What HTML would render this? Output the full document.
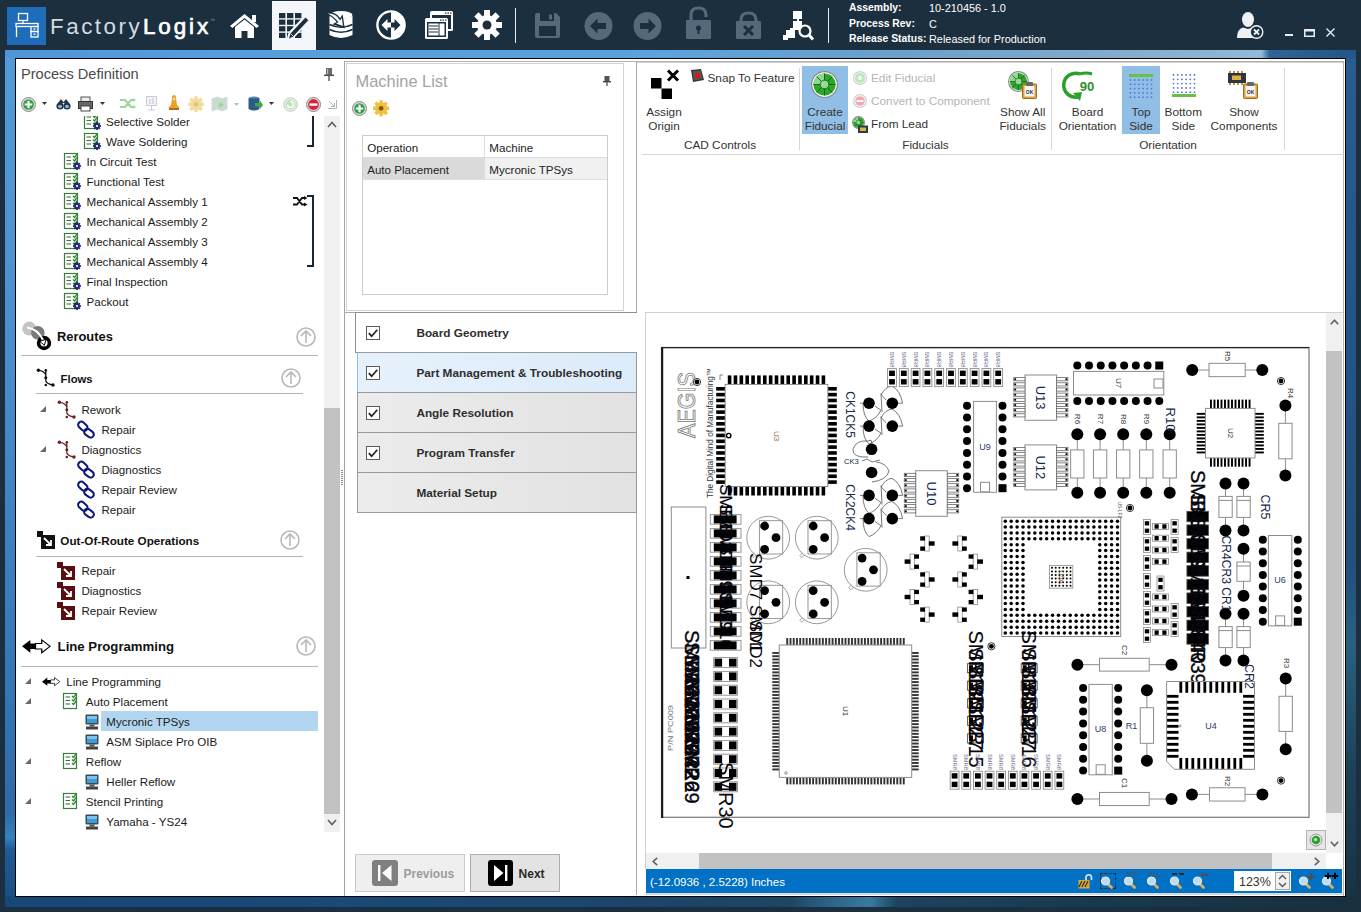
<!DOCTYPE html><html><head><meta charset="utf-8"><style>
*{box-sizing:border-box}
html,body{margin:0;padding:0}
body{width:1361px;height:912px;background:#1b2f3e;position:relative;overflow:hidden;font-family:"Liberation Sans",sans-serif;color:#222}
.a{position:absolute}
.t{position:absolute;white-space:nowrap;line-height:16px}
svg{position:absolute;overflow:visible}
</style></head><body>
<div class="a" style="left:7px;top:7px;width:39px;height:38px;background:#1f6cb8"></div>
<svg style="left:7px;top:7px" width="39" height="38" viewBox="0 0 39 38"><g fill="none" stroke="#fff" stroke-width="1.3">
  <rect x="11.5" y="6.5" width="9" height="7"/><line x1="16" y1="13.5" x2="16" y2="16.5"/>
  <rect x="9" y="16.5" width="22" height="3"/><line x1="9.5" y1="19.5" x2="9.5" y2="30"/>
  <rect x="24" y="19.5" width="7" height="5"/><rect x="24" y="24.5" width="7" height="5.5"/>
  <line x1="26.5" y1="22" x2="28.5" y2="22"/><line x1="26.5" y1="27.2" x2="28.5" y2="27.2"/></g></svg>
<div class="t" style="left:50px;top:13.5px;font-size:22.4px;line-height:26px;color:#d4dbe1;letter-spacing:2.5px">Factory</div>
<div class="t" style="left:143px;top:13.5px;font-size:22.4px;line-height:26px;color:#fff;font-weight:normal;-webkit-text-stroke:0.7px #fff;letter-spacing:2.9px">Logix</div>
<div class="t" style="left:210px;top:17.0px;font-size:5px;line-height:6px;color:#8a9aa8;font-weight:normal;">™</div>
<div class="a" style="left:272px;top:1px;width:44px;height:49px;background:#f5f6f9"></div>
<svg style="left:229px;top:13px" width="32" height="26" viewBox="0 0 32 26"><path d="M1 13 L15.5 1 L30 13 L27.5 15 L15.5 5 L3.5 15 Z" fill="#ffffff"/>
     <rect x="23" y="2" width="4" height="7" fill="#ffffff"/>
     <path d="M6 14 L15.5 6.5 L25 14 L25 25 L18.5 25 L18.5 18 L12.5 18 L12.5 25 L6 25 Z" fill="#ffffff"/></svg>
<svg style="left:279px;top:12.5px" width="30" height="27" viewBox="0 0 30 27"><rect x="0" y="0.0" width="6.4" height="5.2" fill="#1b2f3e"/><rect x="8" y="0.0" width="6.4" height="5.2" fill="#1b2f3e"/><rect x="16" y="0.0" width="6.4" height="5.2" fill="#1b2f3e"/><rect x="0" y="6.6" width="6.4" height="5.2" fill="#1b2f3e"/><rect x="8" y="6.6" width="6.4" height="5.2" fill="#1b2f3e"/><rect x="16" y="6.6" width="6.4" height="5.2" fill="#1b2f3e"/><rect x="0" y="13.2" width="6.4" height="5.2" fill="#1b2f3e"/><rect x="8" y="13.2" width="6.4" height="5.2" fill="#1b2f3e"/><rect x="16" y="13.2" width="6.4" height="5.2" fill="#1b2f3e"/><rect x="0" y="19.799999999999997" width="6.4" height="5.2" fill="#1b2f3e"/><rect x="8" y="19.799999999999997" width="6.4" height="5.2" fill="#1b2f3e"/><rect x="16" y="19.799999999999997" width="6.4" height="5.2" fill="#1b2f3e"/><path d="M9.5 25.5 L11 20 L26.5 3.5 L30 6.8 L14.5 23.3 Z" fill="#f5f6f9" stroke="#f5f6f9" stroke-width="3"/>
      <path d="M10 25.8 L11.5 20.5 L26.5 4.5 L29.3 7.2 L14.3 23.3 Z" fill="#1b2f3e"/>
      <path d="M11.5 20.5 L14.3 23.3" stroke="#f5f6f9" stroke-width="0.8"/></svg>
<svg style="left:328px;top:10px" width="26" height="30" viewBox="0 0 26 30"><ellipse cx="13" cy="5" rx="11.5" ry="4" fill="#ffffff"/>
      <path d="M1.5 6 L1.5 25 Q13 31 24.5 25 L24.5 6 Q13 12 1.5 6Z" fill="#ffffff"/>
      <path d="M1.5 14.5 Q13 20 24.5 14.5 M1.5 19.5 Q13 25 24.5 19.5" stroke="#1b2f3e" stroke-width="1.6" fill="none"/>
      <path d="M-1 3 Q8 2 12 10 L14 7 L15.5 17 L7 14 L10 12.5 Q7 7 -1 3Z" fill="#1b2f3e" stroke="#1b2f3e" stroke-width="2"/>
      <path d="M0 3.5 Q8 3 12 10.5 L13.8 8 L15 16 L8 13.5 L10.5 12.2 Q7 7.5 0 3.5Z" fill="#ffffff"/></svg>
<svg style="left:376px;top:10px" width="30" height="30" viewBox="0 0 30 30"><circle cx="15" cy="15" r="13.6" fill="none" stroke="#ffffff" stroke-width="2.4"/>
      <path d="M15 1.5 A13.5 13.5 0 0 1 15 28.5 Z" fill="#ffffff"/>
      <path d="M5.5 15 L11.5 9 L11.5 12.5 L15 12.5 L15 17.5 L11.5 17.5 L11.5 21 Z" fill="#ffffff"/>
      <path d="M24.5 15 L18.5 9 L18.5 12.5 L15 12.5 L15 17.5 L18.5 17.5 L18.5 21 Z" fill="#1b2f3e"/></svg>
<svg style="left:424px;top:10px" width="30" height="30" viewBox="0 0 30 30"><rect x="6" y="1" width="23" height="20" rx="1.5" fill="#ffffff"/>
      <rect x="8" y="5" width="19" height="14" fill="#1b2f3e"/>
      <rect x="1" y="8" width="23" height="21" rx="1.5" fill="#ffffff"/>
      <rect x="3" y="12" width="19" height="15" fill="#1b2f3e"/>
      <rect x="4.5" y="13.5" width="10" height="12" fill="#ffffff"/>
      <rect x="15.5" y="13.5" width="5" height="12" fill="#ffffff"/>
      <g stroke="#1b2f3e" stroke-width="1"><line x1="5" y1="16" x2="14" y2="16"/><line x1="5" y1="19" x2="14" y2="19"/><line x1="5" y1="22" x2="14" y2="22"/></g>
      <g fill="#1b2f3e"><rect x="16" y="9.5" width="1.5" height="1.2"/><rect x="18.5" y="9.5" width="1.5" height="1.2"/><rect x="21" y="9.5" width="1.5" height="1.2"/>
      <rect x="21" y="2.5" width="1.5" height="1.2"/><rect x="23.5" y="2.5" width="1.5" height="1.2"/><rect x="26" y="2.5" width="1.5" height="1.2"/></g></svg>
<svg style="left:472px;top:10px" width="30" height="30" viewBox="0 0 30 30"><rect x="12" y="0" width="6" height="7" fill="#ffffff" transform="rotate(0 15 15)"/><rect x="12" y="0" width="6" height="7" fill="#ffffff" transform="rotate(45 15 15)"/><rect x="12" y="0" width="6" height="7" fill="#ffffff" transform="rotate(90 15 15)"/><rect x="12" y="0" width="6" height="7" fill="#ffffff" transform="rotate(135 15 15)"/><rect x="12" y="0" width="6" height="7" fill="#ffffff" transform="rotate(180 15 15)"/><rect x="12" y="0" width="6" height="7" fill="#ffffff" transform="rotate(225 15 15)"/><rect x="12" y="0" width="6" height="7" fill="#ffffff" transform="rotate(270 15 15)"/><rect x="12" y="0" width="6" height="7" fill="#ffffff" transform="rotate(315 15 15)"/><circle cx="15" cy="15" r="10" fill="#ffffff"/><circle cx="15" cy="15" r="4.5" fill="#1b2f3e"/></svg>
<div class="a" style="left:515px;top:8px;width:1px;height:35px;background:#e8ecf0"></div>
<div class="a" style="left:828px;top:8px;width:1px;height:35px;background:#e8ecf0"></div>
<svg style="left:535px;top:13px" width="26" height="25" viewBox="0 0 26 25"><path d="M0 2 Q0 0 2 0 L21 0 L25 4 L25 23 Q25 25 23 25 L2 25 Q0 25 0 23Z" fill="#56687a"/>
      <rect x="5" y="0" width="14" height="8" fill="#1b2f3e"/><rect x="14" y="1.5" width="3" height="5" fill="#56687a"/>
      <rect x="4" y="13" width="17" height="10" fill="#1b2f3e"/></svg>
<svg style="left:584px;top:12px" width="29" height="28" viewBox="0 0 29 28"><circle cx="14.5" cy="14" r="14" fill="#56687a"/>
      <path d="M6 14 L13.5 6.5 L13.5 11 L22 11 L22 17 L13.5 17 L13.5 21.5Z" fill="#1b2f3e"/></svg>
<svg style="left:633px;top:12px" width="29" height="28" viewBox="0 0 29 28"><circle cx="14.5" cy="14" r="14" fill="#56687a"/>
      <path d="M23 14 L15.5 6.5 L15.5 11 L7 11 L7 17 L15.5 17 L15.5 21.5Z" fill="#1b2f3e"/></svg>
<svg style="left:686px;top:6px" width="25" height="34" viewBox="0 0 25 34"><path d="M5 15 L5 9 Q5 2 12.5 2 Q20 2 20 9 L20 11" fill="none" stroke="#56687a" stroke-width="3.2"/>
      <rect x="0" y="14" width="25" height="19" rx="1" fill="#56687a"/>
      <circle cx="12.5" cy="22" r="2.5" fill="#1b2f3e"/><rect x="11.5" y="22" width="2" height="6" fill="#1b2f3e"/></svg>
<svg style="left:736px;top:11px" width="25" height="29" viewBox="0 0 25 29"><path d="M5 11 L5 9 Q5 2 12.5 2 Q20 2 20 9 L20 11" fill="none" stroke="#56687a" stroke-width="3.2"/>
      <rect x="0" y="10" width="25" height="18" rx="1" fill="#56687a"/>
      <path d="M8 15 L17 24 M17 15 L8 24" stroke="#1b2f3e" stroke-width="3"/></svg>
<svg style="left:783px;top:11px" width="31" height="30" viewBox="0 0 31 30"><rect x="10" y="0" width="9" height="8" fill="#ffffff"/><rect x="10" y="10" width="9" height="7" fill="#ffffff"/>
      <rect x="3" y="19" width="9" height="8" fill="#ffffff"/><rect x="0" y="24" width="5" height="5" fill="#ffffff"/>
      <rect x="14" y="8" width="2" height="3" fill="#ffffff"/><rect x="7" y="17" width="9" height="2" fill="#ffffff"/>
      <circle cx="22" cy="20" r="5.5" fill="none" stroke="#ffffff" stroke-width="2.2"/><path d="M26 24 L30 28.5" stroke="#ffffff" stroke-width="3"/></svg>
<div class="t" style="left:849px;top:1.0px;font-size:10.4px;line-height:14px;color:#fff;font-weight:bold;">Assembly:</div>
<div class="t" style="left:849px;top:17.0px;font-size:10.4px;line-height:14px;color:#fff;font-weight:bold;">Process Rev:</div>
<div class="t" style="left:849px;top:32.0px;font-size:10.4px;line-height:14px;color:#fff;font-weight:bold;">Release Status:</div>
<div class="t" style="left:929px;top:1.0px;font-size:10.9px;line-height:14px;color:#fff;font-weight:normal;">10-210456 - 1.0</div>
<div class="t" style="left:929px;top:17.0px;font-size:10.9px;line-height:14px;color:#fff;font-weight:normal;">C</div>
<div class="t" style="left:929px;top:32.0px;font-size:10.9px;line-height:14px;color:#fff;font-weight:normal;">Released for Production</div>
<svg style="left:1237px;top:12px" width="27" height="28" viewBox="0 0 27 28"><ellipse cx="11" cy="7.5" rx="6" ry="7.5" fill="#eef1f4"/>
      <path d="M0 26 Q0 17 6 15.5 L11 17 L16 15.5 Q20 16.5 21 19 L21 26Z" fill="#eef1f4"/>
      <circle cx="19.5" cy="20" r="7" fill="#eef1f4"/><circle cx="19.5" cy="20" r="5.6" fill="#1b2f3e"/>
      <path d="M17 17.5 L22 22.5 M22 17.5 L17 22.5" stroke="#eef1f4" stroke-width="1.8"/></svg>
<div class="a" style="left:1285px;top:34px;width:8px;height:2px;background:#e8ecf0"></div>
<svg style="left:1304px;top:29px" width="11" height="8" viewBox="0 0 11 8"><rect x="0.75" y="0.75" width="9.5" height="6.5" fill="none" stroke="#e8ecf0" stroke-width="1.5"/><rect x="0.5" y="0.5" width="10" height="2" fill="#e8ecf0"/></svg>
<svg style="left:1326px;top:28px" width="9" height="9" viewBox="0 0 9 9"><path d="M0.5 0.5 L8.5 8.5 M8.5 0.5 L0.5 8.5" stroke="#e8ecf0" stroke-width="1.4"/></svg>
<div class="a" style="left:5px;top:50px;width:1351px;height:8px;background:linear-gradient(90deg,#4f96d6 0%,#569fdc 20%,#5aa2dc 45%,#6aa0cc 65%,#7fa9cb 80%,#94b8d6 93%,#2e6596 93.6%,#285c8e 97%,#24558a 100%)"></div>
<div class="a" style="left:5px;top:58px;width:10px;height:838px;background:linear-gradient(180deg,#559ad8 0%,#4a8ecf 35%,#3a7cbe 65%,#2c6ca8 90%,#3580bd 93%,#1f5a94 94.5%,#1b4f86 100%)"></div>
<div class="a" style="left:1346px;top:58px;width:10px;height:838px;background:linear-gradient(180deg,#2a5c8e 0%,#245487 35%,#22507a 60%,#2a6080 70%,#1d4258 85%,#183444 100%)"></div>
<div class="a" style="left:5px;top:896px;width:1351px;height:11px;background:linear-gradient(90deg,#174777 0%,#1a4a78 25%,#1b456c 45%,#1c4662 58%,#2a6488 61%,#3a7aa0 64%,#1c4460 66%,#183a4e 80%,#17303f 100%)"></div>
<div class="a" style="left:15px;top:58px;width:1331px;height:839px;background:#fff;border:1px solid #000"></div>
<div class="t" style="left:21px;top:65.0px;font-size:14.6px;line-height:18px;color:#4a4a4a;font-weight:normal;">Process Definition</div>
<svg style="left:324px;top:68px" width="10" height="13" viewBox="0 0 10 13"><rect x="2" y="0" width="6" height="7" fill="#6a6a6a"/><rect x="0" y="6.5" width="10" height="1.6" fill="#555"/><rect x="4.3" y="8" width="1.4" height="5" fill="#555"/><rect x="3" y="1" width="1.2" height="5" fill="#bbb"/></svg>
<svg style="left:21px;top:97px" width="15" height="15" viewBox="0 0 15 15"><circle cx="7.5" cy="7.5" r="7" fill="#ddd" stroke="#8a8a8a" stroke-width="1"/>
    <circle cx="7.5" cy="7.5" r="5.3" fill="#2ea043"/>
    <path d="M7.5 3.8 L7.5 11.2 M3.8 7.5 L11.2 7.5" stroke="#fff" stroke-width="2.2"/></svg>
<svg style="left:42px;top:102px" width="6" height="4" viewBox="0 0 6 4"><path d="M0 0 L5 0 L2.5 3Z" fill="#333"/></svg>
<svg style="left:56px;top:98px" width="15" height="12" viewBox="0 0 15 12"><g fill="#2a3340"><ellipse cx="4" cy="8" rx="3.6" ry="3.5"/><ellipse cx="11" cy="8" rx="3.6" ry="3.5"/><path d="M2 5 L5 1 L8 5Z M7 5 L10 1 L13 5Z"/></g><ellipse cx="4" cy="8.5" rx="2" ry="1.7" fill="#7fb8e8"/><ellipse cx="11" cy="8.5" rx="2" ry="1.7" fill="#7fb8e8"/></svg>
<svg style="left:78px;top:97px" width="15" height="14" viewBox="0 0 15 14"><rect x="3" y="0" width="9" height="5" fill="#eee" stroke="#555"/><rect x="0.5" y="4.5" width="14" height="7" fill="#666" stroke="#333"/><rect x="3" y="9" width="9" height="5" fill="#fff" stroke="#444"/></svg>
<svg style="left:100px;top:102px" width="6" height="4" viewBox="0 0 6 4"><path d="M0 0 L5 0 L2.5 3Z" fill="#333"/></svg>
<svg style="left:120px;top:98px" width="16" height="12" viewBox="0 0 16 12"><path d="M0 2 L5 2 L11 9 L14 9 M0 9 L5 9 L11 2 L14 2" stroke="#9ad69a" stroke-width="2.2" fill="none"/><path d="M13 0 L16 2 L13 4Z M13 7 L16 9 L13 11Z" fill="#9ad69a"/></svg>
<svg style="left:146px;top:96px" width="11" height="15" viewBox="0 0 11 15"><rect x="0.5" y="0.5" width="10" height="9" fill="#f4f4f4" stroke="#ccc"/><rect x="3" y="3" width="2" height="5" fill="#d8d8f0"/><rect x="6" y="2" width="2" height="6" fill="#d8d8f0"/><path d="M5.5 10 L5.5 14 M2 14 L9 14" stroke="#ccc"/></svg>
<svg style="left:168px;top:95px" width="12" height="16" viewBox="0 0 12 16"><path d="M6 0 Q8 0 8 3 L9 10 L12 13 L0 13 L3 10 L4 3 Q4 0 6 0Z" fill="#e8a030"/><rect x="1" y="13" width="10" height="2" fill="#b86a10"/><circle cx="6" cy="4" r="1.5" fill="#f8d080"/></svg>
<svg style="left:188px;top:96px" width="17" height="17" viewBox="0 0 17 17"><rect x="6.4" y="0.3" width="3.4" height="16" fill="#f5dc9a" transform="rotate(0 8.1 8.3)"/><rect x="6.4" y="0.3" width="3.4" height="16" fill="#f5dc9a" transform="rotate(45 8.1 8.3)"/><rect x="6.4" y="0.3" width="3.4" height="16" fill="#f5dc9a" transform="rotate(90 8.1 8.3)"/><rect x="6.4" y="0.3" width="3.4" height="16" fill="#f5dc9a" transform="rotate(135 8.1 8.3)"/><circle cx="8.1" cy="8.3" r="6" fill="#f5dc9a"/><circle cx="8.1" cy="8.3" r="2.4" fill="#d9c48a"/></svg>
<svg style="left:212px;top:97px" width="16" height="15" viewBox="0 0 16 15"><path d="M0 2 L5 0 L10 2 L15 0 L15 12 L10 14 L5 12 L0 14Z" fill="#c9dcc9" stroke="#d0d8e8"/><path d="M7 5 L12 8 L7 11Z" fill="#a8d0a8"/></svg>
<svg style="left:234px;top:103px" width="5" height="3" viewBox="0 0 5 3"><path d="M0 0 L5 0 L2.5 3Z" fill="#bbb"/></svg>
<svg style="left:248px;top:96px" width="15" height="16" viewBox="0 0 15 16"><ellipse cx="6" cy="2.5" rx="5.5" ry="2" fill="#5a86b0"/><path d="M0.5 2.5 L0.5 13 Q6 16 11.5 13 L11.5 2.5Z" fill="#2d5a85"/><path d="M7 7 L12 7 L12 4.5 L15 9 L12 13 L12 10.5 L7 10.5Z" fill="#3aaa3a"/></svg>
<svg style="left:269px;top:102px" width="6" height="4" viewBox="0 0 6 4"><path d="M0 0 L5 0 L2.5 3Z" fill="#333"/></svg>
<svg style="left:283px;top:97px" width="15" height="15" viewBox="0 0 15 15"><circle cx="7.5" cy="7.5" r="6.8" fill="#e8f0e8" stroke="#c8c8c8" stroke-width="1"/><circle cx="7.5" cy="7.5" r="5" fill="#bfe3bf"/><path d="M4.5 7.5 A3 3 0 1 0 7.5 4.5" stroke="#fff" stroke-width="1.4" fill="none"/></svg>
<svg style="left:306px;top:97px" width="15" height="15" viewBox="0 0 15 15"><circle cx="7.5" cy="7.5" r="7" fill="#ddd" stroke="#888" stroke-width="1"/><circle cx="7.5" cy="7.5" r="5.4" fill="#e0203a"/><rect x="3.5" y="6.4" width="8" height="2.4" fill="#fff"/></svg>
<svg style="left:328px;top:100px" width="9" height="9" viewBox="0 0 9 9"><path d="M1 1 L6.5 6.5 M3 6.5 L6.5 6.5 L6.5 3 M0 8.5 L8.5 8.5 L8.5 0" stroke="#aaa" stroke-width="0.9" fill="none"/></svg>
<svg style="left:84px;top:112px" width="17" height="19" viewBox="0 0 17 19"><rect x="0.5" y="1.5" width="13" height="15" fill="#fff" stroke="#3f7a3f" stroke-width="1.2"/>
    <g stroke="#3f6f3f" stroke-width="1.1"><line x1="2.5" y1="5" x2="7" y2="5"/><line x1="2.5" y1="8.5" x2="7" y2="8.5"/><line x1="2.5" y1="12" x2="7" y2="12"/></g>
    <path d="M9 4 L10.5 5.5 L13.5 1.5 M9 7.5 L10.5 9 L13.5 5 M9 11 L10.5 12.5 L13.5 8.5" stroke="#2d8a2d" stroke-width="1.3" fill="none"/><rect x="12.1" y="10" width="1.8" height="8" fill="#222a6a" transform="rotate(0 13 14)"/><rect x="12.1" y="10" width="1.8" height="8" fill="#222a6a" transform="rotate(45 13 14)"/><rect x="12.1" y="10" width="1.8" height="8" fill="#222a6a" transform="rotate(90 13 14)"/><rect x="12.1" y="10" width="1.8" height="8" fill="#222a6a" transform="rotate(135 13 14)"/><circle cx="13" cy="14" r="2.8" fill="#222a6a"/><circle cx="13" cy="14" r="1.1" fill="#fff"/></svg>
<div class="t" style="left:106px;top:114.0px;font-size:11.6px;line-height:16px;color:#1a1a1a;font-weight:normal;">Selective Solder</div>
<svg style="left:84px;top:132px" width="17" height="19" viewBox="0 0 17 19"><rect x="0.5" y="1.5" width="13" height="15" fill="#fff" stroke="#3f7a3f" stroke-width="1.2"/>
    <g stroke="#3f6f3f" stroke-width="1.1"><line x1="2.5" y1="5" x2="7" y2="5"/><line x1="2.5" y1="8.5" x2="7" y2="8.5"/><line x1="2.5" y1="12" x2="7" y2="12"/></g>
    <path d="M9 4 L10.5 5.5 L13.5 1.5 M9 7.5 L10.5 9 L13.5 5 M9 11 L10.5 12.5 L13.5 8.5" stroke="#2d8a2d" stroke-width="1.3" fill="none"/><rect x="12.1" y="10" width="1.8" height="8" fill="#222a6a" transform="rotate(0 13 14)"/><rect x="12.1" y="10" width="1.8" height="8" fill="#222a6a" transform="rotate(45 13 14)"/><rect x="12.1" y="10" width="1.8" height="8" fill="#222a6a" transform="rotate(90 13 14)"/><rect x="12.1" y="10" width="1.8" height="8" fill="#222a6a" transform="rotate(135 13 14)"/><circle cx="13" cy="14" r="2.8" fill="#222a6a"/><circle cx="13" cy="14" r="1.1" fill="#fff"/></svg>
<div class="t" style="left:106px;top:134.0px;font-size:11.6px;line-height:16px;color:#1a1a1a;font-weight:normal;">Wave Soldering</div>
<svg style="left:64px;top:152px" width="17" height="19" viewBox="0 0 17 19"><rect x="0.5" y="1.5" width="13" height="15" fill="#fff" stroke="#3f7a3f" stroke-width="1.2"/>
    <g stroke="#3f6f3f" stroke-width="1.1"><line x1="2.5" y1="5" x2="7" y2="5"/><line x1="2.5" y1="8.5" x2="7" y2="8.5"/><line x1="2.5" y1="12" x2="7" y2="12"/></g>
    <path d="M9 4 L10.5 5.5 L13.5 1.5 M9 7.5 L10.5 9 L13.5 5 M9 11 L10.5 12.5 L13.5 8.5" stroke="#2d8a2d" stroke-width="1.3" fill="none"/><rect x="12.1" y="10" width="1.8" height="8" fill="#222a6a" transform="rotate(0 13 14)"/><rect x="12.1" y="10" width="1.8" height="8" fill="#222a6a" transform="rotate(45 13 14)"/><rect x="12.1" y="10" width="1.8" height="8" fill="#222a6a" transform="rotate(90 13 14)"/><rect x="12.1" y="10" width="1.8" height="8" fill="#222a6a" transform="rotate(135 13 14)"/><circle cx="13" cy="14" r="2.8" fill="#222a6a"/><circle cx="13" cy="14" r="1.1" fill="#fff"/></svg>
<div class="t" style="left:86.5px;top:154.0px;font-size:11.6px;line-height:16px;color:#1a1a1a;font-weight:normal;">In Circuit Test</div>
<svg style="left:64px;top:172px" width="17" height="19" viewBox="0 0 17 19"><rect x="0.5" y="1.5" width="13" height="15" fill="#fff" stroke="#3f7a3f" stroke-width="1.2"/>
    <g stroke="#3f6f3f" stroke-width="1.1"><line x1="2.5" y1="5" x2="7" y2="5"/><line x1="2.5" y1="8.5" x2="7" y2="8.5"/><line x1="2.5" y1="12" x2="7" y2="12"/></g>
    <path d="M9 4 L10.5 5.5 L13.5 1.5 M9 7.5 L10.5 9 L13.5 5 M9 11 L10.5 12.5 L13.5 8.5" stroke="#2d8a2d" stroke-width="1.3" fill="none"/><rect x="12.1" y="10" width="1.8" height="8" fill="#222a6a" transform="rotate(0 13 14)"/><rect x="12.1" y="10" width="1.8" height="8" fill="#222a6a" transform="rotate(45 13 14)"/><rect x="12.1" y="10" width="1.8" height="8" fill="#222a6a" transform="rotate(90 13 14)"/><rect x="12.1" y="10" width="1.8" height="8" fill="#222a6a" transform="rotate(135 13 14)"/><circle cx="13" cy="14" r="2.8" fill="#222a6a"/><circle cx="13" cy="14" r="1.1" fill="#fff"/></svg>
<div class="t" style="left:86.5px;top:174.0px;font-size:11.6px;line-height:16px;color:#1a1a1a;font-weight:normal;">Functional Test</div>
<svg style="left:64px;top:192px" width="17" height="19" viewBox="0 0 17 19"><rect x="0.5" y="1.5" width="13" height="15" fill="#fff" stroke="#3f7a3f" stroke-width="1.2"/>
    <g stroke="#3f6f3f" stroke-width="1.1"><line x1="2.5" y1="5" x2="7" y2="5"/><line x1="2.5" y1="8.5" x2="7" y2="8.5"/><line x1="2.5" y1="12" x2="7" y2="12"/></g>
    <path d="M9 4 L10.5 5.5 L13.5 1.5 M9 7.5 L10.5 9 L13.5 5 M9 11 L10.5 12.5 L13.5 8.5" stroke="#2d8a2d" stroke-width="1.3" fill="none"/><rect x="12.1" y="10" width="1.8" height="8" fill="#222a6a" transform="rotate(0 13 14)"/><rect x="12.1" y="10" width="1.8" height="8" fill="#222a6a" transform="rotate(45 13 14)"/><rect x="12.1" y="10" width="1.8" height="8" fill="#222a6a" transform="rotate(90 13 14)"/><rect x="12.1" y="10" width="1.8" height="8" fill="#222a6a" transform="rotate(135 13 14)"/><circle cx="13" cy="14" r="2.8" fill="#222a6a"/><circle cx="13" cy="14" r="1.1" fill="#fff"/></svg>
<div class="t" style="left:86.5px;top:194.0px;font-size:11.6px;line-height:16px;color:#1a1a1a;font-weight:normal;">Mechanical Assembly 1</div>
<svg style="left:64px;top:212px" width="17" height="19" viewBox="0 0 17 19"><rect x="0.5" y="1.5" width="13" height="15" fill="#fff" stroke="#3f7a3f" stroke-width="1.2"/>
    <g stroke="#3f6f3f" stroke-width="1.1"><line x1="2.5" y1="5" x2="7" y2="5"/><line x1="2.5" y1="8.5" x2="7" y2="8.5"/><line x1="2.5" y1="12" x2="7" y2="12"/></g>
    <path d="M9 4 L10.5 5.5 L13.5 1.5 M9 7.5 L10.5 9 L13.5 5 M9 11 L10.5 12.5 L13.5 8.5" stroke="#2d8a2d" stroke-width="1.3" fill="none"/><rect x="12.1" y="10" width="1.8" height="8" fill="#222a6a" transform="rotate(0 13 14)"/><rect x="12.1" y="10" width="1.8" height="8" fill="#222a6a" transform="rotate(45 13 14)"/><rect x="12.1" y="10" width="1.8" height="8" fill="#222a6a" transform="rotate(90 13 14)"/><rect x="12.1" y="10" width="1.8" height="8" fill="#222a6a" transform="rotate(135 13 14)"/><circle cx="13" cy="14" r="2.8" fill="#222a6a"/><circle cx="13" cy="14" r="1.1" fill="#fff"/></svg>
<div class="t" style="left:86.5px;top:214.0px;font-size:11.6px;line-height:16px;color:#1a1a1a;font-weight:normal;">Mechanical Assembly 2</div>
<svg style="left:64px;top:232px" width="17" height="19" viewBox="0 0 17 19"><rect x="0.5" y="1.5" width="13" height="15" fill="#fff" stroke="#3f7a3f" stroke-width="1.2"/>
    <g stroke="#3f6f3f" stroke-width="1.1"><line x1="2.5" y1="5" x2="7" y2="5"/><line x1="2.5" y1="8.5" x2="7" y2="8.5"/><line x1="2.5" y1="12" x2="7" y2="12"/></g>
    <path d="M9 4 L10.5 5.5 L13.5 1.5 M9 7.5 L10.5 9 L13.5 5 M9 11 L10.5 12.5 L13.5 8.5" stroke="#2d8a2d" stroke-width="1.3" fill="none"/><rect x="12.1" y="10" width="1.8" height="8" fill="#222a6a" transform="rotate(0 13 14)"/><rect x="12.1" y="10" width="1.8" height="8" fill="#222a6a" transform="rotate(45 13 14)"/><rect x="12.1" y="10" width="1.8" height="8" fill="#222a6a" transform="rotate(90 13 14)"/><rect x="12.1" y="10" width="1.8" height="8" fill="#222a6a" transform="rotate(135 13 14)"/><circle cx="13" cy="14" r="2.8" fill="#222a6a"/><circle cx="13" cy="14" r="1.1" fill="#fff"/></svg>
<div class="t" style="left:86.5px;top:234.0px;font-size:11.6px;line-height:16px;color:#1a1a1a;font-weight:normal;">Mechanical Assembly 3</div>
<svg style="left:64px;top:252px" width="17" height="19" viewBox="0 0 17 19"><rect x="0.5" y="1.5" width="13" height="15" fill="#fff" stroke="#3f7a3f" stroke-width="1.2"/>
    <g stroke="#3f6f3f" stroke-width="1.1"><line x1="2.5" y1="5" x2="7" y2="5"/><line x1="2.5" y1="8.5" x2="7" y2="8.5"/><line x1="2.5" y1="12" x2="7" y2="12"/></g>
    <path d="M9 4 L10.5 5.5 L13.5 1.5 M9 7.5 L10.5 9 L13.5 5 M9 11 L10.5 12.5 L13.5 8.5" stroke="#2d8a2d" stroke-width="1.3" fill="none"/><rect x="12.1" y="10" width="1.8" height="8" fill="#222a6a" transform="rotate(0 13 14)"/><rect x="12.1" y="10" width="1.8" height="8" fill="#222a6a" transform="rotate(45 13 14)"/><rect x="12.1" y="10" width="1.8" height="8" fill="#222a6a" transform="rotate(90 13 14)"/><rect x="12.1" y="10" width="1.8" height="8" fill="#222a6a" transform="rotate(135 13 14)"/><circle cx="13" cy="14" r="2.8" fill="#222a6a"/><circle cx="13" cy="14" r="1.1" fill="#fff"/></svg>
<div class="t" style="left:86.5px;top:254.0px;font-size:11.6px;line-height:16px;color:#1a1a1a;font-weight:normal;">Mechanical Assembly 4</div>
<svg style="left:64px;top:272px" width="17" height="19" viewBox="0 0 17 19"><rect x="0.5" y="1.5" width="13" height="15" fill="#fff" stroke="#3f7a3f" stroke-width="1.2"/>
    <g stroke="#3f6f3f" stroke-width="1.1"><line x1="2.5" y1="5" x2="7" y2="5"/><line x1="2.5" y1="8.5" x2="7" y2="8.5"/><line x1="2.5" y1="12" x2="7" y2="12"/></g>
    <path d="M9 4 L10.5 5.5 L13.5 1.5 M9 7.5 L10.5 9 L13.5 5 M9 11 L10.5 12.5 L13.5 8.5" stroke="#2d8a2d" stroke-width="1.3" fill="none"/><rect x="12.1" y="10" width="1.8" height="8" fill="#222a6a" transform="rotate(0 13 14)"/><rect x="12.1" y="10" width="1.8" height="8" fill="#222a6a" transform="rotate(45 13 14)"/><rect x="12.1" y="10" width="1.8" height="8" fill="#222a6a" transform="rotate(90 13 14)"/><rect x="12.1" y="10" width="1.8" height="8" fill="#222a6a" transform="rotate(135 13 14)"/><circle cx="13" cy="14" r="2.8" fill="#222a6a"/><circle cx="13" cy="14" r="1.1" fill="#fff"/></svg>
<div class="t" style="left:86.5px;top:274.0px;font-size:11.6px;line-height:16px;color:#1a1a1a;font-weight:normal;">Final Inspection</div>
<svg style="left:64px;top:292px" width="17" height="19" viewBox="0 0 17 19"><rect x="0.5" y="1.5" width="13" height="15" fill="#fff" stroke="#3f7a3f" stroke-width="1.2"/>
    <g stroke="#3f6f3f" stroke-width="1.1"><line x1="2.5" y1="5" x2="7" y2="5"/><line x1="2.5" y1="8.5" x2="7" y2="8.5"/><line x1="2.5" y1="12" x2="7" y2="12"/></g>
    <path d="M9 4 L10.5 5.5 L13.5 1.5 M9 7.5 L10.5 9 L13.5 5 M9 11 L10.5 12.5 L13.5 8.5" stroke="#2d8a2d" stroke-width="1.3" fill="none"/><rect x="12.1" y="10" width="1.8" height="8" fill="#222a6a" transform="rotate(0 13 14)"/><rect x="12.1" y="10" width="1.8" height="8" fill="#222a6a" transform="rotate(45 13 14)"/><rect x="12.1" y="10" width="1.8" height="8" fill="#222a6a" transform="rotate(90 13 14)"/><rect x="12.1" y="10" width="1.8" height="8" fill="#222a6a" transform="rotate(135 13 14)"/><circle cx="13" cy="14" r="2.8" fill="#222a6a"/><circle cx="13" cy="14" r="1.1" fill="#fff"/></svg>
<div class="t" style="left:86.5px;top:294.0px;font-size:11.6px;line-height:16px;color:#1a1a1a;font-weight:normal;">Packout</div>
<div class="a" style="left:60px;top:112px;width:260px;height:4px;background:#fff"></div>
<div class="a" style="left:312px;top:116px;width:2px;height:30px;background:#1b2634"></div>
<div class="a" style="left:307px;top:145px;width:7px;height:2px;background:#1b2634"></div>
<div class="a" style="left:312px;top:195px;width:2px;height:72px;background:#1b2634"></div>
<div class="a" style="left:307px;top:195px;width:7px;height:2px;background:#1b2634"></div>
<div class="a" style="left:307px;top:265px;width:7px;height:2px;background:#1b2634"></div>
<svg style="left:293px;top:196px" width="15" height="11" viewBox="0 0 15 11"><path d="M0 2 L4 2 L9 8.5 L12 8.5 M0 8.5 L4 8.5 L9 2 L12 2" stroke="#111" stroke-width="1.8" fill="none"/><path d="M11 0 L14.5 2 L11 4Z M11 6.5 L14.5 8.5 L11 10.5Z" fill="#111"/></svg>
<div class="a" style="left:324px;top:116px;width:16px;height:716px;background:#f0f0f0"></div>
<div class="a" style="left:324px;top:408px;width:16px;height:406px;background:#c2c2c2"></div>
<svg style="left:327px;top:121px" width="10" height="7" viewBox="0 0 10 7"><path d="M1 6 L5 1.5 L9 6" stroke="#606060" stroke-width="1.6" fill="none"/></svg>
<svg style="left:327px;top:819px" width="10" height="7" viewBox="0 0 10 7"><path d="M1 1 L5 5.5 L9 1" stroke="#606060" stroke-width="1.6" fill="none"/></svg>
<div class="a" style="left:341px;top:470px;width:2px;height:1px;background:#8a8a8a"></div>
<div class="a" style="left:341px;top:472px;width:2px;height:1px;background:#8a8a8a"></div>
<div class="a" style="left:341px;top:474px;width:2px;height:1px;background:#8a8a8a"></div>
<div class="a" style="left:341px;top:476px;width:2px;height:1px;background:#8a8a8a"></div>
<div class="a" style="left:341px;top:478px;width:2px;height:1px;background:#8a8a8a"></div>
<div class="a" style="left:341px;top:480px;width:2px;height:1px;background:#8a8a8a"></div>
<div class="a" style="left:341px;top:482px;width:2px;height:1px;background:#8a8a8a"></div>
<div class="a" style="left:341px;top:484px;width:2px;height:1px;background:#8a8a8a"></div>
<svg style="left:23px;top:321px" width="30" height="30" viewBox="0 0 30 30"><circle cx="6.3" cy="7.6" r="7" fill="#c4c4c4"/>
      <circle cx="14.8" cy="11.8" r="6.8" fill="#7a7a7a"/>
      <circle cx="21" cy="22" r="7.2" fill="#000"/><circle cx="21" cy="22" r="3.6" fill="#fff"/>
      <path d="M4 6.5 Q15 8 20 19" stroke="#fff" stroke-width="2.2" fill="none"/>
      <path d="M16 20 L21.5 25 L24 17.5Z" fill="#000"/><path d="M17.5 20.5 L21 23.5 L22.5 19Z" fill="#fff"/></svg>
<div class="t" style="left:57px;top:328.0px;font-size:12.9px;line-height:18px;color:#111;font-weight:bold;">Reroutes</div>
<svg style="left:296px;top:327px" width="20" height="20" viewBox="0 0 20 20"><circle cx="10" cy="10" r="9" fill="none" stroke="#b8b8b8" stroke-width="1.6"/>
    <path d="M10 16 L10 4 M5 9 L10 4 L15 9" stroke="#b8b8b8" stroke-width="1.6" fill="none"/></svg>
<div class="a" style="left:21px;top:355px;width:297px;height:1px;background:#b4b4b4"></div>
<svg style="left:36px;top:369px" width="18" height="18" viewBox="0 0 18 18"><path d="M2.4 1.2 Q8 2 9.8 6 M9.8 1.2 L9.8 12 Q11 15 17 16" stroke="#111" stroke-width="1.3" fill="none"/>
    <g fill="#111"><circle cx="2.4" cy="1.2" r="1.7"/><circle cx="9.8" cy="1.2" r="1.3"/><circle cx="9.8" cy="8.8" r="1.5"/><circle cx="9.8" cy="16" r="1.3"/><circle cx="17" cy="16" r="1.7"/></g></svg>
<div class="t" style="left:60.6px;top:370.5px;font-size:11.3px;line-height:16px;color:#111;font-weight:bold;">Flows</div>
<svg style="left:281px;top:368px" width="20" height="20" viewBox="0 0 20 20"><circle cx="10" cy="10" r="9" fill="none" stroke="#b8b8b8" stroke-width="1.6"/>
    <path d="M10 16 L10 4 M5 9 L10 4 L15 9" stroke="#b8b8b8" stroke-width="1.6" fill="none"/></svg>
<div class="a" style="left:36px;top:393px;width:267px;height:1px;background:#b4b4b4"></div>
<svg style="left:40px;top:406px" width="6" height="6" viewBox="0 0 6 6"><path d="M6 0 L6 6 L0 6Z" fill="#6b6b6b"/></svg>
<svg style="left:57px;top:401px" width="18" height="18" viewBox="0 0 18 18"><path d="M2.4 1.2 Q8 2 9.8 6 M9.8 1.2 L9.8 12 Q11 15 17 16" stroke="#6a2020" stroke-width="1.3" fill="none"/>
    <g fill="#6a2020"><circle cx="2.4" cy="1.2" r="1.7"/><circle cx="9.8" cy="1.2" r="1.3"/><circle cx="9.8" cy="8.8" r="1.5"/><circle cx="9.8" cy="16" r="1.3"/><circle cx="17" cy="16" r="1.7"/></g></svg>
<div class="t" style="left:81.4px;top:402.0px;font-size:11.6px;line-height:16px;color:#1a1a1a;font-weight:normal;">Rework</div>
<svg style="left:77px;top:421px" width="18" height="18" viewBox="0 0 18 18"><g fill="none" stroke="#0c1a78" stroke-width="2.1">
    <rect x="-5.2" y="-3.2" width="10.4" height="6.4" rx="3.2" transform="translate(5.8 5.2) rotate(42)"/>
    <rect x="-5.2" y="-3.2" width="10.4" height="6.4" rx="3.2" transform="translate(12 12.2) rotate(36)"/></g></svg>
<div class="t" style="left:101.4px;top:422.0px;font-size:11.6px;line-height:16px;color:#1a1a1a;font-weight:normal;">Repair</div>
<svg style="left:40px;top:446px" width="6" height="6" viewBox="0 0 6 6"><path d="M6 0 L6 6 L0 6Z" fill="#6b6b6b"/></svg>
<svg style="left:57px;top:441px" width="18" height="18" viewBox="0 0 18 18"><path d="M2.4 1.2 Q8 2 9.8 6 M9.8 1.2 L9.8 12 Q11 15 17 16" stroke="#6a2020" stroke-width="1.3" fill="none"/>
    <g fill="#6a2020"><circle cx="2.4" cy="1.2" r="1.7"/><circle cx="9.8" cy="1.2" r="1.3"/><circle cx="9.8" cy="8.8" r="1.5"/><circle cx="9.8" cy="16" r="1.3"/><circle cx="17" cy="16" r="1.7"/></g></svg>
<div class="t" style="left:81.4px;top:442.0px;font-size:11.6px;line-height:16px;color:#1a1a1a;font-weight:normal;">Diagnostics</div>
<svg style="left:77px;top:461px" width="18" height="18" viewBox="0 0 18 18"><g fill="none" stroke="#0c1a78" stroke-width="2.1">
    <rect x="-5.2" y="-3.2" width="10.4" height="6.4" rx="3.2" transform="translate(5.8 5.2) rotate(42)"/>
    <rect x="-5.2" y="-3.2" width="10.4" height="6.4" rx="3.2" transform="translate(12 12.2) rotate(36)"/></g></svg>
<div class="t" style="left:101.4px;top:462.0px;font-size:11.6px;line-height:16px;color:#1a1a1a;font-weight:normal;">Diagnostics</div>
<svg style="left:77px;top:481px" width="18" height="18" viewBox="0 0 18 18"><g fill="none" stroke="#0c1a78" stroke-width="2.1">
    <rect x="-5.2" y="-3.2" width="10.4" height="6.4" rx="3.2" transform="translate(5.8 5.2) rotate(42)"/>
    <rect x="-5.2" y="-3.2" width="10.4" height="6.4" rx="3.2" transform="translate(12 12.2) rotate(36)"/></g></svg>
<div class="t" style="left:101.4px;top:482.0px;font-size:11.6px;line-height:16px;color:#1a1a1a;font-weight:normal;">Repair Review</div>
<svg style="left:77px;top:501px" width="18" height="18" viewBox="0 0 18 18"><g fill="none" stroke="#0c1a78" stroke-width="2.1">
    <rect x="-5.2" y="-3.2" width="10.4" height="6.4" rx="3.2" transform="translate(5.8 5.2) rotate(42)"/>
    <rect x="-5.2" y="-3.2" width="10.4" height="6.4" rx="3.2" transform="translate(12 12.2) rotate(36)"/></g></svg>
<div class="t" style="left:101.4px;top:502.0px;font-size:11.6px;line-height:16px;color:#1a1a1a;font-weight:normal;">Repair</div>
<svg style="left:37px;top:531px" width="18" height="18" viewBox="0 0 18 18"><rect x="0" y="0" width="6" height="6" fill="#111"/>
    <rect x="4" y="4" width="14" height="14" fill="#111"/>
    <path d="M7 7 L14 14 M14 9 L14 14 L9 14" stroke="#fff" stroke-width="1.8" fill="none"/></svg>
<div class="t" style="left:60.3px;top:532.5px;font-size:11.7px;line-height:16px;color:#111;font-weight:bold;">Out-Of-Route Operations</div>
<svg style="left:280px;top:530px" width="20" height="20" viewBox="0 0 20 20"><circle cx="10" cy="10" r="9" fill="none" stroke="#b8b8b8" stroke-width="1.6"/>
    <path d="M10 16 L10 4 M5 9 L10 4 L15 9" stroke="#b8b8b8" stroke-width="1.6" fill="none"/></svg>
<div class="a" style="left:36px;top:556px;width:267px;height:1px;background:#b4b4b4"></div>
<svg style="left:57px;top:562.3px" width="18" height="18" viewBox="0 0 18 18"><rect x="0" y="0" width="6" height="6" fill="#5a0f0f"/>
    <rect x="4" y="4" width="14" height="14" fill="#5a0f0f"/>
    <path d="M7 7 L14 14 M14 9 L14 14 L9 14" stroke="#fff" stroke-width="1.8" fill="none"/></svg>
<div class="t" style="left:81.4px;top:563.3px;font-size:11.6px;line-height:16px;color:#1a1a1a;font-weight:normal;">Repair</div>
<svg style="left:57px;top:582.3px" width="18" height="18" viewBox="0 0 18 18"><rect x="0" y="0" width="6" height="6" fill="#5a0f0f"/>
    <rect x="4" y="4" width="14" height="14" fill="#5a0f0f"/>
    <path d="M7 7 L14 14 M14 9 L14 14 L9 14" stroke="#fff" stroke-width="1.8" fill="none"/></svg>
<div class="t" style="left:81.4px;top:583.3px;font-size:11.6px;line-height:16px;color:#1a1a1a;font-weight:normal;">Diagnostics</div>
<svg style="left:57px;top:602.3px" width="18" height="18" viewBox="0 0 18 18"><rect x="0" y="0" width="6" height="6" fill="#5a0f0f"/>
    <rect x="4" y="4" width="14" height="14" fill="#5a0f0f"/>
    <path d="M7 7 L14 14 M14 9 L14 14 L9 14" stroke="#fff" stroke-width="1.8" fill="none"/></svg>
<div class="t" style="left:81.4px;top:603.3px;font-size:11.6px;line-height:16px;color:#1a1a1a;font-weight:normal;">Repair Review</div>
<svg style="left:22px;top:638.6px" width="29.12" height="14.6432" viewBox="0 0 28 16" preserveAspectRatio="none"><path d="M0 8 L8 1 L8 5 L14 5 L14 11 L8 11 L8 15 Z" fill="#000"/>
    <path d="M27 8 L19 1 L19 5 L13 5 L13 11 L19 11 L19 15 Z" fill="#fff" stroke="#000" stroke-width="1.2"/></svg>
<div class="t" style="left:57.6px;top:637.6px;font-size:13.2px;line-height:18px;color:#111;font-weight:bold;">Line Programming</div>
<svg style="left:296px;top:636px" width="20" height="20" viewBox="0 0 20 20"><circle cx="10" cy="10" r="9" fill="none" stroke="#b8b8b8" stroke-width="1.6"/>
    <path d="M10 16 L10 4 M5 9 L10 4 L15 9" stroke="#b8b8b8" stroke-width="1.6" fill="none"/></svg>
<div class="a" style="left:21px;top:666px;width:297px;height:1px;background:#b4b4b4"></div>
<div class="a" style="left:101px;top:711px;width:217px;height:20px;background:#b3d6f0"></div>
<svg style="left:25px;top:678px" width="6" height="6" viewBox="0 0 6 6"><path d="M6 0 L6 6 L0 6Z" fill="#6b6b6b"/></svg>
<svg style="left:42px;top:676.5px" width="18.48" height="9.2928" viewBox="0 0 28 16" preserveAspectRatio="none"><path d="M0 8 L8 1 L8 5 L14 5 L14 11 L8 11 L8 15 Z" fill="#000"/>
    <path d="M27 8 L19 1 L19 5 L13 5 L13 11 L19 11 L19 15 Z" fill="#fff" stroke="#000" stroke-width="1.2"/></svg>
<div class="t" style="left:66.3px;top:674.0px;font-size:11.6px;line-height:16px;color:#1a1a1a;font-weight:normal;">Line Programming</div>
<svg style="left:25px;top:698px" width="6" height="6" viewBox="0 0 6 6"><path d="M6 0 L6 6 L0 6Z" fill="#6b6b6b"/></svg>
<svg style="left:63px;top:692px" width="17" height="19" viewBox="0 0 17 19"><rect x="0.5" y="1.5" width="13" height="15" fill="#fff" stroke="#3f7a3f" stroke-width="1.2"/>
    <g stroke="#3f6f3f" stroke-width="1.1"><line x1="2.5" y1="5" x2="7" y2="5"/><line x1="2.5" y1="8.5" x2="7" y2="8.5"/><line x1="2.5" y1="12" x2="7" y2="12"/></g>
    <path d="M9 4 L10.5 5.5 L13.5 1.5 M9 7.5 L10.5 9 L13.5 5 M9 11 L10.5 12.5 L13.5 8.5" stroke="#2d8a2d" stroke-width="1.3" fill="none"/></svg>
<div class="t" style="left:85.8px;top:694.0px;font-size:11.6px;line-height:16px;color:#1a1a1a;font-weight:normal;">Auto Placement</div>
<svg style="left:85px;top:714px" width="14" height="16" viewBox="0 0 14 16"><rect x="0.5" y="0.5" width="13" height="10" rx="1" fill="#3b4a58"/>
    <rect x="2" y="2" width="10" height="7" fill="#3f9ad8"/>
    <rect x="2" y="2" width="10" height="3" fill="#7cc2f0"/>
    <rect x="4.5" y="10.5" width="5" height="2" fill="#555"/>
    <rect x="1" y="12.5" width="12" height="3" fill="#444"/></svg>
<div class="t" style="left:106.3px;top:714.0px;font-size:11.6px;line-height:16px;color:#1a1a1a;font-weight:normal;">Mycronic TPSys</div>
<svg style="left:85px;top:734px" width="14" height="16" viewBox="0 0 14 16"><rect x="0.5" y="0.5" width="13" height="10" rx="1" fill="#3b4a58"/>
    <rect x="2" y="2" width="10" height="7" fill="#3f9ad8"/>
    <rect x="2" y="2" width="10" height="3" fill="#7cc2f0"/>
    <rect x="4.5" y="10.5" width="5" height="2" fill="#555"/>
    <rect x="1" y="12.5" width="12" height="3" fill="#444"/></svg>
<div class="t" style="left:106.3px;top:734.0px;font-size:11.6px;line-height:16px;color:#1a1a1a;font-weight:normal;">ASM Siplace Pro OIB</div>
<svg style="left:25px;top:758px" width="6" height="6" viewBox="0 0 6 6"><path d="M6 0 L6 6 L0 6Z" fill="#6b6b6b"/></svg>
<svg style="left:63px;top:752px" width="17" height="19" viewBox="0 0 17 19"><rect x="0.5" y="1.5" width="13" height="15" fill="#fff" stroke="#3f7a3f" stroke-width="1.2"/>
    <g stroke="#3f6f3f" stroke-width="1.1"><line x1="2.5" y1="5" x2="7" y2="5"/><line x1="2.5" y1="8.5" x2="7" y2="8.5"/><line x1="2.5" y1="12" x2="7" y2="12"/></g>
    <path d="M9 4 L10.5 5.5 L13.5 1.5 M9 7.5 L10.5 9 L13.5 5 M9 11 L10.5 12.5 L13.5 8.5" stroke="#2d8a2d" stroke-width="1.3" fill="none"/></svg>
<div class="t" style="left:85.8px;top:754.0px;font-size:11.6px;line-height:16px;color:#1a1a1a;font-weight:normal;">Reflow</div>
<svg style="left:85px;top:774px" width="14" height="16" viewBox="0 0 14 16"><rect x="0.5" y="0.5" width="13" height="10" rx="1" fill="#3b4a58"/>
    <rect x="2" y="2" width="10" height="7" fill="#3f9ad8"/>
    <rect x="2" y="2" width="10" height="3" fill="#7cc2f0"/>
    <rect x="4.5" y="10.5" width="5" height="2" fill="#555"/>
    <rect x="1" y="12.5" width="12" height="3" fill="#444"/></svg>
<div class="t" style="left:106.3px;top:774.0px;font-size:11.6px;line-height:16px;color:#1a1a1a;font-weight:normal;">Heller Reflow</div>
<svg style="left:25px;top:798px" width="6" height="6" viewBox="0 0 6 6"><path d="M6 0 L6 6 L0 6Z" fill="#6b6b6b"/></svg>
<svg style="left:63px;top:792px" width="17" height="19" viewBox="0 0 17 19"><rect x="0.5" y="1.5" width="13" height="15" fill="#fff" stroke="#3f7a3f" stroke-width="1.2"/>
    <g stroke="#3f6f3f" stroke-width="1.1"><line x1="2.5" y1="5" x2="7" y2="5"/><line x1="2.5" y1="8.5" x2="7" y2="8.5"/><line x1="2.5" y1="12" x2="7" y2="12"/></g>
    <path d="M9 4 L10.5 5.5 L13.5 1.5 M9 7.5 L10.5 9 L13.5 5 M9 11 L10.5 12.5 L13.5 8.5" stroke="#2d8a2d" stroke-width="1.3" fill="none"/></svg>
<div class="t" style="left:85.8px;top:794.0px;font-size:11.6px;line-height:16px;color:#1a1a1a;font-weight:normal;">Stencil Printing</div>
<svg style="left:85px;top:814px" width="14" height="16" viewBox="0 0 14 16"><rect x="0.5" y="0.5" width="13" height="10" rx="1" fill="#3b4a58"/>
    <rect x="2" y="2" width="10" height="7" fill="#3f9ad8"/>
    <rect x="2" y="2" width="10" height="3" fill="#7cc2f0"/>
    <rect x="4.5" y="10.5" width="5" height="2" fill="#555"/>
    <rect x="1" y="12.5" width="12" height="3" fill="#444"/></svg>
<div class="t" style="left:106.3px;top:814.0px;font-size:11.6px;line-height:16px;color:#1a1a1a;font-weight:normal;">Yamaha - YS24</div>
<div class="a" style="left:344px;top:61px;width:1px;height:835px;background:#a3a3a3"></div>
<div class="a" style="left:344px;top:61px;width:293px;height:1px;background:#b0b0b0"></div>
<div class="a" style="left:636px;top:61px;width:1px;height:252px;background:#a8a8a8"></div>
<div class="a" style="left:636px;top:512px;width:1px;height:383px;background:#a8a8a8"></div>
<div class="a" style="left:344px;top:312px;width:293px;height:1px;background:#a8a8a8"></div>
<div class="a" style="left:346px;top:63px;width:278px;height:248px;border:1px solid #d2d2d2"></div>
<div class="t" style="left:355.6px;top:70.5px;font-size:16.4px;line-height:20px;color:#a3a3a3;font-weight:normal;">Machine List</div>
<svg style="left:603px;top:76px" width="8" height="10" viewBox="0 0 8 10"><rect x="1.5" y="0" width="5" height="5.5" fill="#555"/><rect x="0" y="5" width="8" height="1.4" fill="#444"/><rect x="3.4" y="6" width="1.2" height="4" fill="#444"/></svg>
<svg style="left:352px;top:101px" width="15" height="15" viewBox="0 0 15 15"><circle cx="7.5" cy="7.5" r="7" fill="#ddd" stroke="#8a8a8a" stroke-width="1"/>
    <circle cx="7.5" cy="7.5" r="5.3" fill="#2ea043"/>
    <path d="M7.5 3.8 L7.5 11.2 M3.8 7.5 L11.2 7.5" stroke="#fff" stroke-width="2.2"/></svg>
<svg style="left:373px;top:100px" width="17" height="17" viewBox="0 0 17 17"><rect x="6.4" y="0.3" width="3.4" height="16" fill="#f0c040" transform="rotate(0 8.1 8.3)"/><rect x="6.4" y="0.3" width="3.4" height="16" fill="#f0c040" transform="rotate(45 8.1 8.3)"/><rect x="6.4" y="0.3" width="3.4" height="16" fill="#f0c040" transform="rotate(90 8.1 8.3)"/><rect x="6.4" y="0.3" width="3.4" height="16" fill="#f0c040" transform="rotate(135 8.1 8.3)"/><circle cx="8.1" cy="8.3" r="6" fill="#f0c040"/><circle cx="8.1" cy="8.3" r="2.4" fill="#7a5a10"/></svg>
<div class="a" style="left:362px;top:135px;width:246px;height:160px;border:1px solid #cdcdcd;background:#fff"></div>
<div class="a" style="left:363px;top:158px;width:121px;height:21px;background:#dadada"></div>
<div class="a" style="left:485px;top:158px;width:122px;height:21px;background:#f0f0f0"></div>
<div class="a" style="left:363px;top:157px;width:244px;height:1px;background:#dcdcdc"></div>
<div class="a" style="left:363px;top:179px;width:244px;height:1px;background:#e0e0e0"></div>
<div class="a" style="left:484px;top:136px;width:1px;height:43px;background:#dcdcdc"></div>
<div class="t" style="left:367.2px;top:140.0px;font-size:11.6px;line-height:16px;color:#222;font-weight:normal;">Operation</div>
<div class="t" style="left:489.3px;top:140.0px;font-size:11.6px;line-height:16px;color:#222;font-weight:normal;">Machine</div>
<div class="t" style="left:367.2px;top:161.8px;font-size:11.6px;line-height:16px;color:#222;font-weight:normal;">Auto Placement</div>
<div class="t" style="left:489.3px;top:161.8px;font-size:11.6px;line-height:16px;color:#222;font-weight:normal;">Mycronic TPSys</div>
<div class="a" style="left:355px;top:312px;width:282px;height:41px;background:#fff;border-top:1px solid #8f8f8f;border-left:1px solid #8f8f8f"></div>
<div class="a" style="left:357px;top:352px;width:280px;height:40px;background:linear-gradient(90deg,#e6f1fc,#dcebfa);border-left:1px solid #8cc0ee;border-right:1px solid #9a9a9a"></div>
<div class="a" style="left:357px;top:392px;width:280px;height:40px;background:linear-gradient(90deg,#ececec,#e2e2e2);border-left:1px solid #9a9a9a;border-right:1px solid #9a9a9a"></div>
<div class="a" style="left:357px;top:432px;width:280px;height:40px;background:linear-gradient(90deg,#ececec,#e2e2e2);border-left:1px solid #9a9a9a;border-right:1px solid #9a9a9a"></div>
<div class="a" style="left:357px;top:472px;width:280px;height:40px;background:linear-gradient(90deg,#ececec,#e2e2e2);border-left:1px solid #9a9a9a;border-right:1px solid #9a9a9a"></div>
<div class="a" style="left:356px;top:352px;width:281px;height:1px;background:#9a9a9a"></div>
<div class="a" style="left:357px;top:392px;width:280px;height:1px;background:#9a9a9a"></div>
<div class="a" style="left:357px;top:432px;width:280px;height:1px;background:#9a9a9a"></div>
<div class="a" style="left:357px;top:472px;width:280px;height:1px;background:#9a9a9a"></div>
<div class="a" style="left:357px;top:512px;width:280px;height:1px;background:#9a9a9a"></div>
<svg style="left:366px;top:326px" width="14" height="14" viewBox="0 0 14 14"><rect x="0.5" y="0.5" width="13" height="13" fill="#fff" stroke="#5a5a5a" stroke-width="1"/><path d="M2.8 7.2 L5.6 10.2 L11.3 3.8" stroke="#222" stroke-width="1.7" fill="none"/></svg>
<div class="t" style="left:416.4px;top:325.0px;font-size:11.8px;line-height:16px;color:#2e2e2e;font-weight:bold;">Board Geometry</div>
<svg style="left:366px;top:366px" width="14" height="14" viewBox="0 0 14 14"><rect x="0.5" y="0.5" width="13" height="13" fill="#fff" stroke="#5a5a5a" stroke-width="1"/><path d="M2.8 7.2 L5.6 10.2 L11.3 3.8" stroke="#222" stroke-width="1.7" fill="none"/></svg>
<div class="t" style="left:416.4px;top:365.0px;font-size:11.8px;line-height:16px;color:#2e2e2e;font-weight:bold;">Part Management &amp; Troubleshooting</div>
<svg style="left:366px;top:406px" width="14" height="14" viewBox="0 0 14 14"><rect x="0.5" y="0.5" width="13" height="13" fill="#fff" stroke="#5a5a5a" stroke-width="1"/><path d="M2.8 7.2 L5.6 10.2 L11.3 3.8" stroke="#222" stroke-width="1.7" fill="none"/></svg>
<div class="t" style="left:416.4px;top:405.0px;font-size:11.8px;line-height:16px;color:#2e2e2e;font-weight:bold;">Angle Resolution</div>
<svg style="left:366px;top:446px" width="14" height="14" viewBox="0 0 14 14"><rect x="0.5" y="0.5" width="13" height="13" fill="#fff" stroke="#5a5a5a" stroke-width="1"/><path d="M2.8 7.2 L5.6 10.2 L11.3 3.8" stroke="#222" stroke-width="1.7" fill="none"/></svg>
<div class="t" style="left:416.4px;top:445.0px;font-size:11.8px;line-height:16px;color:#2e2e2e;font-weight:bold;">Program Transfer</div>
<div class="t" style="left:416.4px;top:485.0px;font-size:11.8px;line-height:16px;color:#2e2e2e;font-weight:bold;">Material Setup</div>
<div class="a" style="left:355px;top:854px;width:110px;height:38px;background:#efefef;border:1px solid #cacaca"></div>
<svg style="left:372px;top:860px" width="26" height="26" viewBox="0 0 26 26"><rect x="0" y="0" width="26" height="26" rx="3" fill="#808080"/><rect x="6" y="5" width="2.4" height="16" fill="#fff"/><path d="M19.5 5 L19.5 21 L10 13Z" fill="#fff"/></svg>
<div class="t" style="left:403.5px;top:866.0px;font-size:12px;line-height:16px;color:#9b9b9b;font-weight:bold;">Previous</div>
<div class="a" style="left:470px;top:854px;width:90px;height:38px;background:#e3e3e3;border:1px solid #aeaeae"></div>
<svg style="left:488px;top:860px" width="25" height="26" viewBox="0 0 25 26"><rect x="0" y="0" width="25" height="26" rx="3" fill="#000"/><path d="M6 5 L6 21 L15.5 13Z" fill="#fff"/><rect x="17" y="5" width="2.4" height="16" fill="#fff"/></svg>
<div class="t" style="left:518.6px;top:866.0px;font-size:12px;line-height:16px;color:#2a2a2a;font-weight:bold;">Next</div>
<div class="a" style="left:637px;top:61px;width:707px;height:2px;background:linear-gradient(180deg,#a0a0a0,#e0e0e0)"></div>
<div class="a" style="left:1343px;top:61px;width:1px;height:835px;background:#b4b4b4"></div>
<div class="a" style="left:642px;top:154px;width:702px;height:1px;background:#d6d6d6"></div>
<div class="a" style="left:799px;top:68px;width:1px;height:82px;background:#d6d6d6"></div>
<div class="a" style="left:1051px;top:68px;width:1px;height:82px;background:#d6d6d6"></div>
<div class="a" style="left:1284px;top:68px;width:1px;height:82px;background:#d6d6d6"></div>
<svg style="left:650px;top:69px" width="31" height="31" viewBox="0 0 31 31"><rect x="1" y="9" width="10.5" height="10.5" fill="#000"/><rect x="11.5" y="19.5" width="10.5" height="10.5" fill="#000"/><path d="M18 1.5 L28 11.5 M28 1.5 L18 11.5" stroke="#000" stroke-width="3"/></svg>
<div class="t" style="left:664px;top:105.0px;font-size:11.8px;line-height:14px;color:#333;font-weight:normal;transform:translateX(-50%)">Assign</div>
<div class="t" style="left:664px;top:119.0px;font-size:11.8px;line-height:14px;color:#333;font-weight:normal;transform:translateX(-50%)">Origin</div>
<svg style="left:691px;top:69px" width="13" height="14" viewBox="0 0 13 14"><path d="M0 1 L10 0 L13 11 L2 13Z" fill="#333"/><path d="M1.5 2 L9.5 1.2 L11.5 10 L3 11.5Z" fill="#555"/><circle cx="6.5" cy="6.5" r="2.6" fill="#e81010"/></svg>
<div class="t" style="left:707.5px;top:71.0px;font-size:11.8px;line-height:14px;color:#333;font-weight:normal;">Snap To Feature</div>
<div class="t" style="left:720px;top:138.0px;font-size:11.8px;line-height:14px;color:#333;font-weight:normal;transform:translateX(-50%)">CAD Controls</div>
<div class="a" style="left:802px;top:66px;width:46px;height:68px;background:#91bee4"></div>
<svg style="left:811px;top:71px" width="27.0" height="27.0" viewBox="0 0 27.0 27.0"><circle cx="13.5" cy="13.5" r="12.9" fill="#fff" stroke="#8a8a8a" stroke-width="1.2"/>
        <circle cx="13.5" cy="13.5" r="11.069999999999999" fill="#2aa82a"/>
        <path d="M13.5 2.4299999999999997 A11.069999999999999 11.069999999999999 0 0 0 2.4299999999999997 13.5 L13.5 13.5Z" fill="#8fd88f"/>
        <g stroke="#156015" stroke-width="0.9450000000000001"><line x1="13.5" y1="2.4299999999999997" x2="13.5" y2="24.57"/><line x1="2.4299999999999997" y1="13.5" x2="24.57" y2="13.5"/>
        <line x1="5.67" y1="5.67" x2="21.330000000000002" y2="21.330000000000002"/><line x1="21.330000000000002" y1="5.67" x2="5.67" y2="21.330000000000002"/></g>
        <circle cx="13.5" cy="13.5" r="4.32" fill="#9ad89a" stroke="#156015" stroke-width="0.8099999999999999"/></svg>
<div class="t" style="left:825px;top:105.0px;font-size:11.8px;line-height:14px;color:#333;font-weight:normal;transform:translateX(-50%)">Create</div>
<div class="t" style="left:825px;top:119.0px;font-size:11.8px;line-height:14px;color:#333;font-weight:normal;transform:translateX(-50%)">Fiducial</div>
<svg style="left:853px;top:70.5px" width="14" height="14" viewBox="0 0 14 14"><circle cx="7" cy="7" r="6.4" fill="#fff" stroke="#d0d0d0" stroke-width="1.2"/><circle cx="7" cy="7" r="5.04" fill="#b6eab6"/><circle cx="7" cy="7" r="2.1" fill="#fff"/></svg>
<div class="t" style="left:871px;top:70.5px;font-size:11.8px;line-height:14px;color:#b4b4b4;font-weight:normal;">Edit Fiducial</div>
<svg style="left:853px;top:93.5px" width="14" height="14" viewBox="0 0 14 14"><circle cx="7" cy="7" r="6.4" fill="#fff" stroke="#d0d0d0" stroke-width="1.2"/><circle cx="7" cy="7" r="4.8" fill="#f4a8b4"/><rect x="3.6" y="6" width="6.8" height="2" fill="#fff"/></svg>
<div class="t" style="left:871px;top:93.5px;font-size:11.8px;line-height:14px;color:#b4b4b4;font-weight:normal;">Convert to Component</div>
<svg style="left:852px;top:116px" width="13.0" height="13.0" viewBox="0 0 13.0 13.0"><circle cx="6.5" cy="6.5" r="5.9" fill="#fff" stroke="#8a8a8a" stroke-width="1.2"/>
        <circle cx="6.5" cy="6.5" r="5.33" fill="#2aa82a"/>
        <path d="M6.5 1.17 A5.33 5.33 0 0 0 1.17 6.5 L6.5 6.5Z" fill="#8fd88f"/>
        <g stroke="#156015" stroke-width="0.45500000000000007"><line x1="6.5" y1="1.17" x2="6.5" y2="11.83"/><line x1="1.17" y1="6.5" x2="11.83" y2="6.5"/>
        <line x1="2.73" y1="2.73" x2="10.27" y2="10.27"/><line x1="10.27" y1="2.73" x2="2.73" y2="10.27"/></g>
        <circle cx="6.5" cy="6.5" r="2.08" fill="#9ad89a" stroke="#156015" stroke-width="0.39"/></svg>
<svg style="left:858px;top:124px" width="10" height="9" viewBox="0 0 10 9"><rect x="0" y="1.5" width="10" height="7.5" fill="#2d3a50"/><rect x="2" y="3.5" width="6" height="3.5" fill="#e0b040"/></svg>
<div class="t" style="left:871px;top:117.0px;font-size:11.8px;line-height:14px;color:#333;font-weight:normal;">From Lead</div>
<div class="t" style="left:925.5px;top:138.0px;font-size:11.8px;line-height:14px;color:#333;font-weight:normal;transform:translateX(-50%)">Fiducials</div>
<svg style="left:1008px;top:71px" width="21.0" height="21.0" viewBox="0 0 21.0 21.0"><circle cx="10.5" cy="10.5" r="9.9" fill="#fff" stroke="#8a8a8a" stroke-width="1.2"/>
        <circle cx="10.5" cy="10.5" r="8.61" fill="#2aa82a"/>
        <path d="M10.5 1.89 A8.61 8.61 0 0 0 1.89 10.5 L10.5 10.5Z" fill="#8fd88f"/>
        <g stroke="#156015" stroke-width="0.7350000000000001"><line x1="10.5" y1="1.89" x2="10.5" y2="19.11"/><line x1="1.89" y1="10.5" x2="19.11" y2="10.5"/>
        <line x1="4.41" y1="4.41" x2="16.59" y2="16.59"/><line x1="16.59" y1="4.41" x2="4.41" y2="16.59"/></g>
        <circle cx="10.5" cy="10.5" r="3.36" fill="#9ad89a" stroke="#156015" stroke-width="0.63"/></svg>
<svg style="left:1022px;top:82px" width="15" height="17" viewBox="0 0 15 17"><rect x="0.5" y="2" width="14" height="14.5" rx="1" fill="#e0a040" stroke="#a06a20"/><rect x="2.5" y="4" width="10" height="10.5" fill="#f4f4f4"/><rect x="4" y="0" width="7" height="4" rx="1" fill="#666"/><text x="7.5" y="11.5" font-size="5" text-anchor="middle" fill="#333" font-family="Liberation Sans" font-weight="bold">OK</text></svg>
<div class="t" style="left:1022.7px;top:105.0px;font-size:11.8px;line-height:14px;color:#333;font-weight:normal;transform:translateX(-50%)">Show All</div>
<div class="t" style="left:1022.7px;top:119.0px;font-size:11.8px;line-height:14px;color:#333;font-weight:normal;transform:translateX(-50%)">Fiducials</div>
<svg style="left:1070px;top:71px" width="30" height="30" viewBox="0 0 30 30"><path d="M10 3 A12 12 0 1 0 8 26" stroke="#2aa02a" stroke-width="3.5" fill="none"/><path d="M3 22 L10 30 L12 21Z" fill="#2aa02a"/><path d="M10 3 Q16 1 22 3" stroke="#2aa02a" stroke-width="3" fill="none"/><text x="17" y="20" font-size="13" font-weight="bold" text-anchor="middle" fill="#2a902a" font-family="Liberation Sans">90</text></svg>
<div class="t" style="left:1087.5px;top:105.0px;font-size:11.8px;line-height:14px;color:#333;font-weight:normal;transform:translateX(-50%)">Board</div>
<div class="t" style="left:1087.5px;top:119.0px;font-size:11.8px;line-height:14px;color:#333;font-weight:normal;transform:translateX(-50%)">Orientation</div>
<div class="a" style="left:1122px;top:66px;width:38px;height:68px;background:#91bee4"></div>
<svg style="left:1129px;top:73.5px" width="24" height="23" viewBox="0 0 24 23"><rect x="0" y="0" width="24" height="3" fill="#6ac040"/><circle cx="1.5" cy="6.0" r="0.9" fill="#4a7ae0"/><circle cx="5.7" cy="6.0" r="0.9" fill="#4a7ae0"/><circle cx="9.9" cy="6.0" r="0.9" fill="#4a7ae0"/><circle cx="14.100000000000001" cy="6.0" r="0.9" fill="#4a7ae0"/><circle cx="18.3" cy="6.0" r="0.9" fill="#4a7ae0"/><circle cx="22.5" cy="6.0" r="0.9" fill="#4a7ae0"/><circle cx="1.5" cy="10.3" r="0.9" fill="#4a7ae0"/><circle cx="5.7" cy="10.3" r="0.9" fill="#4a7ae0"/><circle cx="9.9" cy="10.3" r="0.9" fill="#4a7ae0"/><circle cx="14.100000000000001" cy="10.3" r="0.9" fill="#4a7ae0"/><circle cx="18.3" cy="10.3" r="0.9" fill="#4a7ae0"/><circle cx="22.5" cy="10.3" r="0.9" fill="#4a7ae0"/><circle cx="1.5" cy="14.6" r="0.9" fill="#4a7ae0"/><circle cx="5.7" cy="14.6" r="0.9" fill="#4a7ae0"/><circle cx="9.9" cy="14.6" r="0.9" fill="#4a7ae0"/><circle cx="14.100000000000001" cy="14.6" r="0.9" fill="#4a7ae0"/><circle cx="18.3" cy="14.6" r="0.9" fill="#4a7ae0"/><circle cx="22.5" cy="14.6" r="0.9" fill="#4a7ae0"/><circle cx="1.5" cy="18.9" r="0.9" fill="#4a7ae0"/><circle cx="5.7" cy="18.9" r="0.9" fill="#4a7ae0"/><circle cx="9.9" cy="18.9" r="0.9" fill="#4a7ae0"/><circle cx="14.100000000000001" cy="18.9" r="0.9" fill="#4a7ae0"/><circle cx="18.3" cy="18.9" r="0.9" fill="#4a7ae0"/><circle cx="22.5" cy="18.9" r="0.9" fill="#4a7ae0"/><circle cx="1.5" cy="23.2" r="0.9" fill="#4a7ae0"/><circle cx="5.7" cy="23.2" r="0.9" fill="#4a7ae0"/><circle cx="9.9" cy="23.2" r="0.9" fill="#4a7ae0"/><circle cx="14.100000000000001" cy="23.2" r="0.9" fill="#4a7ae0"/><circle cx="18.3" cy="23.2" r="0.9" fill="#4a7ae0"/><circle cx="22.5" cy="23.2" r="0.9" fill="#4a7ae0"/></svg>
<svg style="left:1172px;top:73.5px" width="24" height="23" viewBox="0 0 24 23"><rect x="0" y="20" width="24" height="3" fill="#6ac040"/><circle cx="1.5" cy="1.0" r="0.9" fill="#4a7ae0"/><circle cx="5.7" cy="1.0" r="0.9" fill="#4a7ae0"/><circle cx="9.9" cy="1.0" r="0.9" fill="#4a7ae0"/><circle cx="14.100000000000001" cy="1.0" r="0.9" fill="#4a7ae0"/><circle cx="18.3" cy="1.0" r="0.9" fill="#4a7ae0"/><circle cx="22.5" cy="1.0" r="0.9" fill="#4a7ae0"/><circle cx="1.5" cy="5.3" r="0.9" fill="#4a7ae0"/><circle cx="5.7" cy="5.3" r="0.9" fill="#4a7ae0"/><circle cx="9.9" cy="5.3" r="0.9" fill="#4a7ae0"/><circle cx="14.100000000000001" cy="5.3" r="0.9" fill="#4a7ae0"/><circle cx="18.3" cy="5.3" r="0.9" fill="#4a7ae0"/><circle cx="22.5" cy="5.3" r="0.9" fill="#4a7ae0"/><circle cx="1.5" cy="9.6" r="0.9" fill="#4a7ae0"/><circle cx="5.7" cy="9.6" r="0.9" fill="#4a7ae0"/><circle cx="9.9" cy="9.6" r="0.9" fill="#4a7ae0"/><circle cx="14.100000000000001" cy="9.6" r="0.9" fill="#4a7ae0"/><circle cx="18.3" cy="9.6" r="0.9" fill="#4a7ae0"/><circle cx="22.5" cy="9.6" r="0.9" fill="#4a7ae0"/><circle cx="1.5" cy="13.899999999999999" r="0.9" fill="#4a7ae0"/><circle cx="5.7" cy="13.899999999999999" r="0.9" fill="#4a7ae0"/><circle cx="9.9" cy="13.899999999999999" r="0.9" fill="#4a7ae0"/><circle cx="14.100000000000001" cy="13.899999999999999" r="0.9" fill="#4a7ae0"/><circle cx="18.3" cy="13.899999999999999" r="0.9" fill="#4a7ae0"/><circle cx="22.5" cy="13.899999999999999" r="0.9" fill="#4a7ae0"/><circle cx="1.5" cy="18.2" r="0.9" fill="#4a7ae0"/><circle cx="5.7" cy="18.2" r="0.9" fill="#4a7ae0"/><circle cx="9.9" cy="18.2" r="0.9" fill="#4a7ae0"/><circle cx="14.100000000000001" cy="18.2" r="0.9" fill="#4a7ae0"/><circle cx="18.3" cy="18.2" r="0.9" fill="#4a7ae0"/><circle cx="22.5" cy="18.2" r="0.9" fill="#4a7ae0"/></svg>
<div class="t" style="left:1141px;top:105.0px;font-size:11.8px;line-height:14px;color:#333;font-weight:normal;transform:translateX(-50%)">Top</div>
<div class="t" style="left:1141px;top:119.0px;font-size:11.8px;line-height:14px;color:#333;font-weight:normal;transform:translateX(-50%)">Side</div>
<div class="t" style="left:1183.3px;top:105.0px;font-size:11.8px;line-height:14px;color:#333;font-weight:normal;transform:translateX(-50%)">Bottom</div>
<div class="t" style="left:1183.3px;top:119.0px;font-size:11.8px;line-height:14px;color:#333;font-weight:normal;transform:translateX(-50%)">Side</div>
<svg style="left:1228px;top:71px" width="18" height="14" viewBox="0 0 18 14"><rect x="0" y="2" width="18" height="10" fill="#2d3548"/><g fill="#c89030"><rect x="1" y="0" width="2" height="2"/><rect x="5" y="0" width="2" height="2"/><rect x="9" y="0" width="2" height="2"/><rect x="13" y="0" width="2" height="2"/><rect x="1" y="12" width="2" height="2"/><rect x="5" y="12" width="2" height="2"/><rect x="9" y="12" width="2" height="2"/><rect x="13" y="12" width="2" height="2"/></g><rect x="4" y="4.5" width="9" height="4.5" fill="#e0b040"/></svg>
<svg style="left:1243px;top:82px" width="15" height="17" viewBox="0 0 15 17"><rect x="0.5" y="2" width="14" height="14.5" rx="1" fill="#e0a040" stroke="#a06a20"/><rect x="2.5" y="4" width="10" height="10.5" fill="#f4f4f4"/><rect x="4" y="0" width="7" height="4" rx="1" fill="#666"/><text x="7.5" y="11.5" font-size="5" text-anchor="middle" fill="#333" font-family="Liberation Sans" font-weight="bold">OK</text></svg>
<div class="t" style="left:1244px;top:105.0px;font-size:11.8px;line-height:14px;color:#333;font-weight:normal;transform:translateX(-50%)">Show</div>
<div class="t" style="left:1244px;top:119.0px;font-size:11.8px;line-height:14px;color:#333;font-weight:normal;transform:translateX(-50%)">Components</div>
<div class="t" style="left:1168px;top:137.5px;font-size:11.8px;line-height:14px;color:#333;font-weight:normal;transform:translateX(-50%)">Orientation</div>
<div class="a" style="left:645px;top:312px;width:698px;height:1px;background:#d0d0d0"></div>
<div class="a" style="left:645px;top:312px;width:1px;height:557px;background:#d0d0d0"></div>
<div class="a" style="left:1326px;top:313px;width:16px;height:540px;background:#f0f0f0"></div>
<div class="a" style="left:1326px;top:351px;width:16px;height:462px;background:#c2c2c2"></div>
<svg style="left:1330px;top:319px" width="9" height="6" viewBox="0 0 9 6"><path d="M0.8 5.2 L4.5 1.2 L8.2 5.2" stroke="#606060" stroke-width="1.6" fill="none"/></svg>
<svg style="left:1330px;top:841px" width="9" height="6" viewBox="0 0 9 6"><path d="M0.8 0.8 L4.5 4.8 L8.2 0.8" stroke="#606060" stroke-width="1.6" fill="none"/></svg>
<div class="a" style="left:1306px;top:830px;width:20px;height:20px;background:#e6e6e6;border:1px solid #b4b4b4"></div>
<svg style="left:1309px;top:833px" width="14" height="14" viewBox="0 0 14 14"><circle cx="7" cy="7" r="6" fill="#e8e8e8" stroke="#999" stroke-width="1"/><circle cx="7" cy="7" r="4.3" fill="#30a030"/><circle cx="6.5" cy="6.5" r="1.6" fill="#c8f0c8"/></svg>
<div class="a" style="left:646px;top:853px;width:680px;height:16px;background:#f0f0f0"></div>
<div class="a" style="left:699px;top:853px;width:573px;height:16px;background:#c2c2c2"></div>
<svg style="left:652px;top:857px" width="6" height="9" viewBox="0 0 6 9"><path d="M5.2 0.8 L1.2 4.5 L5.2 8.2" stroke="#606060" stroke-width="1.6" fill="none"/></svg>
<svg style="left:1314px;top:857px" width="6" height="9" viewBox="0 0 6 9"><path d="M0.8 0.8 L4.8 4.5 L0.8 8.2" stroke="#606060" stroke-width="1.6" fill="none"/></svg>
<div class="a" style="left:646px;top:869px;width:696px;height:24px;background:#0071c5"></div>
<div class="a" style="left:646px;top:893px;width:697px;height:2px;background:#d8d8d8"></div>
<div class="t" style="left:650px;top:874.0px;font-size:11.5px;line-height:16px;color:#fff;font-weight:normal;">(-12.0936 , 2.5228) Inches</div>
<svg style="left:1078px;top:874px" width="15" height="15" viewBox="0 0 15 15"><path d="M8 6 L8 3.5 Q8 0.8 10.8 0.8 Q13.5 0.8 13.5 3.5 L13.5 6" stroke="#e8e8e8" stroke-width="1.6" fill="none"/><rect x="0.5" y="6" width="11" height="8.5" fill="#e0a830"/><path d="M1 13 L4 7 M4 13 L7 7 M7 13 L10 7" stroke="#333" stroke-width="1.3"/></svg>
<div class="a" style="left:1100px;top:873px;width:16px;height:16px;border:1px dashed #203040"></div>
<svg style="left:1100px;top:872px" width="18" height="18" viewBox="0 0 18 18"><path d="M6 10 L11.5 15.5" stroke="#d8b060" stroke-width="2.8" stroke-linecap="round"/>
    <circle cx="5.5" cy="9" r="4" fill="#bcdcf4" stroke="#e8e8e8" stroke-width="1.2"/></svg>
<svg style="left:1123px;top:872px" width="18" height="18" viewBox="0 0 18 18"><path d="M6 10 L11.5 15.5" stroke="#d8b060" stroke-width="2.8" stroke-linecap="round"/>
    <circle cx="5.5" cy="9" r="4" fill="#bcdcf4" stroke="#e8e8e8" stroke-width="1.2"/><text x="9" y="4.5" font-size="6.5" font-weight="bold" fill="#3a5a7a" text-anchor="middle" font-family="Liberation Sans">100</text></svg>
<svg style="left:1146px;top:872px" width="18" height="18" viewBox="0 0 18 18"><path d="M6 10 L11.5 15.5" stroke="#d8b060" stroke-width="2.8" stroke-linecap="round"/>
    <circle cx="5.5" cy="9" r="4" fill="#bcdcf4" stroke="#e8e8e8" stroke-width="1.2"/><text x="9" y="4.5" font-size="6.5" font-weight="bold" fill="#3a5a7a" text-anchor="middle" font-family="Liberation Sans">ALL</text></svg>
<svg style="left:1169px;top:872px" width="18" height="18" viewBox="0 0 18 18"><path d="M6 10 L11.5 15.5" stroke="#d8b060" stroke-width="2.8" stroke-linecap="round"/>
    <circle cx="5.5" cy="9" r="4" fill="#bcdcf4" stroke="#e8e8e8" stroke-width="1.2"/><rect x="3" y="1" width="5" height="1.8" fill="#1a2a3a"/><rect x="10" y="1" width="5" height="1.8" fill="#1a2a3a"/></svg>
<svg style="left:1192px;top:872px" width="18" height="18" viewBox="0 0 18 18"><path d="M6 10 L11.5 15.5" stroke="#d8b060" stroke-width="2.8" stroke-linecap="round"/>
    <circle cx="5.5" cy="9" r="4" fill="#bcdcf4" stroke="#e8e8e8" stroke-width="1.2"/><rect x="9" y="2" width="7" height="1.8" fill="#5a4a40"/></svg>
<div class="a" style="left:1234px;top:871px;width:57px;height:20px;background:#fff"></div>
<div class="t" style="left:1239px;top:874.0px;font-size:12.4px;line-height:16px;color:#333;font-weight:normal;">123%</div>
<div class="a" style="left:1275px;top:872px;width:15px;height:18px;background:#f0f0f0;border:1px solid #a8a8a8"></div>
<svg style="left:1278px;top:874px" width="9" height="14" viewBox="0 0 9 14"><path d="M1 5 L4.5 1.5 L8 5 M1 9 L4.5 12.5 L8 9" stroke="#555" stroke-width="1.3" fill="none"/></svg>
<svg style="left:1298px;top:872px" width="18" height="18" viewBox="0 0 18 18"><path d="M6 10 L11.5 15.5" stroke="#d8b060" stroke-width="2.8" stroke-linecap="round"/>
    <circle cx="5.5" cy="9" r="4" fill="#bcdcf4" stroke="#e8e8e8" stroke-width="1.2"/><path d="M13 1.5 L13 8.5 M9.5 5 L16.5 5" stroke="#5a4a40" stroke-width="2"/></svg>
<svg style="left:1321px;top:872px" width="18" height="18" viewBox="0 0 18 18"><path d="M6 10 L11.5 15.5" stroke="#d8b060" stroke-width="2.8" stroke-linecap="round"/>
    <circle cx="5.5" cy="9" r="4" fill="#bcdcf4" stroke="#e8e8e8" stroke-width="1.2"/><path d="M7 0.8 L7 7 M3.8 3.9 L10.2 3.9 M14 0.8 L14 7 M10.8 3.9 L17.2 3.9" stroke="#000" stroke-width="2"/></svg>
<svg style="left:646px;top:313px" width="680" height="540" viewBox="646 313 680 540" overflow="hidden"><rect x="661.50" y="347.50" width="647.50" height="469.80" fill="#fff" stroke="#777" stroke-width="1.2"/><line x1="662.20" y1="347.00" x2="662.20" y2="818.00" stroke="#111" stroke-width="2"/><line x1="661.50" y1="347.60" x2="1309.00" y2="347.60" stroke="#222" stroke-width="1.3"/><text x="686" y="405" font-size="24" text-anchor="middle" dominant-baseline="central" fill="none" stroke="#777" stroke-width="0.8" font-family="Liberation Sans" textLength="66" lengthAdjust="spacingAndGlyphs" transform="rotate(-90 686 405)">AEGIS</text><text x="710.30" y="433.00" font-size="8.6" text-anchor="middle" dominant-baseline="central" fill="#333" font-family="Liberation Sans" transform="rotate(-90 710.30 433.00)" textLength="130" lengthAdjust="spacingAndGlyphs">The Digital Mind of Manufacturing™</text><circle cx="697" cy="382" r="3.6" fill="#fff" stroke="#222" stroke-width="0.9"/><circle cx="697.00" cy="382.00" r="2.4" fill="#000"/><rect x="727.80" y="375.40" width="3.60" height="9.00" fill="#000"/><rect x="727.80" y="486.50" width="3.60" height="9.00" fill="#000"/><rect x="733.66" y="375.40" width="3.60" height="9.00" fill="#000"/><rect x="733.66" y="486.50" width="3.60" height="9.00" fill="#000"/><rect x="739.53" y="375.40" width="3.60" height="9.00" fill="#000"/><rect x="739.53" y="486.50" width="3.60" height="9.00" fill="#000"/><rect x="745.39" y="375.40" width="3.60" height="9.00" fill="#000"/><rect x="745.39" y="486.50" width="3.60" height="9.00" fill="#000"/><rect x="751.25" y="375.40" width="3.60" height="9.00" fill="#000"/><rect x="751.25" y="486.50" width="3.60" height="9.00" fill="#000"/><rect x="757.11" y="375.40" width="3.60" height="9.00" fill="#000"/><rect x="757.11" y="486.50" width="3.60" height="9.00" fill="#000"/><rect x="762.98" y="375.40" width="3.60" height="9.00" fill="#000"/><rect x="762.98" y="486.50" width="3.60" height="9.00" fill="#000"/><rect x="768.84" y="375.40" width="3.60" height="9.00" fill="#000"/><rect x="768.84" y="486.50" width="3.60" height="9.00" fill="#000"/><rect x="774.70" y="375.40" width="3.60" height="9.00" fill="#000"/><rect x="774.70" y="486.50" width="3.60" height="9.00" fill="#000"/><rect x="780.56" y="375.40" width="3.60" height="9.00" fill="#000"/><rect x="780.56" y="486.50" width="3.60" height="9.00" fill="#000"/><rect x="786.42" y="375.40" width="3.60" height="9.00" fill="#000"/><rect x="786.42" y="486.50" width="3.60" height="9.00" fill="#000"/><rect x="792.29" y="375.40" width="3.60" height="9.00" fill="#000"/><rect x="792.29" y="486.50" width="3.60" height="9.00" fill="#000"/><rect x="798.15" y="375.40" width="3.60" height="9.00" fill="#000"/><rect x="798.15" y="486.50" width="3.60" height="9.00" fill="#000"/><rect x="804.01" y="375.40" width="3.60" height="9.00" fill="#000"/><rect x="804.01" y="486.50" width="3.60" height="9.00" fill="#000"/><rect x="809.88" y="375.40" width="3.60" height="9.00" fill="#000"/><rect x="809.88" y="486.50" width="3.60" height="9.00" fill="#000"/><rect x="815.74" y="375.40" width="3.60" height="9.00" fill="#000"/><rect x="815.74" y="486.50" width="3.60" height="9.00" fill="#000"/><rect x="821.60" y="375.40" width="3.60" height="9.00" fill="#000"/><rect x="821.60" y="486.50" width="3.60" height="9.00" fill="#000"/><rect x="716.20" y="387.00" width="9.00" height="3.60" fill="#000"/><rect x="827.80" y="387.00" width="9.00" height="3.60" fill="#000"/><rect x="716.20" y="392.83" width="9.00" height="3.60" fill="#000"/><rect x="827.80" y="392.83" width="9.00" height="3.60" fill="#000"/><rect x="716.20" y="398.66" width="9.00" height="3.60" fill="#000"/><rect x="827.80" y="398.66" width="9.00" height="3.60" fill="#000"/><rect x="716.20" y="404.49" width="9.00" height="3.60" fill="#000"/><rect x="827.80" y="404.49" width="9.00" height="3.60" fill="#000"/><rect x="716.20" y="410.32" width="9.00" height="3.60" fill="#000"/><rect x="827.80" y="410.32" width="9.00" height="3.60" fill="#000"/><rect x="716.20" y="416.16" width="9.00" height="3.60" fill="#000"/><rect x="827.80" y="416.16" width="9.00" height="3.60" fill="#000"/><rect x="716.20" y="421.99" width="9.00" height="3.60" fill="#000"/><rect x="827.80" y="421.99" width="9.00" height="3.60" fill="#000"/><rect x="716.20" y="427.82" width="9.00" height="3.60" fill="#000"/><rect x="827.80" y="427.82" width="9.00" height="3.60" fill="#000"/><rect x="716.20" y="433.65" width="9.00" height="3.60" fill="#000"/><rect x="827.80" y="433.65" width="9.00" height="3.60" fill="#000"/><rect x="716.20" y="439.48" width="9.00" height="3.60" fill="#000"/><rect x="827.80" y="439.48" width="9.00" height="3.60" fill="#000"/><rect x="716.20" y="445.31" width="9.00" height="3.60" fill="#000"/><rect x="827.80" y="445.31" width="9.00" height="3.60" fill="#000"/><rect x="716.20" y="451.14" width="9.00" height="3.60" fill="#000"/><rect x="827.80" y="451.14" width="9.00" height="3.60" fill="#000"/><rect x="716.20" y="456.98" width="9.00" height="3.60" fill="#000"/><rect x="827.80" y="456.98" width="9.00" height="3.60" fill="#000"/><rect x="716.20" y="462.81" width="9.00" height="3.60" fill="#000"/><rect x="827.80" y="462.81" width="9.00" height="3.60" fill="#000"/><rect x="716.20" y="468.64" width="9.00" height="3.60" fill="#000"/><rect x="827.80" y="468.64" width="9.00" height="3.60" fill="#000"/><rect x="716.20" y="474.47" width="9.00" height="3.60" fill="#000"/><rect x="827.80" y="474.47" width="9.00" height="3.60" fill="#000"/><rect x="716.20" y="480.30" width="9.00" height="3.60" fill="#000"/><rect x="827.80" y="480.30" width="9.00" height="3.60" fill="#000"/><rect x="725.20" y="384.40" width="102.60" height="102.10" fill="#fff" stroke="#8c8c8c" stroke-width="1"/><circle cx="728.7" cy="435.6" r="2.2" fill="#fff" stroke="#000" stroke-width="1.4"/><text x="776.50" y="436.00" font-size="8" text-anchor="middle" dominant-baseline="central" fill="#8a6a3a" font-family="Liberation Sans" transform="rotate(90 776.50 436.00)">U3</text><path d="M720 380 l0 -5 l3 0" stroke="#555" stroke-width="0.7" fill="none"/><path d="M860 403.2 L863 403.2 Q863 416.2 869 421.2 Q877 418.2 881 410.2 L875 406.2 M881.3 394.7 Q885.3 386.7 892.0 386.2 Q900.3 390.2 902.5999999999999 403.2 L898.3 403.2 M881.3 394.7 L886.3 400.2 M881.0 393.2 L882.0 412.2 M860 426.1 L863 426.1 Q863 439.1 869 444.1 Q877 441.1 881 433.1 L875 429.1 M881.3 417.6 Q885.3 409.6 892.0 409.1 Q900.3 413.1 902.5999999999999 426.1 L898.3 426.1 M881.3 417.6 L886.3 423.1 M881.0 416.1 L882.0 435.1 M860 495.4 L863 495.4 Q863 508.4 869 513.4 Q877 510.4 881 502.4 L875 498.4 M881.3 486.9 Q885.3 478.9 892.0 478.4 Q900.3 482.4 902.5999999999999 495.4 L898.3 495.4 M881.3 486.9 L886.3 492.4 M881.0 485.4 L882.0 504.4 M860 518.6 L863 518.6 Q863 531.6 869 536.6 Q877 533.6 881 525.6 L875 521.6 M881.3 510.1 Q885.3 502.1 892.0 501.6 Q900.3 505.6 902.5999999999999 518.6 L898.3 518.6 M881.3 510.1 L886.3 515.6 M881.0 508.6 L882.0 527.6 M868 457 Q852 458 853 449 Q856 440 868 441 L871 440 L872 444 M862 461 L867 459 L872 462 L880 460 M876 462 Q886 463 889 471 Q887 480 872 482 " fill="none" stroke="#555" stroke-width="0.8"/><circle cx="869.00" cy="403.20" r="5.8" fill="#000"/><circle cx="892.30" cy="403.20" r="5.8" fill="#000"/><circle cx="869.00" cy="426.10" r="5.8" fill="#000"/><circle cx="892.30" cy="426.10" r="5.8" fill="#000"/><circle cx="871.60" cy="449.30" r="5.8" fill="#000"/><circle cx="871.60" cy="472.50" r="5.8" fill="#000"/><circle cx="869.00" cy="495.40" r="5.8" fill="#000"/><circle cx="892.30" cy="495.40" r="5.8" fill="#000"/><circle cx="869.00" cy="518.60" r="5.8" fill="#000"/><circle cx="892.30" cy="518.60" r="5.8" fill="#000"/><text x="849.80" y="414.60" font-size="12.6" text-anchor="middle" dominant-baseline="central" fill="#14284a" font-family="Liberation Sans" transform="rotate(90 849.80 414.60)" textLength="46.5" lengthAdjust="spacingAndGlyphs">CK1CK5</text><text x="851.30" y="461.20" font-size="7.6" text-anchor="middle" dominant-baseline="central" fill="#14284a" font-family="Liberation Sans">CK3</text><text x="849.80" y="507.60" font-size="12.6" text-anchor="middle" dominant-baseline="central" fill="#14284a" font-family="Liberation Sans" transform="rotate(90 849.80 507.60)" textLength="46.5" lengthAdjust="spacingAndGlyphs">CK2CK4</text><rect x="887.60" y="368.60" width="8.80" height="18.00" fill="#fff" stroke="#8c8c8c" stroke-width="0.9"/><rect x="889.10" y="370.60" width="5.80" height="5.40" fill="#000"/><rect x="889.10" y="379.10" width="5.80" height="5.40" fill="#000"/><text x="892.00" y="359.50" font-size="5" text-anchor="middle" dominant-baseline="central" fill="#6a6a8a" font-family="Liberation Sans" transform="rotate(90 892.00 359.50)" textLength="16" lengthAdjust="spacingAndGlyphs">SMR8</text><rect x="899.40" y="368.60" width="8.80" height="18.00" fill="#fff" stroke="#8c8c8c" stroke-width="0.9"/><rect x="900.90" y="370.60" width="5.80" height="5.40" fill="#000"/><rect x="900.90" y="379.10" width="5.80" height="5.40" fill="#000"/><text x="903.80" y="359.50" font-size="5" text-anchor="middle" dominant-baseline="central" fill="#6a6a8a" font-family="Liberation Sans" transform="rotate(90 903.80 359.50)" textLength="16" lengthAdjust="spacingAndGlyphs">SMR8</text><rect x="911.20" y="368.60" width="8.80" height="18.00" fill="#fff" stroke="#8c8c8c" stroke-width="0.9"/><rect x="912.70" y="370.60" width="5.80" height="5.40" fill="#000"/><rect x="912.70" y="379.10" width="5.80" height="5.40" fill="#000"/><text x="915.60" y="359.50" font-size="5" text-anchor="middle" dominant-baseline="central" fill="#6a6a8a" font-family="Liberation Sans" transform="rotate(90 915.60 359.50)" textLength="16" lengthAdjust="spacingAndGlyphs">SMR8</text><rect x="923.00" y="368.60" width="8.80" height="18.00" fill="#fff" stroke="#8c8c8c" stroke-width="0.9"/><rect x="924.50" y="370.60" width="5.80" height="5.40" fill="#000"/><rect x="924.50" y="379.10" width="5.80" height="5.40" fill="#000"/><text x="927.40" y="359.50" font-size="5" text-anchor="middle" dominant-baseline="central" fill="#6a6a8a" font-family="Liberation Sans" transform="rotate(90 927.40 359.50)" textLength="16" lengthAdjust="spacingAndGlyphs">SMR8</text><rect x="934.80" y="368.60" width="8.80" height="18.00" fill="#fff" stroke="#8c8c8c" stroke-width="0.9"/><rect x="936.30" y="370.60" width="5.80" height="5.40" fill="#000"/><rect x="936.30" y="379.10" width="5.80" height="5.40" fill="#000"/><text x="939.20" y="359.50" font-size="5" text-anchor="middle" dominant-baseline="central" fill="#6a6a8a" font-family="Liberation Sans" transform="rotate(90 939.20 359.50)" textLength="16" lengthAdjust="spacingAndGlyphs">SMR8</text><rect x="946.60" y="368.60" width="8.80" height="18.00" fill="#fff" stroke="#8c8c8c" stroke-width="0.9"/><rect x="948.10" y="370.60" width="5.80" height="5.40" fill="#000"/><rect x="948.10" y="379.10" width="5.80" height="5.40" fill="#000"/><text x="951.00" y="359.50" font-size="5" text-anchor="middle" dominant-baseline="central" fill="#6a6a8a" font-family="Liberation Sans" transform="rotate(90 951.00 359.50)" textLength="16" lengthAdjust="spacingAndGlyphs">SMR8</text><rect x="958.40" y="368.60" width="8.80" height="18.00" fill="#fff" stroke="#8c8c8c" stroke-width="0.9"/><rect x="959.90" y="370.60" width="5.80" height="5.40" fill="#000"/><rect x="959.90" y="379.10" width="5.80" height="5.40" fill="#000"/><text x="962.80" y="359.50" font-size="5" text-anchor="middle" dominant-baseline="central" fill="#6a6a8a" font-family="Liberation Sans" transform="rotate(90 962.80 359.50)" textLength="16" lengthAdjust="spacingAndGlyphs">SMR8</text><rect x="970.20" y="368.60" width="8.80" height="18.00" fill="#fff" stroke="#8c8c8c" stroke-width="0.9"/><rect x="971.70" y="370.60" width="5.80" height="5.40" fill="#000"/><rect x="971.70" y="379.10" width="5.80" height="5.40" fill="#000"/><text x="974.60" y="359.50" font-size="5" text-anchor="middle" dominant-baseline="central" fill="#6a6a8a" font-family="Liberation Sans" transform="rotate(90 974.60 359.50)" textLength="16" lengthAdjust="spacingAndGlyphs">SMR8</text><rect x="982.00" y="368.60" width="8.80" height="18.00" fill="#fff" stroke="#8c8c8c" stroke-width="0.9"/><rect x="983.50" y="370.60" width="5.80" height="5.40" fill="#000"/><rect x="983.50" y="379.10" width="5.80" height="5.40" fill="#000"/><text x="986.40" y="359.50" font-size="5" text-anchor="middle" dominant-baseline="central" fill="#6a6a8a" font-family="Liberation Sans" transform="rotate(90 986.40 359.50)" textLength="16" lengthAdjust="spacingAndGlyphs">SMR8</text><rect x="993.80" y="368.60" width="8.80" height="18.00" fill="#fff" stroke="#8c8c8c" stroke-width="0.9"/><rect x="995.30" y="370.60" width="5.80" height="5.40" fill="#000"/><rect x="995.30" y="379.10" width="5.80" height="5.40" fill="#000"/><text x="998.20" y="359.50" font-size="5" text-anchor="middle" dominant-baseline="central" fill="#6a6a8a" font-family="Liberation Sans" transform="rotate(90 998.20 359.50)" textLength="16" lengthAdjust="spacingAndGlyphs">SMR8</text><rect x="973.60" y="401.40" width="22.80" height="90.90" fill="#fff" stroke="#8c8c8c" stroke-width="1"/><rect x="980.50" y="482.30" width="9.00" height="9.50" fill="#fff" stroke="#8c8c8c" stroke-width="1"/><circle cx="967.00" cy="405.80" r="4" fill="#000"/><circle cx="1002.50" cy="405.80" r="4" fill="#000"/><circle cx="967.00" cy="417.57" r="4" fill="#000"/><circle cx="1002.50" cy="417.57" r="4" fill="#000"/><circle cx="967.00" cy="429.34" r="4" fill="#000"/><circle cx="1002.50" cy="429.34" r="4" fill="#000"/><circle cx="967.00" cy="441.11" r="4" fill="#000"/><circle cx="1002.50" cy="441.11" r="4" fill="#000"/><circle cx="967.00" cy="452.88" r="4" fill="#000"/><circle cx="1002.50" cy="452.88" r="4" fill="#000"/><circle cx="967.00" cy="464.65" r="4" fill="#000"/><circle cx="1002.50" cy="464.65" r="4" fill="#000"/><circle cx="967.00" cy="476.42" r="4" fill="#000"/><circle cx="1002.50" cy="476.42" r="4" fill="#000"/><circle cx="967.00" cy="488.19" r="4" fill="#000"/><rect x="998.50" y="484.19" width="8.00" height="8.00" fill="#000"/><text x="985.00" y="447.00" font-size="9" text-anchor="middle" dominant-baseline="central" fill="#2a3a6a" font-family="Liberation Sans">U9</text><rect x="915.70" y="470.70" width="31.60" height="45.60" fill="#fff" stroke="#8c8c8c" stroke-width="1"/><rect x="904.30" y="473.30" width="11.40" height="3.22" fill="#fff" stroke="#666" stroke-width="0.8"/><rect x="904.90" y="474.00" width="1.80" height="1.82" fill="#000"/><rect x="947.30" y="473.30" width="11.40" height="3.22" fill="#fff" stroke="#666" stroke-width="0.8"/><rect x="956.30" y="474.00" width="1.80" height="1.82" fill="#000"/><rect x="904.30" y="478.50" width="11.40" height="3.22" fill="#fff" stroke="#666" stroke-width="0.8"/><rect x="904.90" y="479.20" width="1.80" height="1.82" fill="#000"/><rect x="947.30" y="478.50" width="11.40" height="3.22" fill="#fff" stroke="#666" stroke-width="0.8"/><rect x="956.30" y="479.20" width="1.80" height="1.82" fill="#000"/><rect x="904.30" y="483.70" width="11.40" height="3.22" fill="#fff" stroke="#666" stroke-width="0.8"/><rect x="904.90" y="484.40" width="1.80" height="1.82" fill="#000"/><rect x="947.30" y="483.70" width="11.40" height="3.22" fill="#fff" stroke="#666" stroke-width="0.8"/><rect x="956.30" y="484.40" width="1.80" height="1.82" fill="#000"/><rect x="904.30" y="488.90" width="11.40" height="3.22" fill="#fff" stroke="#666" stroke-width="0.8"/><rect x="904.90" y="489.60" width="1.80" height="1.82" fill="#000"/><rect x="947.30" y="488.90" width="11.40" height="3.22" fill="#fff" stroke="#666" stroke-width="0.8"/><rect x="956.30" y="489.60" width="1.80" height="1.82" fill="#000"/><rect x="904.30" y="494.10" width="11.40" height="3.22" fill="#fff" stroke="#666" stroke-width="0.8"/><rect x="904.90" y="494.80" width="1.80" height="1.82" fill="#000"/><rect x="947.30" y="494.10" width="11.40" height="3.22" fill="#fff" stroke="#666" stroke-width="0.8"/><rect x="956.30" y="494.80" width="1.80" height="1.82" fill="#000"/><rect x="904.30" y="499.30" width="11.40" height="3.22" fill="#fff" stroke="#666" stroke-width="0.8"/><rect x="904.90" y="500.00" width="1.80" height="1.82" fill="#000"/><rect x="947.30" y="499.30" width="11.40" height="3.22" fill="#fff" stroke="#666" stroke-width="0.8"/><rect x="956.30" y="500.00" width="1.80" height="1.82" fill="#000"/><rect x="904.30" y="504.50" width="11.40" height="3.22" fill="#fff" stroke="#666" stroke-width="0.8"/><rect x="904.90" y="505.20" width="1.80" height="1.82" fill="#000"/><rect x="947.30" y="504.50" width="11.40" height="3.22" fill="#fff" stroke="#666" stroke-width="0.8"/><rect x="956.30" y="505.20" width="1.80" height="1.82" fill="#000"/><rect x="904.30" y="509.70" width="11.40" height="3.22" fill="#fff" stroke="#666" stroke-width="0.8"/><rect x="904.90" y="510.40" width="1.80" height="1.82" fill="#000"/><rect x="947.30" y="509.70" width="11.40" height="3.22" fill="#fff" stroke="#666" stroke-width="0.8"/><rect x="956.30" y="510.40" width="1.80" height="1.82" fill="#000"/><text x="931.50" y="493.50" font-size="13" text-anchor="middle" dominant-baseline="central" fill="#14284a" font-family="Liberation Sans" transform="rotate(90 931.50 493.50)">U10</text><rect x="1025.00" y="375.00" width="31.60" height="45.30" fill="#fff" stroke="#8c8c8c" stroke-width="1"/><rect x="1013.70" y="377.60" width="11.30" height="3.20" fill="#fff" stroke="#666" stroke-width="0.8"/><rect x="1014.30" y="378.30" width="1.80" height="1.80" fill="#000"/><rect x="1056.60" y="377.60" width="11.30" height="3.20" fill="#fff" stroke="#666" stroke-width="0.8"/><rect x="1065.50" y="378.30" width="1.80" height="1.80" fill="#000"/><rect x="1013.70" y="382.76" width="11.30" height="3.20" fill="#fff" stroke="#666" stroke-width="0.8"/><rect x="1014.30" y="383.46" width="1.80" height="1.80" fill="#000"/><rect x="1056.60" y="382.76" width="11.30" height="3.20" fill="#fff" stroke="#666" stroke-width="0.8"/><rect x="1065.50" y="383.46" width="1.80" height="1.80" fill="#000"/><rect x="1013.70" y="387.93" width="11.30" height="3.20" fill="#fff" stroke="#666" stroke-width="0.8"/><rect x="1014.30" y="388.62" width="1.80" height="1.80" fill="#000"/><rect x="1056.60" y="387.93" width="11.30" height="3.20" fill="#fff" stroke="#666" stroke-width="0.8"/><rect x="1065.50" y="388.62" width="1.80" height="1.80" fill="#000"/><rect x="1013.70" y="393.09" width="11.30" height="3.20" fill="#fff" stroke="#666" stroke-width="0.8"/><rect x="1014.30" y="393.79" width="1.80" height="1.80" fill="#000"/><rect x="1056.60" y="393.09" width="11.30" height="3.20" fill="#fff" stroke="#666" stroke-width="0.8"/><rect x="1065.50" y="393.79" width="1.80" height="1.80" fill="#000"/><rect x="1013.70" y="398.25" width="11.30" height="3.20" fill="#fff" stroke="#666" stroke-width="0.8"/><rect x="1014.30" y="398.95" width="1.80" height="1.80" fill="#000"/><rect x="1056.60" y="398.25" width="11.30" height="3.20" fill="#fff" stroke="#666" stroke-width="0.8"/><rect x="1065.50" y="398.95" width="1.80" height="1.80" fill="#000"/><rect x="1013.70" y="403.41" width="11.30" height="3.20" fill="#fff" stroke="#666" stroke-width="0.8"/><rect x="1014.30" y="404.11" width="1.80" height="1.80" fill="#000"/><rect x="1056.60" y="403.41" width="11.30" height="3.20" fill="#fff" stroke="#666" stroke-width="0.8"/><rect x="1065.50" y="404.11" width="1.80" height="1.80" fill="#000"/><rect x="1013.70" y="408.58" width="11.30" height="3.20" fill="#fff" stroke="#666" stroke-width="0.8"/><rect x="1014.30" y="409.28" width="1.80" height="1.80" fill="#000"/><rect x="1056.60" y="408.58" width="11.30" height="3.20" fill="#fff" stroke="#666" stroke-width="0.8"/><rect x="1065.50" y="409.28" width="1.80" height="1.80" fill="#000"/><rect x="1013.70" y="413.74" width="11.30" height="3.20" fill="#fff" stroke="#666" stroke-width="0.8"/><rect x="1014.30" y="414.44" width="1.80" height="1.80" fill="#000"/><rect x="1056.60" y="413.74" width="11.30" height="3.20" fill="#fff" stroke="#666" stroke-width="0.8"/><rect x="1065.50" y="414.44" width="1.80" height="1.80" fill="#000"/><text x="1040.80" y="397.60" font-size="13" text-anchor="middle" dominant-baseline="central" fill="#14284a" font-family="Liberation Sans" transform="rotate(90 1040.80 397.60)">U13</text><rect x="1025.00" y="444.90" width="31.60" height="45.00" fill="#fff" stroke="#8c8c8c" stroke-width="1"/><rect x="1013.70" y="447.50" width="11.30" height="3.18" fill="#fff" stroke="#666" stroke-width="0.8"/><rect x="1014.30" y="448.20" width="1.80" height="1.78" fill="#000"/><rect x="1056.60" y="447.50" width="11.30" height="3.18" fill="#fff" stroke="#666" stroke-width="0.8"/><rect x="1065.50" y="448.20" width="1.80" height="1.78" fill="#000"/><rect x="1013.70" y="452.62" width="11.30" height="3.18" fill="#fff" stroke="#666" stroke-width="0.8"/><rect x="1014.30" y="453.32" width="1.80" height="1.78" fill="#000"/><rect x="1056.60" y="452.62" width="11.30" height="3.18" fill="#fff" stroke="#666" stroke-width="0.8"/><rect x="1065.50" y="453.32" width="1.80" height="1.78" fill="#000"/><rect x="1013.70" y="457.75" width="11.30" height="3.18" fill="#fff" stroke="#666" stroke-width="0.8"/><rect x="1014.30" y="458.45" width="1.80" height="1.78" fill="#000"/><rect x="1056.60" y="457.75" width="11.30" height="3.18" fill="#fff" stroke="#666" stroke-width="0.8"/><rect x="1065.50" y="458.45" width="1.80" height="1.78" fill="#000"/><rect x="1013.70" y="462.88" width="11.30" height="3.18" fill="#fff" stroke="#666" stroke-width="0.8"/><rect x="1014.30" y="463.57" width="1.80" height="1.78" fill="#000"/><rect x="1056.60" y="462.88" width="11.30" height="3.18" fill="#fff" stroke="#666" stroke-width="0.8"/><rect x="1065.50" y="463.57" width="1.80" height="1.78" fill="#000"/><rect x="1013.70" y="468.00" width="11.30" height="3.18" fill="#fff" stroke="#666" stroke-width="0.8"/><rect x="1014.30" y="468.70" width="1.80" height="1.78" fill="#000"/><rect x="1056.60" y="468.00" width="11.30" height="3.18" fill="#fff" stroke="#666" stroke-width="0.8"/><rect x="1065.50" y="468.70" width="1.80" height="1.78" fill="#000"/><rect x="1013.70" y="473.12" width="11.30" height="3.18" fill="#fff" stroke="#666" stroke-width="0.8"/><rect x="1014.30" y="473.82" width="1.80" height="1.78" fill="#000"/><rect x="1056.60" y="473.12" width="11.30" height="3.18" fill="#fff" stroke="#666" stroke-width="0.8"/><rect x="1065.50" y="473.82" width="1.80" height="1.78" fill="#000"/><rect x="1013.70" y="478.25" width="11.30" height="3.18" fill="#fff" stroke="#666" stroke-width="0.8"/><rect x="1014.30" y="478.95" width="1.80" height="1.78" fill="#000"/><rect x="1056.60" y="478.25" width="11.30" height="3.18" fill="#fff" stroke="#666" stroke-width="0.8"/><rect x="1065.50" y="478.95" width="1.80" height="1.78" fill="#000"/><rect x="1013.70" y="483.38" width="11.30" height="3.18" fill="#fff" stroke="#666" stroke-width="0.8"/><rect x="1014.30" y="484.07" width="1.80" height="1.78" fill="#000"/><rect x="1056.60" y="483.38" width="11.30" height="3.18" fill="#fff" stroke="#666" stroke-width="0.8"/><rect x="1065.50" y="484.07" width="1.80" height="1.78" fill="#000"/><text x="1040.80" y="467.40" font-size="13" text-anchor="middle" dominant-baseline="central" fill="#14284a" font-family="Liberation Sans" transform="rotate(90 1040.80 467.40)">U12</text><rect x="1073.50" y="371.40" width="90.30" height="23.60" fill="#fff" stroke="#8c8c8c" stroke-width="1"/><rect x="1154.00" y="379.00" width="9.00" height="9.00" fill="#fff" stroke="#8c8c8c" stroke-width="1"/><circle cx="1077.30" cy="401.00" r="4" fill="#000"/><circle cx="1077.30" cy="365.50" r="4" fill="#000"/><circle cx="1089.01" cy="401.00" r="4" fill="#000"/><circle cx="1089.01" cy="365.50" r="4" fill="#000"/><circle cx="1100.72" cy="401.00" r="4" fill="#000"/><circle cx="1100.72" cy="365.50" r="4" fill="#000"/><circle cx="1112.43" cy="401.00" r="4" fill="#000"/><circle cx="1112.43" cy="365.50" r="4" fill="#000"/><circle cx="1124.14" cy="401.00" r="4" fill="#000"/><circle cx="1124.14" cy="365.50" r="4" fill="#000"/><circle cx="1135.85" cy="401.00" r="4" fill="#000"/><circle cx="1135.85" cy="365.50" r="4" fill="#000"/><circle cx="1147.56" cy="401.00" r="4" fill="#000"/><circle cx="1147.56" cy="365.50" r="4" fill="#000"/><circle cx="1159.27" cy="401.00" r="4" fill="#000"/><rect x="1155.27" y="361.50" width="8.00" height="8.00" fill="#000"/><text x="1118.00" y="383.00" font-size="8" text-anchor="middle" dominant-baseline="central" fill="#333" font-family="Liberation Sans" transform="rotate(90 1118.00 383.00)">U7</text><line x1="1077.30" y1="434.20" x2="1077.30" y2="492.80" stroke="#8c8c8c" stroke-width="1"/><rect x="1070.65" y="449.90" width="13.30" height="28.10" fill="#fff" stroke="#8c8c8c" stroke-width="1"/><circle cx="1077.30" cy="434.20" r="6" fill="#000"/><circle cx="1077.30" cy="492.80" r="6" fill="#000"/><text x="1077.30" y="419.00" font-size="8" text-anchor="middle" dominant-baseline="central" fill="#333" font-family="Liberation Sans" transform="rotate(90 1077.30 419.00)">R6</text><line x1="1100.10" y1="434.20" x2="1100.10" y2="492.80" stroke="#8c8c8c" stroke-width="1"/><rect x="1093.45" y="449.90" width="13.30" height="28.10" fill="#fff" stroke="#8c8c8c" stroke-width="1"/><circle cx="1100.10" cy="434.20" r="6" fill="#000"/><circle cx="1100.10" cy="492.80" r="6" fill="#000"/><text x="1100.10" y="419.00" font-size="8" text-anchor="middle" dominant-baseline="central" fill="#333" font-family="Liberation Sans" transform="rotate(90 1100.10 419.00)">R7</text><line x1="1123.20" y1="434.20" x2="1123.20" y2="492.80" stroke="#8c8c8c" stroke-width="1"/><rect x="1116.55" y="449.90" width="13.30" height="28.10" fill="#fff" stroke="#8c8c8c" stroke-width="1"/><circle cx="1123.20" cy="434.20" r="6" fill="#000"/><circle cx="1123.20" cy="492.80" r="6" fill="#000"/><text x="1123.20" y="419.00" font-size="8" text-anchor="middle" dominant-baseline="central" fill="#333" font-family="Liberation Sans" transform="rotate(90 1123.20 419.00)">R8</text><line x1="1146.30" y1="434.20" x2="1146.30" y2="492.80" stroke="#8c8c8c" stroke-width="1"/><rect x="1139.65" y="449.90" width="13.30" height="28.10" fill="#fff" stroke="#8c8c8c" stroke-width="1"/><circle cx="1146.30" cy="434.20" r="6" fill="#000"/><circle cx="1146.30" cy="492.80" r="6" fill="#000"/><text x="1146.30" y="419.00" font-size="8" text-anchor="middle" dominant-baseline="central" fill="#333" font-family="Liberation Sans" transform="rotate(90 1146.30 419.00)">R9</text><line x1="1169.70" y1="434.20" x2="1169.70" y2="492.80" stroke="#8c8c8c" stroke-width="1"/><rect x="1163.05" y="449.90" width="13.30" height="28.10" fill="#fff" stroke="#8c8c8c" stroke-width="1"/><circle cx="1169.70" cy="434.20" r="6" fill="#000"/><circle cx="1169.70" cy="492.80" r="6" fill="#000"/><text x="1170.00" y="419.50" font-size="13" text-anchor="middle" dominant-baseline="central" fill="#14284a" font-family="Liberation Sans" transform="rotate(90 1170.00 419.50)">R10</text><line x1="1192.20" y1="370.00" x2="1262.30" y2="370.00" stroke="#8c8c8c" stroke-width="1"/><rect x="1209.00" y="363.35" width="36.20" height="13.30" fill="#fff" stroke="#8c8c8c" stroke-width="1"/><circle cx="1192.20" cy="370.00" r="6" fill="#000"/><circle cx="1262.30" cy="370.00" r="6" fill="#000"/><text x="1227.00" y="356.00" font-size="8" text-anchor="middle" dominant-baseline="central" fill="#333" font-family="Liberation Sans" transform="rotate(90 1227.00 356.00)">R5</text><line x1="1285.40" y1="405.50" x2="1285.40" y2="475.60" stroke="#8c8c8c" stroke-width="1"/><rect x="1278.75" y="423.30" width="13.30" height="35.50" fill="#fff" stroke="#8c8c8c" stroke-width="1"/><circle cx="1285.40" cy="405.50" r="6" fill="#000"/><circle cx="1285.40" cy="475.60" r="6" fill="#000"/><text x="1290.00" y="393.00" font-size="8" text-anchor="middle" dominant-baseline="central" fill="#333" font-family="Liberation Sans" transform="rotate(90 1290.00 393.00)">R4</text><circle cx="1281" cy="381" r="3.6" fill="#fff" stroke="#222" stroke-width="0.9"/><circle cx="1281.00" cy="381.00" r="2.4" fill="#000"/><rect x="1210.00" y="399.60" width="1.90" height="8.80" fill="#000"/><rect x="1210.00" y="457.90" width="1.90" height="8.80" fill="#000"/><rect x="1213.51" y="399.60" width="1.90" height="8.80" fill="#000"/><rect x="1213.51" y="457.90" width="1.90" height="8.80" fill="#000"/><rect x="1217.02" y="399.60" width="1.90" height="8.80" fill="#000"/><rect x="1217.02" y="457.90" width="1.90" height="8.80" fill="#000"/><rect x="1220.53" y="399.60" width="1.90" height="8.80" fill="#000"/><rect x="1220.53" y="457.90" width="1.90" height="8.80" fill="#000"/><rect x="1224.04" y="399.60" width="1.90" height="8.80" fill="#000"/><rect x="1224.04" y="457.90" width="1.90" height="8.80" fill="#000"/><rect x="1227.55" y="399.60" width="1.90" height="8.80" fill="#000"/><rect x="1227.55" y="457.90" width="1.90" height="8.80" fill="#000"/><rect x="1231.05" y="399.60" width="1.90" height="8.80" fill="#000"/><rect x="1231.05" y="457.90" width="1.90" height="8.80" fill="#000"/><rect x="1234.56" y="399.60" width="1.90" height="8.80" fill="#000"/><rect x="1234.56" y="457.90" width="1.90" height="8.80" fill="#000"/><rect x="1238.07" y="399.60" width="1.90" height="8.80" fill="#000"/><rect x="1238.07" y="457.90" width="1.90" height="8.80" fill="#000"/><rect x="1241.58" y="399.60" width="1.90" height="8.80" fill="#000"/><rect x="1241.58" y="457.90" width="1.90" height="8.80" fill="#000"/><rect x="1245.09" y="399.60" width="1.90" height="8.80" fill="#000"/><rect x="1245.09" y="457.90" width="1.90" height="8.80" fill="#000"/><rect x="1248.60" y="399.60" width="1.90" height="8.80" fill="#000"/><rect x="1248.60" y="457.90" width="1.90" height="8.80" fill="#000"/><rect x="1196.70" y="412.90" width="8.80" height="1.90" fill="#000"/><rect x="1255.00" y="412.90" width="8.80" height="1.90" fill="#000"/><rect x="1196.70" y="416.41" width="8.80" height="1.90" fill="#000"/><rect x="1255.00" y="416.41" width="8.80" height="1.90" fill="#000"/><rect x="1196.70" y="419.92" width="8.80" height="1.90" fill="#000"/><rect x="1255.00" y="419.92" width="8.80" height="1.90" fill="#000"/><rect x="1196.70" y="423.43" width="8.80" height="1.90" fill="#000"/><rect x="1255.00" y="423.43" width="8.80" height="1.90" fill="#000"/><rect x="1196.70" y="426.94" width="8.80" height="1.90" fill="#000"/><rect x="1255.00" y="426.94" width="8.80" height="1.90" fill="#000"/><rect x="1196.70" y="430.45" width="8.80" height="1.90" fill="#000"/><rect x="1255.00" y="430.45" width="8.80" height="1.90" fill="#000"/><rect x="1196.70" y="433.95" width="8.80" height="1.90" fill="#000"/><rect x="1255.00" y="433.95" width="8.80" height="1.90" fill="#000"/><rect x="1196.70" y="437.46" width="8.80" height="1.90" fill="#000"/><rect x="1255.00" y="437.46" width="8.80" height="1.90" fill="#000"/><rect x="1196.70" y="440.97" width="8.80" height="1.90" fill="#000"/><rect x="1255.00" y="440.97" width="8.80" height="1.90" fill="#000"/><rect x="1196.70" y="444.48" width="8.80" height="1.90" fill="#000"/><rect x="1255.00" y="444.48" width="8.80" height="1.90" fill="#000"/><rect x="1196.70" y="447.99" width="8.80" height="1.90" fill="#000"/><rect x="1255.00" y="447.99" width="8.80" height="1.90" fill="#000"/><rect x="1196.70" y="451.50" width="8.80" height="1.90" fill="#000"/><rect x="1255.00" y="451.50" width="8.80" height="1.90" fill="#000"/><rect x="1205.50" y="408.40" width="49.50" height="49.50" fill="#fff" stroke="#8c8c8c" stroke-width="1"/><text x="1230.00" y="433.00" font-size="8" text-anchor="middle" dominant-baseline="central" fill="#333" font-family="Liberation Sans" transform="rotate(90 1230.00 433.00)">U2</text><rect x="1001.80" y="517.20" width="118.90" height="119.30" fill="#fff" stroke="#8c8c8c" stroke-width="1"/><circle cx="1005.30" cy="521.20" r="1.75" fill="#000"/><circle cx="1011.20" cy="521.20" r="1.75" fill="#000"/><circle cx="1017.11" cy="521.20" r="1.75" fill="#000"/><circle cx="1023.01" cy="521.20" r="1.75" fill="#000"/><circle cx="1028.92" cy="521.20" r="1.75" fill="#000"/><circle cx="1034.83" cy="521.20" r="1.75" fill="#000"/><circle cx="1040.73" cy="521.20" r="1.75" fill="#000"/><circle cx="1046.63" cy="521.20" r="1.75" fill="#000"/><circle cx="1052.54" cy="521.20" r="1.75" fill="#000"/><circle cx="1058.44" cy="521.20" r="1.75" fill="#000"/><circle cx="1064.35" cy="521.20" r="1.75" fill="#000"/><circle cx="1070.25" cy="521.20" r="1.75" fill="#000"/><circle cx="1076.16" cy="521.20" r="1.75" fill="#000"/><circle cx="1082.07" cy="521.20" r="1.75" fill="#000"/><circle cx="1087.97" cy="521.20" r="1.75" fill="#000"/><circle cx="1093.88" cy="521.20" r="1.75" fill="#000"/><circle cx="1099.78" cy="521.20" r="1.75" fill="#000"/><circle cx="1105.68" cy="521.20" r="1.75" fill="#000"/><circle cx="1111.59" cy="521.20" r="1.75" fill="#000"/><circle cx="1117.49" cy="521.20" r="1.75" fill="#000"/><circle cx="1005.30" cy="527.09" r="1.75" fill="#000"/><circle cx="1011.20" cy="527.09" r="1.75" fill="#000"/><circle cx="1017.11" cy="527.09" r="1.75" fill="#000"/><circle cx="1023.01" cy="527.09" r="1.75" fill="#000"/><circle cx="1028.92" cy="527.09" r="1.75" fill="#000"/><circle cx="1034.83" cy="527.09" r="1.75" fill="#000"/><circle cx="1040.73" cy="527.09" r="1.75" fill="#000"/><circle cx="1046.63" cy="527.09" r="1.75" fill="#000"/><circle cx="1052.54" cy="527.09" r="1.75" fill="#000"/><circle cx="1058.44" cy="527.09" r="1.75" fill="#000"/><circle cx="1064.35" cy="527.09" r="1.75" fill="#000"/><circle cx="1070.25" cy="527.09" r="1.75" fill="#000"/><circle cx="1076.16" cy="527.09" r="1.75" fill="#000"/><circle cx="1082.07" cy="527.09" r="1.75" fill="#000"/><circle cx="1087.97" cy="527.09" r="1.75" fill="#000"/><circle cx="1093.88" cy="527.09" r="1.75" fill="#000"/><circle cx="1099.78" cy="527.09" r="1.75" fill="#000"/><circle cx="1105.68" cy="527.09" r="1.75" fill="#000"/><circle cx="1111.59" cy="527.09" r="1.75" fill="#000"/><circle cx="1117.49" cy="527.09" r="1.75" fill="#000"/><circle cx="1005.30" cy="532.97" r="1.75" fill="#000"/><circle cx="1011.20" cy="532.97" r="1.75" fill="#000"/><circle cx="1017.11" cy="532.97" r="1.75" fill="#000"/><circle cx="1023.01" cy="532.97" r="1.75" fill="#000"/><circle cx="1028.92" cy="532.97" r="1.75" fill="#000"/><circle cx="1034.83" cy="532.97" r="1.75" fill="#000"/><circle cx="1040.73" cy="532.97" r="1.75" fill="#000"/><circle cx="1046.63" cy="532.97" r="1.75" fill="#000"/><circle cx="1052.54" cy="532.97" r="1.75" fill="#000"/><circle cx="1058.44" cy="532.97" r="1.75" fill="#000"/><circle cx="1064.35" cy="532.97" r="1.75" fill="#000"/><circle cx="1070.25" cy="532.97" r="1.75" fill="#000"/><circle cx="1076.16" cy="532.97" r="1.75" fill="#000"/><circle cx="1082.07" cy="532.97" r="1.75" fill="#000"/><circle cx="1087.97" cy="532.97" r="1.75" fill="#000"/><circle cx="1093.88" cy="532.97" r="1.75" fill="#000"/><circle cx="1099.78" cy="532.97" r="1.75" fill="#000"/><circle cx="1105.68" cy="532.97" r="1.75" fill="#000"/><circle cx="1111.59" cy="532.97" r="1.75" fill="#000"/><circle cx="1117.49" cy="532.97" r="1.75" fill="#000"/><circle cx="1005.30" cy="538.86" r="1.75" fill="#000"/><circle cx="1011.20" cy="538.86" r="1.75" fill="#000"/><circle cx="1017.11" cy="538.86" r="1.75" fill="#000"/><circle cx="1023.01" cy="538.86" r="1.75" fill="#000"/><circle cx="1028.92" cy="538.86" r="1.75" fill="#000"/><circle cx="1034.83" cy="538.86" r="1.75" fill="#000"/><circle cx="1040.73" cy="538.86" r="1.75" fill="#000"/><circle cx="1046.63" cy="538.86" r="1.75" fill="#000"/><circle cx="1052.54" cy="538.86" r="1.75" fill="#000"/><circle cx="1058.44" cy="538.86" r="1.75" fill="#000"/><circle cx="1064.35" cy="538.86" r="1.75" fill="#000"/><circle cx="1070.25" cy="538.86" r="1.75" fill="#000"/><circle cx="1076.16" cy="538.86" r="1.75" fill="#000"/><circle cx="1082.07" cy="538.86" r="1.75" fill="#000"/><circle cx="1087.97" cy="538.86" r="1.75" fill="#000"/><circle cx="1093.88" cy="538.86" r="1.75" fill="#000"/><circle cx="1099.78" cy="538.86" r="1.75" fill="#000"/><circle cx="1105.68" cy="538.86" r="1.75" fill="#000"/><circle cx="1111.59" cy="538.86" r="1.75" fill="#000"/><circle cx="1117.49" cy="538.86" r="1.75" fill="#000"/><circle cx="1005.30" cy="544.74" r="1.75" fill="#000"/><circle cx="1011.20" cy="544.74" r="1.75" fill="#000"/><circle cx="1017.11" cy="544.74" r="1.75" fill="#000"/><circle cx="1023.01" cy="544.74" r="1.75" fill="#000"/><circle cx="1099.78" cy="544.74" r="1.75" fill="#000"/><circle cx="1105.68" cy="544.74" r="1.75" fill="#000"/><circle cx="1111.59" cy="544.74" r="1.75" fill="#000"/><circle cx="1117.49" cy="544.74" r="1.75" fill="#000"/><circle cx="1005.30" cy="550.62" r="1.75" fill="#000"/><circle cx="1011.20" cy="550.62" r="1.75" fill="#000"/><circle cx="1017.11" cy="550.62" r="1.75" fill="#000"/><circle cx="1023.01" cy="550.62" r="1.75" fill="#000"/><circle cx="1099.78" cy="550.62" r="1.75" fill="#000"/><circle cx="1105.68" cy="550.62" r="1.75" fill="#000"/><circle cx="1111.59" cy="550.62" r="1.75" fill="#000"/><circle cx="1117.49" cy="550.62" r="1.75" fill="#000"/><circle cx="1005.30" cy="556.51" r="1.75" fill="#000"/><circle cx="1011.20" cy="556.51" r="1.75" fill="#000"/><circle cx="1017.11" cy="556.51" r="1.75" fill="#000"/><circle cx="1023.01" cy="556.51" r="1.75" fill="#000"/><circle cx="1099.78" cy="556.51" r="1.75" fill="#000"/><circle cx="1105.68" cy="556.51" r="1.75" fill="#000"/><circle cx="1111.59" cy="556.51" r="1.75" fill="#000"/><circle cx="1117.49" cy="556.51" r="1.75" fill="#000"/><circle cx="1005.30" cy="562.40" r="1.75" fill="#000"/><circle cx="1011.20" cy="562.40" r="1.75" fill="#000"/><circle cx="1017.11" cy="562.40" r="1.75" fill="#000"/><circle cx="1023.01" cy="562.40" r="1.75" fill="#000"/><circle cx="1099.78" cy="562.40" r="1.75" fill="#000"/><circle cx="1105.68" cy="562.40" r="1.75" fill="#000"/><circle cx="1111.59" cy="562.40" r="1.75" fill="#000"/><circle cx="1117.49" cy="562.40" r="1.75" fill="#000"/><circle cx="1005.30" cy="568.28" r="1.75" fill="#000"/><circle cx="1011.20" cy="568.28" r="1.75" fill="#000"/><circle cx="1017.11" cy="568.28" r="1.75" fill="#000"/><circle cx="1023.01" cy="568.28" r="1.75" fill="#000"/><circle cx="1099.78" cy="568.28" r="1.75" fill="#000"/><circle cx="1105.68" cy="568.28" r="1.75" fill="#000"/><circle cx="1111.59" cy="568.28" r="1.75" fill="#000"/><circle cx="1117.49" cy="568.28" r="1.75" fill="#000"/><circle cx="1005.30" cy="574.17" r="1.75" fill="#000"/><circle cx="1011.20" cy="574.17" r="1.75" fill="#000"/><circle cx="1017.11" cy="574.17" r="1.75" fill="#000"/><circle cx="1023.01" cy="574.17" r="1.75" fill="#000"/><circle cx="1099.78" cy="574.17" r="1.75" fill="#000"/><circle cx="1105.68" cy="574.17" r="1.75" fill="#000"/><circle cx="1111.59" cy="574.17" r="1.75" fill="#000"/><circle cx="1117.49" cy="574.17" r="1.75" fill="#000"/><circle cx="1005.30" cy="580.05" r="1.75" fill="#000"/><circle cx="1011.20" cy="580.05" r="1.75" fill="#000"/><circle cx="1017.11" cy="580.05" r="1.75" fill="#000"/><circle cx="1023.01" cy="580.05" r="1.75" fill="#000"/><circle cx="1099.78" cy="580.05" r="1.75" fill="#000"/><circle cx="1105.68" cy="580.05" r="1.75" fill="#000"/><circle cx="1111.59" cy="580.05" r="1.75" fill="#000"/><circle cx="1117.49" cy="580.05" r="1.75" fill="#000"/><circle cx="1005.30" cy="585.94" r="1.75" fill="#000"/><circle cx="1011.20" cy="585.94" r="1.75" fill="#000"/><circle cx="1017.11" cy="585.94" r="1.75" fill="#000"/><circle cx="1023.01" cy="585.94" r="1.75" fill="#000"/><circle cx="1099.78" cy="585.94" r="1.75" fill="#000"/><circle cx="1105.68" cy="585.94" r="1.75" fill="#000"/><circle cx="1111.59" cy="585.94" r="1.75" fill="#000"/><circle cx="1117.49" cy="585.94" r="1.75" fill="#000"/><circle cx="1005.30" cy="591.82" r="1.75" fill="#000"/><circle cx="1011.20" cy="591.82" r="1.75" fill="#000"/><circle cx="1017.11" cy="591.82" r="1.75" fill="#000"/><circle cx="1023.01" cy="591.82" r="1.75" fill="#000"/><circle cx="1099.78" cy="591.82" r="1.75" fill="#000"/><circle cx="1105.68" cy="591.82" r="1.75" fill="#000"/><circle cx="1111.59" cy="591.82" r="1.75" fill="#000"/><circle cx="1117.49" cy="591.82" r="1.75" fill="#000"/><circle cx="1005.30" cy="597.71" r="1.75" fill="#000"/><circle cx="1011.20" cy="597.71" r="1.75" fill="#000"/><circle cx="1017.11" cy="597.71" r="1.75" fill="#000"/><circle cx="1023.01" cy="597.71" r="1.75" fill="#000"/><circle cx="1099.78" cy="597.71" r="1.75" fill="#000"/><circle cx="1105.68" cy="597.71" r="1.75" fill="#000"/><circle cx="1111.59" cy="597.71" r="1.75" fill="#000"/><circle cx="1117.49" cy="597.71" r="1.75" fill="#000"/><circle cx="1005.30" cy="603.59" r="1.75" fill="#000"/><circle cx="1011.20" cy="603.59" r="1.75" fill="#000"/><circle cx="1017.11" cy="603.59" r="1.75" fill="#000"/><circle cx="1023.01" cy="603.59" r="1.75" fill="#000"/><circle cx="1099.78" cy="603.59" r="1.75" fill="#000"/><circle cx="1105.68" cy="603.59" r="1.75" fill="#000"/><circle cx="1111.59" cy="603.59" r="1.75" fill="#000"/><circle cx="1117.49" cy="603.59" r="1.75" fill="#000"/><circle cx="1005.30" cy="609.48" r="1.75" fill="#000"/><circle cx="1011.20" cy="609.48" r="1.75" fill="#000"/><circle cx="1017.11" cy="609.48" r="1.75" fill="#000"/><circle cx="1023.01" cy="609.48" r="1.75" fill="#000"/><circle cx="1099.78" cy="609.48" r="1.75" fill="#000"/><circle cx="1105.68" cy="609.48" r="1.75" fill="#000"/><circle cx="1111.59" cy="609.48" r="1.75" fill="#000"/><circle cx="1117.49" cy="609.48" r="1.75" fill="#000"/><circle cx="1005.30" cy="615.36" r="1.75" fill="#000"/><circle cx="1011.20" cy="615.36" r="1.75" fill="#000"/><circle cx="1017.11" cy="615.36" r="1.75" fill="#000"/><circle cx="1023.01" cy="615.36" r="1.75" fill="#000"/><circle cx="1028.92" cy="615.36" r="1.75" fill="#000"/><circle cx="1034.83" cy="615.36" r="1.75" fill="#000"/><circle cx="1040.73" cy="615.36" r="1.75" fill="#000"/><circle cx="1046.63" cy="615.36" r="1.75" fill="#000"/><circle cx="1052.54" cy="615.36" r="1.75" fill="#000"/><circle cx="1058.44" cy="615.36" r="1.75" fill="#000"/><circle cx="1064.35" cy="615.36" r="1.75" fill="#000"/><circle cx="1070.25" cy="615.36" r="1.75" fill="#000"/><circle cx="1076.16" cy="615.36" r="1.75" fill="#000"/><circle cx="1082.07" cy="615.36" r="1.75" fill="#000"/><circle cx="1087.97" cy="615.36" r="1.75" fill="#000"/><circle cx="1093.88" cy="615.36" r="1.75" fill="#000"/><circle cx="1099.78" cy="615.36" r="1.75" fill="#000"/><circle cx="1105.68" cy="615.36" r="1.75" fill="#000"/><circle cx="1111.59" cy="615.36" r="1.75" fill="#000"/><circle cx="1117.49" cy="615.36" r="1.75" fill="#000"/><circle cx="1005.30" cy="621.25" r="1.75" fill="#000"/><circle cx="1011.20" cy="621.25" r="1.75" fill="#000"/><circle cx="1017.11" cy="621.25" r="1.75" fill="#000"/><circle cx="1023.01" cy="621.25" r="1.75" fill="#000"/><circle cx="1028.92" cy="621.25" r="1.75" fill="#000"/><circle cx="1034.83" cy="621.25" r="1.75" fill="#000"/><circle cx="1040.73" cy="621.25" r="1.75" fill="#000"/><circle cx="1046.63" cy="621.25" r="1.75" fill="#000"/><circle cx="1052.54" cy="621.25" r="1.75" fill="#000"/><circle cx="1058.44" cy="621.25" r="1.75" fill="#000"/><circle cx="1064.35" cy="621.25" r="1.75" fill="#000"/><circle cx="1070.25" cy="621.25" r="1.75" fill="#000"/><circle cx="1076.16" cy="621.25" r="1.75" fill="#000"/><circle cx="1082.07" cy="621.25" r="1.75" fill="#000"/><circle cx="1087.97" cy="621.25" r="1.75" fill="#000"/><circle cx="1093.88" cy="621.25" r="1.75" fill="#000"/><circle cx="1099.78" cy="621.25" r="1.75" fill="#000"/><circle cx="1105.68" cy="621.25" r="1.75" fill="#000"/><circle cx="1111.59" cy="621.25" r="1.75" fill="#000"/><circle cx="1117.49" cy="621.25" r="1.75" fill="#000"/><circle cx="1005.30" cy="627.13" r="1.75" fill="#000"/><circle cx="1011.20" cy="627.13" r="1.75" fill="#000"/><circle cx="1017.11" cy="627.13" r="1.75" fill="#000"/><circle cx="1023.01" cy="627.13" r="1.75" fill="#000"/><circle cx="1028.92" cy="627.13" r="1.75" fill="#000"/><circle cx="1034.83" cy="627.13" r="1.75" fill="#000"/><circle cx="1040.73" cy="627.13" r="1.75" fill="#000"/><circle cx="1046.63" cy="627.13" r="1.75" fill="#000"/><circle cx="1052.54" cy="627.13" r="1.75" fill="#000"/><circle cx="1058.44" cy="627.13" r="1.75" fill="#000"/><circle cx="1064.35" cy="627.13" r="1.75" fill="#000"/><circle cx="1070.25" cy="627.13" r="1.75" fill="#000"/><circle cx="1076.16" cy="627.13" r="1.75" fill="#000"/><circle cx="1082.07" cy="627.13" r="1.75" fill="#000"/><circle cx="1087.97" cy="627.13" r="1.75" fill="#000"/><circle cx="1093.88" cy="627.13" r="1.75" fill="#000"/><circle cx="1099.78" cy="627.13" r="1.75" fill="#000"/><circle cx="1105.68" cy="627.13" r="1.75" fill="#000"/><circle cx="1111.59" cy="627.13" r="1.75" fill="#000"/><circle cx="1117.49" cy="627.13" r="1.75" fill="#000"/><circle cx="1005.30" cy="633.02" r="1.75" fill="#000"/><circle cx="1011.20" cy="633.02" r="1.75" fill="#000"/><circle cx="1017.11" cy="633.02" r="1.75" fill="#000"/><circle cx="1023.01" cy="633.02" r="1.75" fill="#000"/><circle cx="1028.92" cy="633.02" r="1.75" fill="#000"/><circle cx="1034.83" cy="633.02" r="1.75" fill="#000"/><circle cx="1040.73" cy="633.02" r="1.75" fill="#000"/><circle cx="1046.63" cy="633.02" r="1.75" fill="#000"/><circle cx="1052.54" cy="633.02" r="1.75" fill="#000"/><circle cx="1058.44" cy="633.02" r="1.75" fill="#000"/><circle cx="1064.35" cy="633.02" r="1.75" fill="#000"/><circle cx="1070.25" cy="633.02" r="1.75" fill="#000"/><circle cx="1076.16" cy="633.02" r="1.75" fill="#000"/><circle cx="1082.07" cy="633.02" r="1.75" fill="#000"/><circle cx="1087.97" cy="633.02" r="1.75" fill="#000"/><circle cx="1093.88" cy="633.02" r="1.75" fill="#000"/><circle cx="1099.78" cy="633.02" r="1.75" fill="#000"/><circle cx="1105.68" cy="633.02" r="1.75" fill="#000"/><circle cx="1111.59" cy="633.02" r="1.75" fill="#000"/><circle cx="1117.49" cy="633.02" r="1.75" fill="#000"/><rect x="1049.60" y="565.40" width="23.20" height="22.80" fill="#fff" stroke="#8c8c8c" stroke-width="0.8"/><circle cx="1052.00" cy="567.80" r="1.0" fill="#000"/><circle cx="1055.70" cy="567.80" r="1.0" fill="#000"/><circle cx="1059.40" cy="567.80" r="1.0" fill="#000"/><circle cx="1063.10" cy="567.80" r="1.0" fill="#000"/><circle cx="1066.80" cy="567.80" r="1.0" fill="#000"/><circle cx="1070.50" cy="567.80" r="1.0" fill="#000"/><circle cx="1052.00" cy="571.40" r="1.0" fill="#000"/><circle cx="1055.70" cy="571.40" r="1.0" fill="#000"/><circle cx="1059.40" cy="571.40" r="1.0" fill="#000"/><circle cx="1063.10" cy="571.40" r="1.0" fill="#000"/><circle cx="1066.80" cy="571.40" r="1.0" fill="#000"/><circle cx="1070.50" cy="571.40" r="1.0" fill="#000"/><circle cx="1052.00" cy="575.00" r="1.0" fill="#000"/><circle cx="1055.70" cy="575.00" r="1.0" fill="#000"/><circle cx="1059.40" cy="575.00" r="1.0" fill="#000"/><circle cx="1063.10" cy="575.00" r="1.0" fill="#000"/><circle cx="1066.80" cy="575.00" r="1.0" fill="#000"/><circle cx="1070.50" cy="575.00" r="1.0" fill="#000"/><circle cx="1052.00" cy="578.60" r="1.0" fill="#000"/><circle cx="1055.70" cy="578.60" r="1.0" fill="#000"/><circle cx="1059.40" cy="578.60" r="1.0" fill="#000"/><circle cx="1063.10" cy="578.60" r="1.0" fill="#000"/><circle cx="1066.80" cy="578.60" r="1.0" fill="#000"/><circle cx="1070.50" cy="578.60" r="1.0" fill="#000"/><circle cx="1052.00" cy="582.20" r="1.0" fill="#000"/><circle cx="1055.70" cy="582.20" r="1.0" fill="#000"/><circle cx="1059.40" cy="582.20" r="1.0" fill="#000"/><circle cx="1063.10" cy="582.20" r="1.0" fill="#000"/><circle cx="1066.80" cy="582.20" r="1.0" fill="#000"/><circle cx="1070.50" cy="582.20" r="1.0" fill="#000"/><circle cx="1052.00" cy="585.80" r="1.0" fill="#000"/><circle cx="1055.70" cy="585.80" r="1.0" fill="#000"/><circle cx="1059.40" cy="585.80" r="1.0" fill="#000"/><circle cx="1063.10" cy="585.80" r="1.0" fill="#000"/><circle cx="1066.80" cy="585.80" r="1.0" fill="#000"/><circle cx="1070.50" cy="585.80" r="1.0" fill="#000"/><text x="1061.00" y="577.00" font-size="7" text-anchor="middle" dominant-baseline="central" fill="#8a6a3a" font-family="Liberation Sans" transform="rotate(90 1061.00 577.00)">U5A</text><rect x="1143.50" y="519.50" width="7.00" height="15.00" fill="#fff" stroke="#8c8c8c" stroke-width="0.8"/><rect x="1144.80" y="521.20" width="4.40" height="4.20" fill="#000"/><rect x="1144.80" y="528.60" width="4.40" height="4.20" fill="#000"/><rect x="1143.50" y="537.50" width="7.00" height="15.00" fill="#fff" stroke="#8c8c8c" stroke-width="0.8"/><rect x="1144.80" y="539.20" width="4.40" height="4.20" fill="#000"/><rect x="1144.80" y="546.60" width="4.40" height="4.20" fill="#000"/><rect x="1143.50" y="555.50" width="7.00" height="15.00" fill="#fff" stroke="#8c8c8c" stroke-width="0.8"/><rect x="1144.80" y="557.20" width="4.40" height="4.20" fill="#000"/><rect x="1144.80" y="564.60" width="4.40" height="4.20" fill="#000"/><rect x="1143.50" y="573.50" width="7.00" height="15.00" fill="#fff" stroke="#8c8c8c" stroke-width="0.8"/><rect x="1144.80" y="575.20" width="4.40" height="4.20" fill="#000"/><rect x="1144.80" y="582.60" width="4.40" height="4.20" fill="#000"/><rect x="1143.50" y="591.50" width="7.00" height="15.00" fill="#fff" stroke="#8c8c8c" stroke-width="0.8"/><rect x="1144.80" y="593.20" width="4.40" height="4.20" fill="#000"/><rect x="1144.80" y="600.60" width="4.40" height="4.20" fill="#000"/><rect x="1143.50" y="609.50" width="7.00" height="15.00" fill="#fff" stroke="#8c8c8c" stroke-width="0.8"/><rect x="1144.80" y="611.20" width="4.40" height="4.20" fill="#000"/><rect x="1144.80" y="618.60" width="4.40" height="4.20" fill="#000"/><rect x="1143.50" y="627.50" width="7.00" height="15.00" fill="#fff" stroke="#8c8c8c" stroke-width="0.8"/><rect x="1144.80" y="629.20" width="4.40" height="4.20" fill="#000"/><rect x="1144.80" y="636.60" width="4.40" height="4.20" fill="#000"/><rect x="1171.10" y="519.50" width="7.00" height="15.00" fill="#fff" stroke="#8c8c8c" stroke-width="0.8"/><rect x="1172.40" y="521.20" width="4.40" height="4.20" fill="#000"/><rect x="1172.40" y="528.60" width="4.40" height="4.20" fill="#000"/><rect x="1171.10" y="537.50" width="7.00" height="15.00" fill="#fff" stroke="#8c8c8c" stroke-width="0.8"/><rect x="1172.40" y="539.20" width="4.40" height="4.20" fill="#000"/><rect x="1172.40" y="546.60" width="4.40" height="4.20" fill="#000"/><rect x="1171.10" y="603.50" width="7.00" height="15.00" fill="#fff" stroke="#8c8c8c" stroke-width="0.8"/><rect x="1172.40" y="605.20" width="4.40" height="4.20" fill="#000"/><rect x="1172.40" y="612.60" width="4.40" height="4.20" fill="#000"/><rect x="1171.10" y="621.50" width="7.00" height="15.00" fill="#fff" stroke="#8c8c8c" stroke-width="0.8"/><rect x="1172.40" y="623.20" width="4.40" height="4.20" fill="#000"/><rect x="1172.40" y="630.60" width="4.40" height="4.20" fill="#000"/><rect x="1152.60" y="523.50" width="15.80" height="6.00" fill="#fff" stroke="#8c8c8c" stroke-width="0.8"/><rect x="1154.50" y="524.30" width="4.20" height="4.40" fill="#000"/><rect x="1162.30" y="524.30" width="4.20" height="4.40" fill="#000"/><rect x="1152.60" y="535.20" width="15.80" height="6.00" fill="#fff" stroke="#8c8c8c" stroke-width="0.8"/><rect x="1154.50" y="536.00" width="4.20" height="4.40" fill="#000"/><rect x="1162.30" y="536.00" width="4.20" height="4.40" fill="#000"/><rect x="1152.60" y="547.00" width="15.80" height="6.00" fill="#fff" stroke="#8c8c8c" stroke-width="0.8"/><rect x="1154.50" y="547.80" width="4.20" height="4.40" fill="#000"/><rect x="1162.30" y="547.80" width="4.20" height="4.40" fill="#000"/><rect x="1152.60" y="558.60" width="15.80" height="6.00" fill="#fff" stroke="#8c8c8c" stroke-width="0.8"/><rect x="1154.50" y="559.40" width="4.20" height="4.40" fill="#000"/><rect x="1162.30" y="559.40" width="4.20" height="4.40" fill="#000"/><rect x="1152.60" y="594.00" width="15.80" height="6.00" fill="#fff" stroke="#8c8c8c" stroke-width="0.8"/><rect x="1154.50" y="594.80" width="4.20" height="4.40" fill="#000"/><rect x="1162.30" y="594.80" width="4.20" height="4.40" fill="#000"/><rect x="1152.60" y="606.00" width="15.80" height="6.00" fill="#fff" stroke="#8c8c8c" stroke-width="0.8"/><rect x="1154.50" y="606.80" width="4.20" height="4.40" fill="#000"/><rect x="1162.30" y="606.80" width="4.20" height="4.40" fill="#000"/><rect x="1152.60" y="618.00" width="15.80" height="6.00" fill="#fff" stroke="#8c8c8c" stroke-width="0.8"/><rect x="1154.50" y="618.80" width="4.20" height="4.40" fill="#000"/><rect x="1162.30" y="618.80" width="4.20" height="4.40" fill="#000"/><rect x="1152.60" y="629.60" width="15.80" height="6.00" fill="#fff" stroke="#8c8c8c" stroke-width="0.8"/><rect x="1154.50" y="630.40" width="4.20" height="4.40" fill="#000"/><rect x="1162.30" y="630.40" width="4.20" height="4.40" fill="#000"/><rect x="1157.00" y="576.00" width="7.00" height="15.00" fill="#fff" stroke="#8c8c8c" stroke-width="0.8"/><rect x="1158.30" y="577.70" width="4.40" height="4.20" fill="#000"/><rect x="1158.30" y="585.10" width="4.40" height="4.20" fill="#000"/><text x="1120.00" y="510.00" font-size="5" text-anchor="middle" dominant-baseline="central" fill="#555" font-family="Liberation Sans" transform="rotate(90 1120.00 510.00)">U5-LF2</text><circle cx="1130" cy="508" r="3.6" fill="#fff" stroke="#222" stroke-width="0.9"/><circle cx="1130.00" cy="508.00" r="2.4" fill="#000"/><rect x="1186.90" y="511.30" width="21.70" height="10.50" fill="#000" stroke="#555" stroke-width="0.8"/><rect x="1186.90" y="524.90" width="21.70" height="10.50" fill="#000" stroke="#555" stroke-width="0.8"/><rect x="1186.90" y="538.50" width="21.70" height="10.50" fill="#000" stroke="#555" stroke-width="0.8"/><rect x="1186.90" y="552.10" width="21.70" height="10.50" fill="#000" stroke="#555" stroke-width="0.8"/><rect x="1186.90" y="565.70" width="21.70" height="10.50" fill="#000" stroke="#555" stroke-width="0.8"/><rect x="1186.90" y="579.30" width="21.70" height="10.50" fill="#000" stroke="#555" stroke-width="0.8"/><rect x="1186.90" y="592.90" width="21.70" height="10.50" fill="#000" stroke="#555" stroke-width="0.8"/><rect x="1186.90" y="606.50" width="21.70" height="10.50" fill="#000" stroke="#555" stroke-width="0.8"/><rect x="1186.90" y="620.10" width="21.70" height="10.50" fill="#000" stroke="#555" stroke-width="0.8"/><rect x="1186.90" y="633.70" width="21.70" height="10.50" fill="#000" stroke="#555" stroke-width="0.8"/><text x="470.00" y="-1198.00" font-size="20" dominant-baseline="central" fill="#06060c" stroke="#06060c" stroke-width="0.3" font-family="Liberation Sans" transform="rotate(90)">SMB14</text><text x="493.09" y="-1198.00" font-size="20" dominant-baseline="central" fill="#06060c" stroke="#06060c" stroke-width="0.3" font-family="Liberation Sans" transform="rotate(90)">SMB7</text><text x="516.17" y="-1198.00" font-size="20" dominant-baseline="central" fill="#06060c" stroke="#06060c" stroke-width="0.3" font-family="Liberation Sans" transform="rotate(90)">SMB9</text><text x="533.43" y="-1198.00" font-size="20" dominant-baseline="central" fill="#06060c" stroke="#06060c" stroke-width="0.3" font-family="Liberation Sans" transform="rotate(90)">SMB11</text><text x="554.57" y="-1198.00" font-size="20" dominant-baseline="central" fill="#06060c" stroke="#06060c" stroke-width="0.3" font-family="Liberation Sans" transform="rotate(90)">SMB13</text><text x="585.43" y="-1198.00" font-size="20" dominant-baseline="central" fill="#06060c" stroke="#06060c" stroke-width="0.3" font-family="Liberation Sans" transform="rotate(90)">SMB8</text><text x="596.86" y="-1198.00" font-size="20" dominant-baseline="central" fill="#06060c" stroke="#06060c" stroke-width="0.3" font-family="Liberation Sans" transform="rotate(90)">SMR40</text><text x="618.00" y="-1198.00" font-size="20" dominant-baseline="central" fill="#06060c" stroke="#06060c" stroke-width="0.3" font-family="Liberation Sans" transform="rotate(90)">SMR39</text><line x1="1225.50" y1="488.40" x2="1225.50" y2="525.40" stroke="#8c8c8c" stroke-width="1"/><rect x="1218.90" y="496.40" width="13.30" height="21.00" fill="#fff" stroke="#8c8c8c" stroke-width="1"/><line x1="1218.90" y1="500.40" x2="1232.10" y2="500.40" stroke="#8c8c8c" stroke-width="1"/><line x1="1225.50" y1="618.60" x2="1225.50" y2="655.60" stroke="#8c8c8c" stroke-width="1"/><rect x="1218.90" y="626.60" width="13.30" height="21.00" fill="#fff" stroke="#8c8c8c" stroke-width="1"/><line x1="1218.90" y1="630.60" x2="1232.10" y2="630.60" stroke="#8c8c8c" stroke-width="1"/><circle cx="1225.50" cy="483.60" r="6" fill="#000"/><circle cx="1225.50" cy="530.60" r="6" fill="#000"/><circle cx="1225.50" cy="613.80" r="6" fill="#000"/><circle cx="1225.50" cy="660.40" r="6" fill="#000"/><line x1="1243.50" y1="488.40" x2="1243.50" y2="525.40" stroke="#8c8c8c" stroke-width="1"/><rect x="1236.90" y="496.40" width="13.30" height="21.00" fill="#fff" stroke="#8c8c8c" stroke-width="1"/><line x1="1236.90" y1="500.40" x2="1250.10" y2="500.40" stroke="#8c8c8c" stroke-width="1"/><line x1="1243.50" y1="554.00" x2="1243.50" y2="589.30" stroke="#8c8c8c" stroke-width="1"/><rect x="1236.90" y="562.00" width="13.30" height="19.30" fill="#fff" stroke="#8c8c8c" stroke-width="1"/><line x1="1236.90" y1="566.00" x2="1250.10" y2="566.00" stroke="#8c8c8c" stroke-width="1"/><line x1="1243.50" y1="618.60" x2="1243.50" y2="655.60" stroke="#8c8c8c" stroke-width="1"/><rect x="1236.90" y="626.60" width="13.30" height="21.00" fill="#fff" stroke="#8c8c8c" stroke-width="1"/><line x1="1236.90" y1="630.60" x2="1250.10" y2="630.60" stroke="#8c8c8c" stroke-width="1"/><circle cx="1243.50" cy="483.60" r="6" fill="#000"/><circle cx="1243.50" cy="530.60" r="6" fill="#000"/><circle cx="1243.50" cy="548.70" r="6" fill="#000"/><circle cx="1243.50" cy="595.70" r="6" fill="#000"/><circle cx="1243.50" cy="613.80" r="6" fill="#000"/><circle cx="1243.50" cy="660.40" r="6" fill="#000"/><text x="1264.50" y="507.00" font-size="12.5" text-anchor="middle" dominant-baseline="central" fill="#14284a" font-family="Liberation Sans" transform="rotate(90 1264.50 507.00)">CR5</text><text x="1226.00" y="573.50" font-size="12.5" text-anchor="middle" dominant-baseline="central" fill="#14284a" font-family="Liberation Sans" transform="rotate(90 1226.00 573.50)" textLength="76" lengthAdjust="spacingAndGlyphs">CR4CR3 CR1</text><rect x="1268.40" y="535.50" width="23.40" height="90.40" fill="#fff" stroke="#8c8c8c" stroke-width="1"/><rect x="1275.60" y="615.90" width="9.00" height="9.50" fill="#fff" stroke="#8c8c8c" stroke-width="1"/><circle cx="1262.80" cy="539.80" r="4" fill="#000"/><circle cx="1297.80" cy="539.80" r="4" fill="#000"/><circle cx="1262.80" cy="551.50" r="4" fill="#000"/><circle cx="1297.80" cy="551.50" r="4" fill="#000"/><circle cx="1262.80" cy="563.20" r="4" fill="#000"/><circle cx="1297.80" cy="563.20" r="4" fill="#000"/><circle cx="1262.80" cy="574.90" r="4" fill="#000"/><circle cx="1297.80" cy="574.90" r="4" fill="#000"/><circle cx="1262.80" cy="586.60" r="4" fill="#000"/><circle cx="1297.80" cy="586.60" r="4" fill="#000"/><circle cx="1262.80" cy="598.30" r="4" fill="#000"/><circle cx="1297.80" cy="598.30" r="4" fill="#000"/><circle cx="1262.80" cy="610.00" r="4" fill="#000"/><circle cx="1297.80" cy="610.00" r="4" fill="#000"/><circle cx="1262.80" cy="621.70" r="4" fill="#000"/><rect x="1293.80" y="617.70" width="8.00" height="8.00" fill="#000"/><text x="1280.00" y="580.00" font-size="9" text-anchor="middle" dominant-baseline="central" fill="#2a3a6a" font-family="Liberation Sans">U6</text><line x1="1285.70" y1="678.50" x2="1285.70" y2="749.20" stroke="#8c8c8c" stroke-width="1"/><rect x="1279.05" y="696.30" width="13.30" height="35.10" fill="#fff" stroke="#8c8c8c" stroke-width="1"/><circle cx="1285.70" cy="678.50" r="6" fill="#000"/><circle cx="1285.70" cy="749.20" r="6" fill="#000"/><text x="1286.00" y="663.00" font-size="8" text-anchor="middle" dominant-baseline="central" fill="#333" font-family="Liberation Sans" transform="rotate(90 1286.00 663.00)">R3</text><path d="M1166.6 681.5 L1254.5 681.5 L1254.5 769.3 L1174.6 769.3 L1166.6 761.3 Z" fill="#fff" stroke="#8c8c8c"/><rect x="1179.40" y="682.00" width="2.80" height="10.80" fill="#000"/><rect x="1179.40" y="758.00" width="2.80" height="10.80" fill="#000"/><rect x="1167.10" y="694.90" width="11.40" height="2.80" fill="#000"/><rect x="1243.10" y="694.90" width="10.90" height="2.80" fill="#000"/><rect x="1185.40" y="682.00" width="2.80" height="10.80" fill="#000"/><rect x="1185.40" y="758.00" width="2.80" height="10.80" fill="#000"/><rect x="1167.10" y="700.90" width="11.40" height="2.80" fill="#000"/><rect x="1243.10" y="700.90" width="10.90" height="2.80" fill="#000"/><rect x="1191.40" y="682.00" width="2.80" height="10.80" fill="#000"/><rect x="1191.40" y="758.00" width="2.80" height="10.80" fill="#000"/><rect x="1167.10" y="706.90" width="11.40" height="2.80" fill="#000"/><rect x="1243.10" y="706.90" width="10.90" height="2.80" fill="#000"/><rect x="1197.40" y="682.00" width="2.80" height="10.80" fill="#000"/><rect x="1197.40" y="758.00" width="2.80" height="10.80" fill="#000"/><rect x="1167.10" y="712.90" width="11.40" height="2.80" fill="#000"/><rect x="1243.10" y="712.90" width="10.90" height="2.80" fill="#000"/><rect x="1203.40" y="682.00" width="2.80" height="10.80" fill="#000"/><rect x="1203.40" y="758.00" width="2.80" height="10.80" fill="#000"/><rect x="1167.10" y="718.90" width="11.40" height="2.80" fill="#000"/><rect x="1243.10" y="718.90" width="10.90" height="2.80" fill="#000"/><rect x="1209.40" y="682.00" width="2.80" height="10.80" fill="#000"/><rect x="1209.40" y="758.00" width="2.80" height="10.80" fill="#000"/><rect x="1167.10" y="724.90" width="11.40" height="2.80" fill="#000"/><rect x="1243.10" y="724.90" width="10.90" height="2.80" fill="#000"/><rect x="1215.40" y="682.00" width="2.80" height="10.80" fill="#000"/><rect x="1215.40" y="758.00" width="2.80" height="10.80" fill="#000"/><rect x="1167.10" y="730.90" width="11.40" height="2.80" fill="#000"/><rect x="1243.10" y="730.90" width="10.90" height="2.80" fill="#000"/><rect x="1221.40" y="682.00" width="2.80" height="10.80" fill="#000"/><rect x="1221.40" y="758.00" width="2.80" height="10.80" fill="#000"/><rect x="1167.10" y="736.90" width="11.40" height="2.80" fill="#000"/><rect x="1243.10" y="736.90" width="10.90" height="2.80" fill="#000"/><rect x="1227.40" y="682.00" width="2.80" height="10.80" fill="#000"/><rect x="1227.40" y="758.00" width="2.80" height="10.80" fill="#000"/><rect x="1167.10" y="742.90" width="11.40" height="2.80" fill="#000"/><rect x="1243.10" y="742.90" width="10.90" height="2.80" fill="#000"/><rect x="1233.40" y="682.00" width="2.80" height="10.80" fill="#000"/><rect x="1233.40" y="758.00" width="2.80" height="10.80" fill="#000"/><rect x="1167.10" y="748.90" width="11.40" height="2.80" fill="#000"/><rect x="1243.10" y="748.90" width="10.90" height="2.80" fill="#000"/><rect x="1239.40" y="682.00" width="2.80" height="10.80" fill="#000"/><rect x="1239.40" y="758.00" width="2.80" height="10.80" fill="#000"/><rect x="1167.10" y="754.90" width="11.40" height="2.80" fill="#000"/><rect x="1243.10" y="754.90" width="10.90" height="2.80" fill="#000"/><text x="1211.00" y="726.00" font-size="9" text-anchor="middle" dominant-baseline="central" fill="#2a3a6a" font-family="Liberation Sans">U4</text><text x="1249.00" y="676.50" font-size="12.5" text-anchor="middle" dominant-baseline="central" fill="#14284a" font-family="Liberation Sans" transform="rotate(90 1249.00 676.50)">CR2</text><circle cx="1180" cy="726" r="1" fill="none" stroke="#555" stroke-width="0.6"/><line x1="1191.90" y1="794.40" x2="1262.40" y2="794.40" stroke="#8c8c8c" stroke-width="1"/><rect x="1209.50" y="787.75" width="35.50" height="13.30" fill="#fff" stroke="#8c8c8c" stroke-width="1"/><circle cx="1191.90" cy="794.40" r="6" fill="#000"/><circle cx="1262.40" cy="794.40" r="6" fill="#000"/><text x="1227.00" y="781.00" font-size="8" text-anchor="middle" dominant-baseline="central" fill="#333" font-family="Liberation Sans" transform="rotate(90 1227.00 781.00)">R2</text><circle cx="1281" cy="780.6" r="3.6" fill="#fff" stroke="#222" stroke-width="0.9"/><circle cx="1281.00" cy="780.60" r="2.4" fill="#000"/><line x1="1077.40" y1="664.70" x2="1171.50" y2="664.70" stroke="#8c8c8c" stroke-width="1"/><rect x="1099.50" y="658.30" width="49.70" height="12.80" fill="#fff" stroke="#8c8c8c" stroke-width="1"/><circle cx="1077.40" cy="664.70" r="6" fill="#000"/><circle cx="1171.50" cy="664.70" r="6" fill="#000"/><text x="1124.00" y="650.00" font-size="8" text-anchor="middle" dominant-baseline="central" fill="#333" font-family="Liberation Sans" transform="rotate(90 1124.00 650.00)">C2</text><line x1="1077.40" y1="799.00" x2="1171.50" y2="799.00" stroke="#8c8c8c" stroke-width="1"/><rect x="1099.50" y="792.45" width="49.70" height="13.10" fill="#fff" stroke="#8c8c8c" stroke-width="1"/><circle cx="1077.40" cy="799.00" r="6" fill="#000"/><circle cx="1171.50" cy="799.00" r="6" fill="#000"/><text x="1124.00" y="783.00" font-size="8" text-anchor="middle" dominant-baseline="central" fill="#333" font-family="Liberation Sans" transform="rotate(90 1124.00 783.00)">C1</text><rect x="1089.00" y="684.40" width="23.30" height="90.40" fill="#fff" stroke="#8c8c8c" stroke-width="1"/><rect x="1096.15" y="764.80" width="9.00" height="9.50" fill="#fff" stroke="#8c8c8c" stroke-width="1"/><circle cx="1083.10" cy="688.00" r="4" fill="#000"/><circle cx="1118.20" cy="688.00" r="4" fill="#000"/><circle cx="1083.10" cy="699.80" r="4" fill="#000"/><circle cx="1118.20" cy="699.80" r="4" fill="#000"/><circle cx="1083.10" cy="711.60" r="4" fill="#000"/><circle cx="1118.20" cy="711.60" r="4" fill="#000"/><circle cx="1083.10" cy="723.40" r="4" fill="#000"/><circle cx="1118.20" cy="723.40" r="4" fill="#000"/><circle cx="1083.10" cy="735.20" r="4" fill="#000"/><circle cx="1118.20" cy="735.20" r="4" fill="#000"/><circle cx="1083.10" cy="747.00" r="4" fill="#000"/><circle cx="1118.20" cy="747.00" r="4" fill="#000"/><circle cx="1083.10" cy="758.80" r="4" fill="#000"/><circle cx="1118.20" cy="758.80" r="4" fill="#000"/><circle cx="1083.10" cy="770.60" r="4" fill="#000"/><rect x="1114.20" y="766.60" width="8.00" height="8.00" fill="#000"/><text x="1100.50" y="729.00" font-size="9" text-anchor="middle" dominant-baseline="central" fill="#2a3a6a" font-family="Liberation Sans">U8</text><line x1="1146.90" y1="690.30" x2="1146.90" y2="760.80" stroke="#8c8c8c" stroke-width="1"/><rect x="1140.25" y="707.70" width="13.30" height="35.60" fill="#fff" stroke="#8c8c8c" stroke-width="1"/><circle cx="1146.90" cy="690.30" r="6" fill="#000"/><circle cx="1146.90" cy="760.80" r="6" fill="#000"/><text x="1131.50" y="726.00" font-size="9" text-anchor="middle" dominant-baseline="central" fill="#2a3a6a" font-family="Liberation Sans">R1</text><rect x="967.50" y="663.70" width="16.00" height="9.00" fill="#fff" stroke="#555" stroke-width="0.9"/><rect x="969.00" y="665.20" width="4.00" height="6.00" fill="#000"/><rect x="967.50" y="681.20" width="16.00" height="9.00" fill="#fff" stroke="#555" stroke-width="0.9"/><rect x="969.00" y="682.70" width="4.00" height="6.00" fill="#000"/><rect x="967.50" y="698.80" width="16.00" height="9.00" fill="#fff" stroke="#555" stroke-width="0.9"/><rect x="969.00" y="700.30" width="4.00" height="6.00" fill="#000"/><rect x="967.50" y="716.30" width="16.00" height="9.00" fill="#fff" stroke="#555" stroke-width="0.9"/><rect x="969.00" y="717.80" width="4.00" height="6.00" fill="#000"/><rect x="967.50" y="733.90" width="16.00" height="9.00" fill="#fff" stroke="#555" stroke-width="0.9"/><rect x="969.00" y="735.40" width="4.00" height="6.00" fill="#000"/><text x="630.50" y="-975.50" font-size="20" dominant-baseline="central" fill="#06060c" stroke="#06060c" stroke-width="0.1" font-family="Liberation Sans" transform="rotate(90)">SMR18</text><text x="648.12" y="-975.50" font-size="20" dominant-baseline="central" fill="#06060c" stroke="#06060c" stroke-width="0.1" font-family="Liberation Sans" transform="rotate(90)">SMB21</text><text x="665.75" y="-975.50" font-size="20" dominant-baseline="central" fill="#06060c" stroke="#06060c" stroke-width="0.1" font-family="Liberation Sans" transform="rotate(90)">SMD12</text><text x="683.38" y="-975.50" font-size="20" dominant-baseline="central" fill="#06060c" stroke="#06060c" stroke-width="0.1" font-family="Liberation Sans" transform="rotate(90)">SMR27</text><text x="701.00" y="-975.50" font-size="20" dominant-baseline="central" fill="#06060c" stroke="#06060c" stroke-width="0.1" font-family="Liberation Sans" transform="rotate(90)">SMR15</text><rect x="1021.20" y="663.70" width="16.00" height="9.00" fill="#fff" stroke="#555" stroke-width="0.9"/><rect x="1022.70" y="665.20" width="4.00" height="6.00" fill="#000"/><rect x="1021.20" y="681.20" width="16.00" height="9.00" fill="#fff" stroke="#555" stroke-width="0.9"/><rect x="1022.70" y="682.70" width="4.00" height="6.00" fill="#000"/><rect x="1021.20" y="698.80" width="16.00" height="9.00" fill="#fff" stroke="#555" stroke-width="0.9"/><rect x="1022.70" y="700.30" width="4.00" height="6.00" fill="#000"/><rect x="1021.20" y="716.30" width="16.00" height="9.00" fill="#fff" stroke="#555" stroke-width="0.9"/><rect x="1022.70" y="717.80" width="4.00" height="6.00" fill="#000"/><rect x="1021.20" y="733.90" width="16.00" height="9.00" fill="#fff" stroke="#555" stroke-width="0.9"/><rect x="1022.70" y="735.40" width="4.00" height="6.00" fill="#000"/><text x="630.50" y="-1029.20" font-size="20" dominant-baseline="central" fill="#06060c" stroke="#06060c" stroke-width="0.1" font-family="Liberation Sans" transform="rotate(90)">SMR18</text><text x="648.12" y="-1029.20" font-size="20" dominant-baseline="central" fill="#06060c" stroke="#06060c" stroke-width="0.1" font-family="Liberation Sans" transform="rotate(90)">SMB21</text><text x="665.75" y="-1029.20" font-size="20" dominant-baseline="central" fill="#06060c" stroke="#06060c" stroke-width="0.1" font-family="Liberation Sans" transform="rotate(90)">SMD12</text><text x="683.38" y="-1029.20" font-size="20" dominant-baseline="central" fill="#06060c" stroke="#06060c" stroke-width="0.1" font-family="Liberation Sans" transform="rotate(90)">SMR27</text><text x="701.00" y="-1029.20" font-size="20" dominant-baseline="central" fill="#06060c" stroke="#06060c" stroke-width="0.1" font-family="Liberation Sans" transform="rotate(90)">SMR16</text><circle cx="991.4" cy="646.3" r="3.6" fill="#fff" stroke="#222" stroke-width="0.9"/><circle cx="991.40" cy="646.30" r="2.4" fill="#000"/><rect x="950.20" y="771.20" width="8.80" height="18.00" fill="#fff" stroke="#8c8c8c" stroke-width="0.9"/><rect x="951.70" y="773.20" width="5.80" height="5.40" fill="#000"/><rect x="951.70" y="781.70" width="5.80" height="5.40" fill="#000"/><text x="954.60" y="762.00" font-size="5" text-anchor="middle" dominant-baseline="central" fill="#6a6a8a" font-family="Liberation Sans" transform="rotate(90 954.60 762.00)" textLength="16" lengthAdjust="spacingAndGlyphs">SMR8</text><rect x="961.84" y="771.20" width="8.80" height="18.00" fill="#fff" stroke="#8c8c8c" stroke-width="0.9"/><rect x="963.34" y="773.20" width="5.80" height="5.40" fill="#000"/><rect x="963.34" y="781.70" width="5.80" height="5.40" fill="#000"/><text x="966.24" y="762.00" font-size="5" text-anchor="middle" dominant-baseline="central" fill="#6a6a8a" font-family="Liberation Sans" transform="rotate(90 966.24 762.00)" textLength="16" lengthAdjust="spacingAndGlyphs">SMR8</text><rect x="973.48" y="771.20" width="8.80" height="18.00" fill="#fff" stroke="#8c8c8c" stroke-width="0.9"/><rect x="974.98" y="773.20" width="5.80" height="5.40" fill="#000"/><rect x="974.98" y="781.70" width="5.80" height="5.40" fill="#000"/><text x="977.88" y="762.00" font-size="5" text-anchor="middle" dominant-baseline="central" fill="#6a6a8a" font-family="Liberation Sans" transform="rotate(90 977.88 762.00)" textLength="16" lengthAdjust="spacingAndGlyphs">SMR8</text><rect x="985.12" y="771.20" width="8.80" height="18.00" fill="#fff" stroke="#8c8c8c" stroke-width="0.9"/><rect x="986.62" y="773.20" width="5.80" height="5.40" fill="#000"/><rect x="986.62" y="781.70" width="5.80" height="5.40" fill="#000"/><text x="989.52" y="762.00" font-size="5" text-anchor="middle" dominant-baseline="central" fill="#6a6a8a" font-family="Liberation Sans" transform="rotate(90 989.52 762.00)" textLength="16" lengthAdjust="spacingAndGlyphs">SMR8</text><rect x="996.76" y="771.20" width="8.80" height="18.00" fill="#fff" stroke="#8c8c8c" stroke-width="0.9"/><rect x="998.26" y="773.20" width="5.80" height="5.40" fill="#000"/><rect x="998.26" y="781.70" width="5.80" height="5.40" fill="#000"/><text x="1001.16" y="762.00" font-size="5" text-anchor="middle" dominant-baseline="central" fill="#6a6a8a" font-family="Liberation Sans" transform="rotate(90 1001.16 762.00)" textLength="16" lengthAdjust="spacingAndGlyphs">SMR8</text><rect x="1008.40" y="771.20" width="8.80" height="18.00" fill="#fff" stroke="#8c8c8c" stroke-width="0.9"/><rect x="1009.90" y="773.20" width="5.80" height="5.40" fill="#000"/><rect x="1009.90" y="781.70" width="5.80" height="5.40" fill="#000"/><text x="1012.80" y="762.00" font-size="5" text-anchor="middle" dominant-baseline="central" fill="#6a6a8a" font-family="Liberation Sans" transform="rotate(90 1012.80 762.00)" textLength="16" lengthAdjust="spacingAndGlyphs">SMR8</text><rect x="1020.04" y="771.20" width="8.80" height="18.00" fill="#fff" stroke="#8c8c8c" stroke-width="0.9"/><rect x="1021.54" y="773.20" width="5.80" height="5.40" fill="#000"/><rect x="1021.54" y="781.70" width="5.80" height="5.40" fill="#000"/><text x="1024.44" y="762.00" font-size="5" text-anchor="middle" dominant-baseline="central" fill="#6a6a8a" font-family="Liberation Sans" transform="rotate(90 1024.44 762.00)" textLength="16" lengthAdjust="spacingAndGlyphs">SMR8</text><rect x="1031.68" y="771.20" width="8.80" height="18.00" fill="#fff" stroke="#8c8c8c" stroke-width="0.9"/><rect x="1033.18" y="773.20" width="5.80" height="5.40" fill="#000"/><rect x="1033.18" y="781.70" width="5.80" height="5.40" fill="#000"/><text x="1036.08" y="762.00" font-size="5" text-anchor="middle" dominant-baseline="central" fill="#6a6a8a" font-family="Liberation Sans" transform="rotate(90 1036.08 762.00)" textLength="16" lengthAdjust="spacingAndGlyphs">SMR8</text><rect x="1043.32" y="771.20" width="8.80" height="18.00" fill="#fff" stroke="#8c8c8c" stroke-width="0.9"/><rect x="1044.82" y="773.20" width="5.80" height="5.40" fill="#000"/><rect x="1044.82" y="781.70" width="5.80" height="5.40" fill="#000"/><text x="1047.72" y="762.00" font-size="5" text-anchor="middle" dominant-baseline="central" fill="#6a6a8a" font-family="Liberation Sans" transform="rotate(90 1047.72 762.00)" textLength="16" lengthAdjust="spacingAndGlyphs">SMR8</text><rect x="1054.96" y="771.20" width="8.80" height="18.00" fill="#fff" stroke="#8c8c8c" stroke-width="0.9"/><rect x="1056.46" y="773.20" width="5.80" height="5.40" fill="#000"/><rect x="1056.46" y="781.70" width="5.80" height="5.40" fill="#000"/><text x="1059.36" y="762.00" font-size="5" text-anchor="middle" dominant-baseline="central" fill="#6a6a8a" font-family="Liberation Sans" transform="rotate(90 1059.36 762.00)" textLength="16" lengthAdjust="spacingAndGlyphs">SMR8</text><rect x="786.30" y="638.00" width="1.90" height="7.00" fill="#333"/><rect x="786.30" y="777.40" width="1.90" height="7.00" fill="#333"/><rect x="789.54" y="638.00" width="1.90" height="7.00" fill="#333"/><rect x="789.54" y="777.40" width="1.90" height="7.00" fill="#333"/><rect x="792.77" y="638.00" width="1.90" height="7.00" fill="#333"/><rect x="792.77" y="777.40" width="1.90" height="7.00" fill="#333"/><rect x="796.01" y="638.00" width="1.90" height="7.00" fill="#333"/><rect x="796.01" y="777.40" width="1.90" height="7.00" fill="#333"/><rect x="799.24" y="638.00" width="1.90" height="7.00" fill="#333"/><rect x="799.24" y="777.40" width="1.90" height="7.00" fill="#333"/><rect x="802.48" y="638.00" width="1.90" height="7.00" fill="#333"/><rect x="802.48" y="777.40" width="1.90" height="7.00" fill="#333"/><rect x="805.72" y="638.00" width="1.90" height="7.00" fill="#333"/><rect x="805.72" y="777.40" width="1.90" height="7.00" fill="#333"/><rect x="808.95" y="638.00" width="1.90" height="7.00" fill="#333"/><rect x="808.95" y="777.40" width="1.90" height="7.00" fill="#333"/><rect x="812.19" y="638.00" width="1.90" height="7.00" fill="#333"/><rect x="812.19" y="777.40" width="1.90" height="7.00" fill="#333"/><rect x="815.42" y="638.00" width="1.90" height="7.00" fill="#333"/><rect x="815.42" y="777.40" width="1.90" height="7.00" fill="#333"/><rect x="818.66" y="638.00" width="1.90" height="7.00" fill="#333"/><rect x="818.66" y="777.40" width="1.90" height="7.00" fill="#333"/><rect x="821.90" y="638.00" width="1.90" height="7.00" fill="#333"/><rect x="821.90" y="777.40" width="1.90" height="7.00" fill="#333"/><rect x="825.13" y="638.00" width="1.90" height="7.00" fill="#333"/><rect x="825.13" y="777.40" width="1.90" height="7.00" fill="#333"/><rect x="828.37" y="638.00" width="1.90" height="7.00" fill="#333"/><rect x="828.37" y="777.40" width="1.90" height="7.00" fill="#333"/><rect x="831.61" y="638.00" width="1.90" height="7.00" fill="#333"/><rect x="831.61" y="777.40" width="1.90" height="7.00" fill="#333"/><rect x="834.84" y="638.00" width="1.90" height="7.00" fill="#333"/><rect x="834.84" y="777.40" width="1.90" height="7.00" fill="#333"/><rect x="838.08" y="638.00" width="1.90" height="7.00" fill="#333"/><rect x="838.08" y="777.40" width="1.90" height="7.00" fill="#333"/><rect x="841.31" y="638.00" width="1.90" height="7.00" fill="#333"/><rect x="841.31" y="777.40" width="1.90" height="7.00" fill="#333"/><rect x="844.55" y="638.00" width="1.90" height="7.00" fill="#333"/><rect x="844.55" y="777.40" width="1.90" height="7.00" fill="#333"/><rect x="847.79" y="638.00" width="1.90" height="7.00" fill="#333"/><rect x="847.79" y="777.40" width="1.90" height="7.00" fill="#333"/><rect x="851.02" y="638.00" width="1.90" height="7.00" fill="#333"/><rect x="851.02" y="777.40" width="1.90" height="7.00" fill="#333"/><rect x="854.26" y="638.00" width="1.90" height="7.00" fill="#333"/><rect x="854.26" y="777.40" width="1.90" height="7.00" fill="#333"/><rect x="857.49" y="638.00" width="1.90" height="7.00" fill="#333"/><rect x="857.49" y="777.40" width="1.90" height="7.00" fill="#333"/><rect x="860.73" y="638.00" width="1.90" height="7.00" fill="#333"/><rect x="860.73" y="777.40" width="1.90" height="7.00" fill="#333"/><rect x="863.97" y="638.00" width="1.90" height="7.00" fill="#333"/><rect x="863.97" y="777.40" width="1.90" height="7.00" fill="#333"/><rect x="867.20" y="638.00" width="1.90" height="7.00" fill="#333"/><rect x="867.20" y="777.40" width="1.90" height="7.00" fill="#333"/><rect x="870.44" y="638.00" width="1.90" height="7.00" fill="#333"/><rect x="870.44" y="777.40" width="1.90" height="7.00" fill="#333"/><rect x="873.67" y="638.00" width="1.90" height="7.00" fill="#333"/><rect x="873.67" y="777.40" width="1.90" height="7.00" fill="#333"/><rect x="876.91" y="638.00" width="1.90" height="7.00" fill="#333"/><rect x="876.91" y="777.40" width="1.90" height="7.00" fill="#333"/><rect x="880.15" y="638.00" width="1.90" height="7.00" fill="#333"/><rect x="880.15" y="777.40" width="1.90" height="7.00" fill="#333"/><rect x="883.38" y="638.00" width="1.90" height="7.00" fill="#333"/><rect x="883.38" y="777.40" width="1.90" height="7.00" fill="#333"/><rect x="886.62" y="638.00" width="1.90" height="7.00" fill="#333"/><rect x="886.62" y="777.40" width="1.90" height="7.00" fill="#333"/><rect x="889.86" y="638.00" width="1.90" height="7.00" fill="#333"/><rect x="889.86" y="777.40" width="1.90" height="7.00" fill="#333"/><rect x="893.09" y="638.00" width="1.90" height="7.00" fill="#333"/><rect x="893.09" y="777.40" width="1.90" height="7.00" fill="#333"/><rect x="896.33" y="638.00" width="1.90" height="7.00" fill="#333"/><rect x="896.33" y="777.40" width="1.90" height="7.00" fill="#333"/><rect x="899.56" y="638.00" width="1.90" height="7.00" fill="#333"/><rect x="899.56" y="777.40" width="1.90" height="7.00" fill="#333"/><rect x="902.80" y="638.00" width="1.90" height="7.00" fill="#333"/><rect x="902.80" y="777.40" width="1.90" height="7.00" fill="#333"/><rect x="772.30" y="652.00" width="7.00" height="1.90" fill="#333"/><rect x="911.70" y="652.00" width="7.00" height="1.90" fill="#333"/><rect x="772.30" y="655.24" width="7.00" height="1.90" fill="#333"/><rect x="911.70" y="655.24" width="7.00" height="1.90" fill="#333"/><rect x="772.30" y="658.47" width="7.00" height="1.90" fill="#333"/><rect x="911.70" y="658.47" width="7.00" height="1.90" fill="#333"/><rect x="772.30" y="661.71" width="7.00" height="1.90" fill="#333"/><rect x="911.70" y="661.71" width="7.00" height="1.90" fill="#333"/><rect x="772.30" y="664.94" width="7.00" height="1.90" fill="#333"/><rect x="911.70" y="664.94" width="7.00" height="1.90" fill="#333"/><rect x="772.30" y="668.18" width="7.00" height="1.90" fill="#333"/><rect x="911.70" y="668.18" width="7.00" height="1.90" fill="#333"/><rect x="772.30" y="671.42" width="7.00" height="1.90" fill="#333"/><rect x="911.70" y="671.42" width="7.00" height="1.90" fill="#333"/><rect x="772.30" y="674.65" width="7.00" height="1.90" fill="#333"/><rect x="911.70" y="674.65" width="7.00" height="1.90" fill="#333"/><rect x="772.30" y="677.89" width="7.00" height="1.90" fill="#333"/><rect x="911.70" y="677.89" width="7.00" height="1.90" fill="#333"/><rect x="772.30" y="681.12" width="7.00" height="1.90" fill="#333"/><rect x="911.70" y="681.12" width="7.00" height="1.90" fill="#333"/><rect x="772.30" y="684.36" width="7.00" height="1.90" fill="#333"/><rect x="911.70" y="684.36" width="7.00" height="1.90" fill="#333"/><rect x="772.30" y="687.60" width="7.00" height="1.90" fill="#333"/><rect x="911.70" y="687.60" width="7.00" height="1.90" fill="#333"/><rect x="772.30" y="690.83" width="7.00" height="1.90" fill="#333"/><rect x="911.70" y="690.83" width="7.00" height="1.90" fill="#333"/><rect x="772.30" y="694.07" width="7.00" height="1.90" fill="#333"/><rect x="911.70" y="694.07" width="7.00" height="1.90" fill="#333"/><rect x="772.30" y="697.31" width="7.00" height="1.90" fill="#333"/><rect x="911.70" y="697.31" width="7.00" height="1.90" fill="#333"/><rect x="772.30" y="700.54" width="7.00" height="1.90" fill="#333"/><rect x="911.70" y="700.54" width="7.00" height="1.90" fill="#333"/><rect x="772.30" y="703.78" width="7.00" height="1.90" fill="#333"/><rect x="911.70" y="703.78" width="7.00" height="1.90" fill="#333"/><rect x="772.30" y="707.01" width="7.00" height="1.90" fill="#333"/><rect x="911.70" y="707.01" width="7.00" height="1.90" fill="#333"/><rect x="772.30" y="710.25" width="7.00" height="1.90" fill="#333"/><rect x="911.70" y="710.25" width="7.00" height="1.90" fill="#333"/><rect x="772.30" y="713.49" width="7.00" height="1.90" fill="#333"/><rect x="911.70" y="713.49" width="7.00" height="1.90" fill="#333"/><rect x="772.30" y="716.72" width="7.00" height="1.90" fill="#333"/><rect x="911.70" y="716.72" width="7.00" height="1.90" fill="#333"/><rect x="772.30" y="719.96" width="7.00" height="1.90" fill="#333"/><rect x="911.70" y="719.96" width="7.00" height="1.90" fill="#333"/><rect x="772.30" y="723.19" width="7.00" height="1.90" fill="#333"/><rect x="911.70" y="723.19" width="7.00" height="1.90" fill="#333"/><rect x="772.30" y="726.43" width="7.00" height="1.90" fill="#333"/><rect x="911.70" y="726.43" width="7.00" height="1.90" fill="#333"/><rect x="772.30" y="729.67" width="7.00" height="1.90" fill="#333"/><rect x="911.70" y="729.67" width="7.00" height="1.90" fill="#333"/><rect x="772.30" y="732.90" width="7.00" height="1.90" fill="#333"/><rect x="911.70" y="732.90" width="7.00" height="1.90" fill="#333"/><rect x="772.30" y="736.14" width="7.00" height="1.90" fill="#333"/><rect x="911.70" y="736.14" width="7.00" height="1.90" fill="#333"/><rect x="772.30" y="739.38" width="7.00" height="1.90" fill="#333"/><rect x="911.70" y="739.38" width="7.00" height="1.90" fill="#333"/><rect x="772.30" y="742.61" width="7.00" height="1.90" fill="#333"/><rect x="911.70" y="742.61" width="7.00" height="1.90" fill="#333"/><rect x="772.30" y="745.85" width="7.00" height="1.90" fill="#333"/><rect x="911.70" y="745.85" width="7.00" height="1.90" fill="#333"/><rect x="772.30" y="749.08" width="7.00" height="1.90" fill="#333"/><rect x="911.70" y="749.08" width="7.00" height="1.90" fill="#333"/><rect x="772.30" y="752.32" width="7.00" height="1.90" fill="#333"/><rect x="911.70" y="752.32" width="7.00" height="1.90" fill="#333"/><rect x="772.30" y="755.56" width="7.00" height="1.90" fill="#333"/><rect x="911.70" y="755.56" width="7.00" height="1.90" fill="#333"/><rect x="772.30" y="758.79" width="7.00" height="1.90" fill="#333"/><rect x="911.70" y="758.79" width="7.00" height="1.90" fill="#333"/><rect x="772.30" y="762.03" width="7.00" height="1.90" fill="#333"/><rect x="911.70" y="762.03" width="7.00" height="1.90" fill="#333"/><rect x="772.30" y="765.26" width="7.00" height="1.90" fill="#333"/><rect x="911.70" y="765.26" width="7.00" height="1.90" fill="#333"/><rect x="772.30" y="768.50" width="7.00" height="1.90" fill="#333"/><rect x="911.70" y="768.50" width="7.00" height="1.90" fill="#333"/><rect x="779.30" y="645.00" width="132.40" height="132.40" fill="#fff" stroke="#8c8c8c" stroke-width="1"/><text x="845.00" y="711.00" font-size="8" text-anchor="middle" dominant-baseline="central" fill="#333" font-family="Liberation Sans" transform="rotate(90 845.00 711.00)">U1</text><circle cx="786" cy="773" r="1.3" fill="none" stroke="#555" stroke-width="0.6"/><circle cx="768.2" cy="537.7" r="21.4" fill="none" stroke="#8c8c8c" stroke-width="0.9"/><rect x="759.40" y="520.70" width="23.30" height="33.30" fill="none" stroke="#8c8c8c" stroke-width="0.9"/><circle cx="764.60" cy="526.00" r="4.4" fill="#000"/><circle cx="776.00" cy="537.70" r="4.4" fill="#000"/><circle cx="764.60" cy="549.30" r="4.4" fill="#000"/><path d="M754.2 552.7 l-3 3 l2 2 l3 -3" fill="none" stroke="#8c8c8c" stroke-width="0.8"/><circle cx="816.8" cy="537.7" r="21.4" fill="none" stroke="#8c8c8c" stroke-width="0.9"/><rect x="808.00" y="520.70" width="23.30" height="33.30" fill="none" stroke="#8c8c8c" stroke-width="0.9"/><circle cx="813.20" cy="526.00" r="4.4" fill="#000"/><circle cx="824.60" cy="537.70" r="4.4" fill="#000"/><circle cx="813.20" cy="549.30" r="4.4" fill="#000"/><path d="M802.8 552.7 l-3 3 l2 2 l3 -3" fill="none" stroke="#8c8c8c" stroke-width="0.8"/><circle cx="768.2" cy="602.3" r="21.4" fill="none" stroke="#8c8c8c" stroke-width="0.9"/><rect x="759.40" y="585.30" width="23.30" height="33.30" fill="none" stroke="#8c8c8c" stroke-width="0.9"/><circle cx="764.60" cy="590.60" r="4.4" fill="#000"/><circle cx="776.00" cy="602.30" r="4.4" fill="#000"/><circle cx="764.60" cy="613.90" r="4.4" fill="#000"/><path d="M754.2 617.3 l-3 3 l2 2 l3 -3" fill="none" stroke="#8c8c8c" stroke-width="0.8"/><circle cx="816.8" cy="602.3" r="21.4" fill="none" stroke="#8c8c8c" stroke-width="0.9"/><rect x="808.00" y="585.30" width="23.30" height="33.30" fill="none" stroke="#8c8c8c" stroke-width="0.9"/><circle cx="813.20" cy="590.60" r="4.4" fill="#000"/><circle cx="824.60" cy="602.30" r="4.4" fill="#000"/><circle cx="813.20" cy="613.90" r="4.4" fill="#000"/><path d="M802.8 617.3 l-3 3 l2 2 l3 -3" fill="none" stroke="#8c8c8c" stroke-width="0.8"/><circle cx="865.7" cy="569.8" r="21.4" fill="none" stroke="#8c8c8c" stroke-width="0.9"/><rect x="856.90" y="552.80" width="23.30" height="33.30" fill="none" stroke="#8c8c8c" stroke-width="0.9"/><circle cx="862.10" cy="558.10" r="4.4" fill="#000"/><circle cx="873.50" cy="569.80" r="4.4" fill="#000"/><circle cx="862.10" cy="581.40" r="4.4" fill="#000"/><path d="M851.7 584.8 l-3 3 l2 2 l3 -3" fill="none" stroke="#8c8c8c" stroke-width="0.8"/><rect x="924.80" y="536.00" width="4.40" height="15.00" fill="#fff" stroke="#8c8c8c" stroke-width="0.8"/><rect x="920.20" y="536.30" width="4.80" height="4.30" fill="#000"/><rect x="920.20" y="546.50" width="4.80" height="4.30" fill="#000"/><rect x="928.80" y="541.30" width="5.80" height="4.40" fill="#000"/><rect x="957.80" y="536.00" width="4.40" height="15.00" fill="#fff" stroke="#8c8c8c" stroke-width="0.8"/><rect x="962.00" y="536.30" width="4.80" height="4.30" fill="#000"/><rect x="962.00" y="546.50" width="4.80" height="4.30" fill="#000"/><rect x="952.40" y="541.30" width="5.80" height="4.40" fill="#000"/><rect x="910.00" y="554.10" width="4.40" height="15.00" fill="#fff" stroke="#8c8c8c" stroke-width="0.8"/><rect x="914.20" y="554.40" width="4.80" height="4.30" fill="#000"/><rect x="914.20" y="564.60" width="4.80" height="4.30" fill="#000"/><rect x="904.60" y="559.40" width="5.80" height="4.40" fill="#000"/><rect x="973.20" y="554.10" width="4.40" height="15.00" fill="#fff" stroke="#8c8c8c" stroke-width="0.8"/><rect x="968.60" y="554.40" width="4.80" height="4.30" fill="#000"/><rect x="968.60" y="564.60" width="4.80" height="4.30" fill="#000"/><rect x="977.20" y="559.40" width="5.80" height="4.40" fill="#000"/><rect x="924.80" y="572.00" width="4.40" height="15.00" fill="#fff" stroke="#8c8c8c" stroke-width="0.8"/><rect x="920.20" y="572.30" width="4.80" height="4.30" fill="#000"/><rect x="920.20" y="582.50" width="4.80" height="4.30" fill="#000"/><rect x="928.80" y="577.30" width="5.80" height="4.40" fill="#000"/><rect x="957.80" y="572.00" width="4.40" height="15.00" fill="#fff" stroke="#8c8c8c" stroke-width="0.8"/><rect x="962.00" y="572.30" width="4.80" height="4.30" fill="#000"/><rect x="962.00" y="582.50" width="4.80" height="4.30" fill="#000"/><rect x="952.40" y="577.30" width="5.80" height="4.40" fill="#000"/><rect x="910.00" y="589.50" width="4.40" height="15.00" fill="#fff" stroke="#8c8c8c" stroke-width="0.8"/><rect x="914.20" y="589.80" width="4.80" height="4.30" fill="#000"/><rect x="914.20" y="600.00" width="4.80" height="4.30" fill="#000"/><rect x="904.60" y="594.80" width="5.80" height="4.40" fill="#000"/><rect x="973.20" y="589.50" width="4.40" height="15.00" fill="#fff" stroke="#8c8c8c" stroke-width="0.8"/><rect x="968.60" y="589.80" width="4.80" height="4.30" fill="#000"/><rect x="968.60" y="600.00" width="4.80" height="4.30" fill="#000"/><rect x="977.20" y="594.80" width="5.80" height="4.40" fill="#000"/><rect x="924.80" y="607.10" width="4.40" height="15.00" fill="#fff" stroke="#8c8c8c" stroke-width="0.8"/><rect x="920.20" y="607.40" width="4.80" height="4.30" fill="#000"/><rect x="920.20" y="617.60" width="4.80" height="4.30" fill="#000"/><rect x="928.80" y="612.40" width="5.80" height="4.40" fill="#000"/><rect x="957.80" y="607.10" width="4.40" height="15.00" fill="#fff" stroke="#8c8c8c" stroke-width="0.8"/><rect x="962.00" y="607.40" width="4.80" height="4.30" fill="#000"/><rect x="962.00" y="617.60" width="4.80" height="4.30" fill="#000"/><rect x="952.40" y="612.40" width="5.80" height="4.40" fill="#000"/><rect x="671.30" y="507.00" width="34.60" height="141.00" fill="#fff" stroke="#8c8c8c" stroke-width="1"/><rect x="686.50" y="576.00" width="3.00" height="3.00" fill="#000"/><rect x="710.30" y="514.60" width="30.70" height="9.60" fill="#fff" stroke="#8c8c8c" stroke-width="0.9"/><rect x="713.80" y="515.40" width="22.80" height="8.00" fill="#000"/><rect x="710.30" y="528.60" width="30.70" height="9.60" fill="#fff" stroke="#8c8c8c" stroke-width="0.9"/><rect x="713.80" y="529.40" width="22.80" height="8.00" fill="#000"/><rect x="710.30" y="542.60" width="30.70" height="9.60" fill="#fff" stroke="#8c8c8c" stroke-width="0.9"/><rect x="713.80" y="543.40" width="22.80" height="8.00" fill="#000"/><rect x="710.30" y="556.60" width="30.70" height="9.60" fill="#fff" stroke="#8c8c8c" stroke-width="0.9"/><rect x="713.80" y="557.40" width="22.80" height="8.00" fill="#000"/><rect x="710.30" y="570.60" width="30.70" height="9.60" fill="#fff" stroke="#8c8c8c" stroke-width="0.9"/><rect x="713.80" y="571.40" width="22.80" height="8.00" fill="#000"/><rect x="710.30" y="584.60" width="30.70" height="9.60" fill="#fff" stroke="#8c8c8c" stroke-width="0.9"/><rect x="713.80" y="585.40" width="22.80" height="8.00" fill="#000"/><rect x="710.30" y="598.60" width="30.70" height="9.60" fill="#fff" stroke="#8c8c8c" stroke-width="0.9"/><rect x="713.80" y="599.40" width="22.80" height="8.00" fill="#000"/><rect x="710.30" y="612.60" width="30.70" height="9.60" fill="#fff" stroke="#8c8c8c" stroke-width="0.9"/><rect x="713.80" y="613.40" width="22.80" height="8.00" fill="#000"/><rect x="710.30" y="626.60" width="30.70" height="9.60" fill="#fff" stroke="#8c8c8c" stroke-width="0.9"/><rect x="713.80" y="627.40" width="22.80" height="8.00" fill="#000"/><rect x="710.30" y="640.60" width="30.70" height="9.60" fill="#fff" stroke="#8c8c8c" stroke-width="0.9"/><rect x="713.80" y="641.40" width="22.80" height="8.00" fill="#000"/><text x="484.00" y="-725.50" font-size="17" dominant-baseline="central" fill="#06060c" stroke="#06060c" stroke-width="0.2" font-family="Liberation Sans" transform="rotate(90)">SMB1</text><text x="503.96" y="-725.50" font-size="17" dominant-baseline="central" fill="#06060c" stroke="#06060c" stroke-width="0.2" font-family="Liberation Sans" transform="rotate(90)">SMD3</text><text x="523.92" y="-725.50" font-size="17" dominant-baseline="central" fill="#06060c" stroke="#06060c" stroke-width="0.2" font-family="Liberation Sans" transform="rotate(90)">SMD5</text><text x="543.88" y="-725.50" font-size="17" dominant-baseline="central" fill="#06060c" stroke="#06060c" stroke-width="0.2" font-family="Liberation Sans" transform="rotate(90)">SMB9</text><text x="556.13" y="-725.50" font-size="17" dominant-baseline="central" fill="#06060c" stroke="#06060c" stroke-width="0.2" font-family="Liberation Sans" transform="rotate(90)">SMD11</text><text x="583.80" y="-725.50" font-size="17" dominant-baseline="central" fill="#06060c" stroke="#06060c" stroke-width="0.2" font-family="Liberation Sans" transform="rotate(90)">SMD9</text><text x="592.20" y="-725.50" font-size="17" dominant-baseline="central" fill="#06060c" stroke="#06060c" stroke-width="0.2" font-family="Liberation Sans" transform="rotate(90)">SMD10</text><rect x="713.70" y="657.60" width="23.70" height="10.00" fill="#fff" stroke="#8c8c8c" stroke-width="0.9"/><rect x="714.60" y="658.60" width="7.50" height="8.00" fill="#000"/><rect x="729.00" y="658.60" width="7.50" height="8.00" fill="#000"/><rect x="713.70" y="671.40" width="23.70" height="10.00" fill="#fff" stroke="#8c8c8c" stroke-width="0.9"/><rect x="714.60" y="672.40" width="7.50" height="8.00" fill="#000"/><rect x="729.00" y="672.40" width="7.50" height="8.00" fill="#000"/><rect x="713.70" y="685.20" width="23.70" height="10.00" fill="#fff" stroke="#8c8c8c" stroke-width="0.9"/><rect x="714.60" y="686.20" width="7.50" height="8.00" fill="#000"/><rect x="729.00" y="686.20" width="7.50" height="8.00" fill="#000"/><rect x="713.70" y="699.00" width="23.70" height="10.00" fill="#fff" stroke="#8c8c8c" stroke-width="0.9"/><rect x="714.60" y="700.00" width="7.50" height="8.00" fill="#000"/><rect x="729.00" y="700.00" width="7.50" height="8.00" fill="#000"/><rect x="713.70" y="712.80" width="23.70" height="10.00" fill="#fff" stroke="#8c8c8c" stroke-width="0.9"/><rect x="714.60" y="713.80" width="7.50" height="8.00" fill="#000"/><rect x="729.00" y="713.80" width="7.50" height="8.00" fill="#000"/><rect x="713.70" y="726.60" width="23.70" height="10.00" fill="#fff" stroke="#8c8c8c" stroke-width="0.9"/><rect x="714.60" y="727.60" width="7.50" height="8.00" fill="#000"/><rect x="729.00" y="727.60" width="7.50" height="8.00" fill="#000"/><rect x="713.70" y="740.40" width="23.70" height="10.00" fill="#fff" stroke="#8c8c8c" stroke-width="0.9"/><rect x="714.60" y="741.40" width="7.50" height="8.00" fill="#000"/><rect x="729.00" y="741.40" width="7.50" height="8.00" fill="#000"/><rect x="713.70" y="754.20" width="23.70" height="10.00" fill="#fff" stroke="#8c8c8c" stroke-width="0.9"/><rect x="714.60" y="755.20" width="7.50" height="8.00" fill="#000"/><rect x="729.00" y="755.20" width="7.50" height="8.00" fill="#000"/><rect x="713.70" y="768.00" width="23.70" height="10.00" fill="#fff" stroke="#8c8c8c" stroke-width="0.9"/><rect x="714.60" y="769.00" width="7.50" height="8.00" fill="#000"/><rect x="729.00" y="769.00" width="7.50" height="8.00" fill="#000"/><rect x="713.70" y="781.80" width="23.70" height="10.00" fill="#fff" stroke="#8c8c8c" stroke-width="0.9"/><rect x="714.60" y="782.80" width="7.50" height="8.00" fill="#000"/><rect x="729.00" y="782.80" width="7.50" height="8.00" fill="#000"/><text x="762.00" y="-725.50" font-size="20" dominant-baseline="central" fill="#06060c" stroke="#06060c" stroke-width="0" font-family="Liberation Sans" transform="rotate(90)">SMR30</text><text x="630.00" y="-691.50" font-size="20" dominant-baseline="central" fill="#06060c" stroke="#06060c" stroke-width="0.3" font-family="Liberation Sans" transform="rotate(90)">SMB16</text><text x="641.89" y="-691.50" font-size="20" dominant-baseline="central" fill="#06060c" stroke="#06060c" stroke-width="0.3" font-family="Liberation Sans" transform="rotate(90)">SMR22</text><text x="653.78" y="-691.50" font-size="20" dominant-baseline="central" fill="#06060c" stroke="#06060c" stroke-width="0.3" font-family="Liberation Sans" transform="rotate(90)">SMB10</text><text x="665.67" y="-691.50" font-size="20" dominant-baseline="central" fill="#06060c" stroke="#06060c" stroke-width="0.3" font-family="Liberation Sans" transform="rotate(90)">SMD18</text><text x="677.56" y="-691.50" font-size="20" dominant-baseline="central" fill="#06060c" stroke="#06060c" stroke-width="0.3" font-family="Liberation Sans" transform="rotate(90)">SMR27</text><text x="689.44" y="-691.50" font-size="20" dominant-baseline="central" fill="#06060c" stroke="#06060c" stroke-width="0.3" font-family="Liberation Sans" transform="rotate(90)">SMB19</text><text x="701.33" y="-691.50" font-size="20" dominant-baseline="central" fill="#06060c" stroke="#06060c" stroke-width="0.3" font-family="Liberation Sans" transform="rotate(90)">SMR24</text><text x="713.22" y="-691.50" font-size="20" dominant-baseline="central" fill="#06060c" stroke="#06060c" stroke-width="0.3" font-family="Liberation Sans" transform="rotate(90)">SMB12</text><text x="725.11" y="-691.50" font-size="20" dominant-baseline="central" fill="#06060c" stroke="#06060c" stroke-width="0.3" font-family="Liberation Sans" transform="rotate(90)">SMR26</text><text x="737.00" y="-691.50" font-size="20" dominant-baseline="central" fill="#06060c" stroke="#06060c" stroke-width="0.3" font-family="Liberation Sans" transform="rotate(90)">SMR29</text><text x="670.50" y="728.00" font-size="7.8" text-anchor="middle" dominant-baseline="central" fill="#777" font-family="Liberation Sans" transform="rotate(-90 670.50 728.00)" textLength="46" lengthAdjust="spacingAndGlyphs">P/N PC009</text><text x="553.00" y="-755.70" font-size="17" dominant-baseline="central" fill="#06060c" stroke="#06060c" stroke-width="0" font-family="Liberation Sans" transform="rotate(90)">SMD7</text><text x="605.00" y="-755.70" font-size="17" dominant-baseline="central" fill="#06060c" stroke="#06060c" stroke-width="0" font-family="Liberation Sans" transform="rotate(90)">SMD1</text><text x="620.76" y="-755.70" font-size="17" dominant-baseline="central" fill="#06060c" stroke="#06060c" stroke-width="0" font-family="Liberation Sans" transform="rotate(90)">SMD2</text></svg>
</body></html>
